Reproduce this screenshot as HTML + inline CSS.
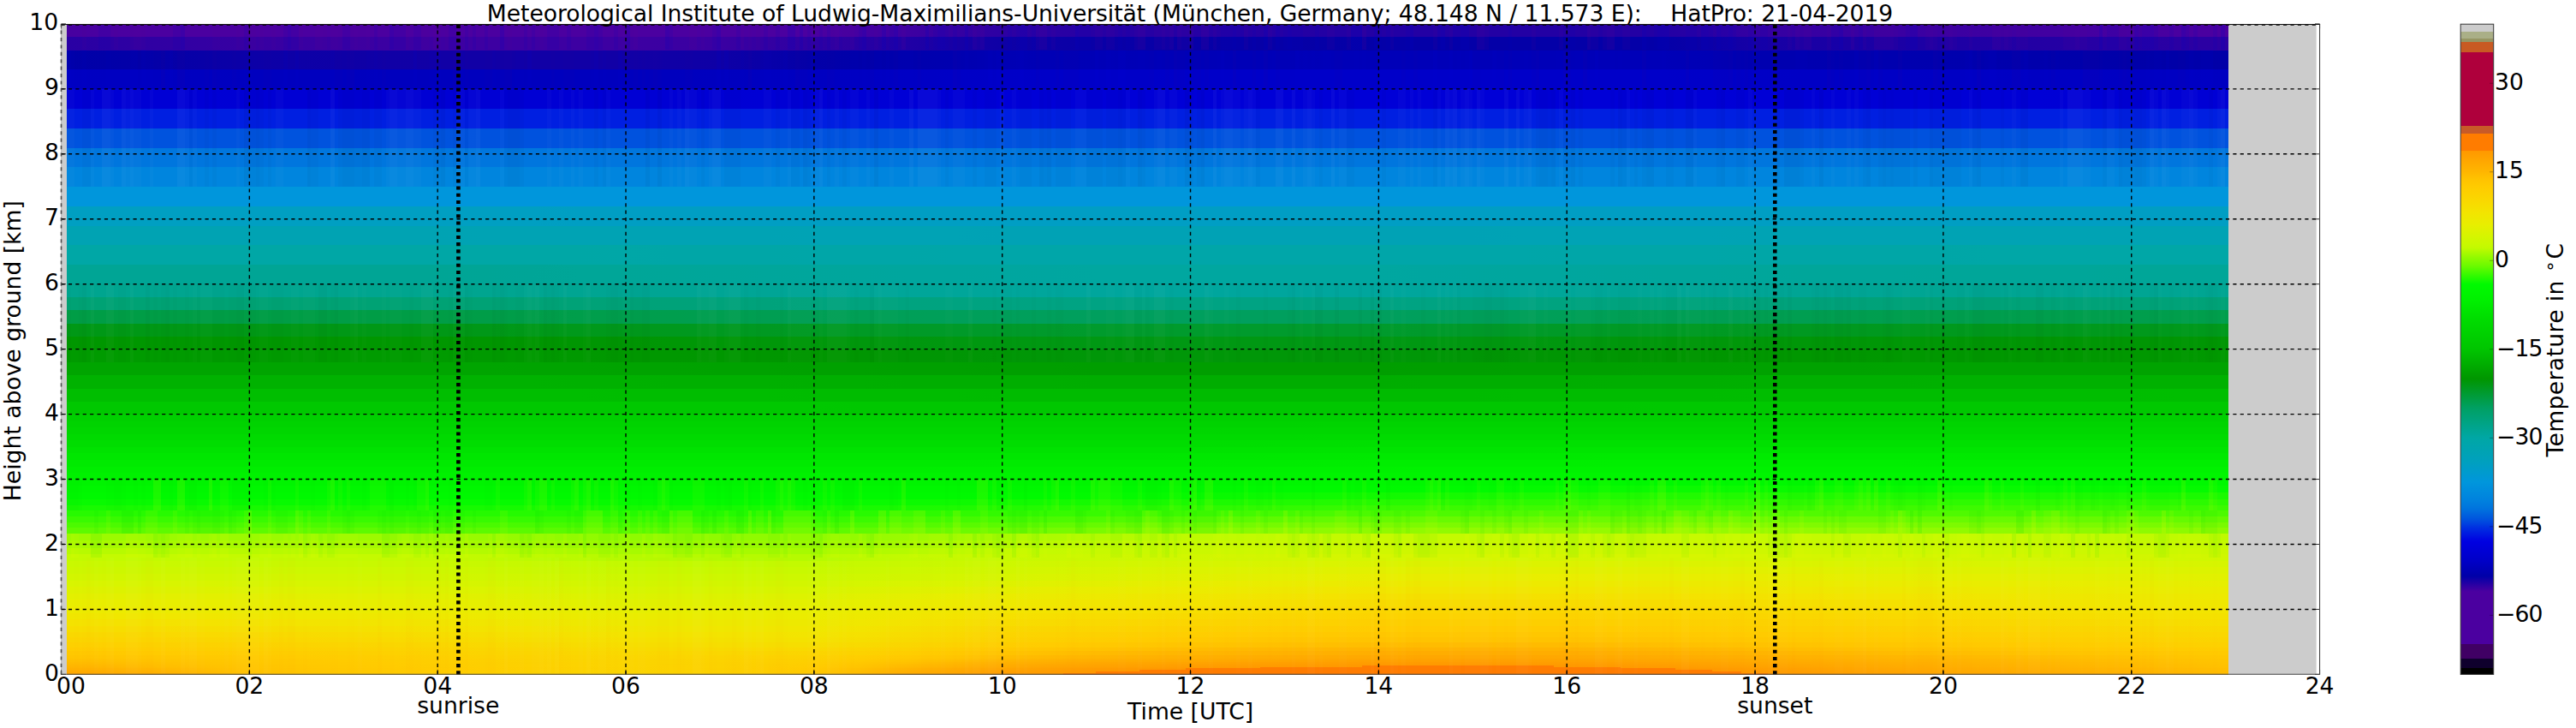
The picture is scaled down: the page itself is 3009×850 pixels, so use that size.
<!DOCTYPE html>
<html lang="en"><head><meta charset="utf-8"><title>HatPro temperature 21-04-2019</title>
<style>html,body{margin:0;padding:0;background:#fff}body{width:3009px;height:850px;overflow:hidden}svg{display:block}text{font-family:'DejaVu Sans', 'Liberation Sans', sans-serif;font-size:26.60px;fill:#000}</style></head><body>
<svg width="3009" height="850" viewBox="0 0 3009 850">
<rect width="3009" height="850" fill="#fff"/>
<defs>
<linearGradient id="g0" x1="0" x2="1" y1="0" y2="0"><stop offset="0.0000" stop-color="#ffa400"/><stop offset="0.0192" stop-color="#ffa900"/><stop offset="0.0410" stop-color="#ffaf00"/><stop offset="0.0627" stop-color="#ffb700"/><stop offset="0.0845" stop-color="#ffc100"/><stop offset="0.1063" stop-color="#ffc500"/><stop offset="0.1280" stop-color="#ffc800"/><stop offset="0.1498" stop-color="#ffca00"/><stop offset="0.1716" stop-color="#ffcc00"/><stop offset="0.1933" stop-color="#fdcf00"/><stop offset="0.2151" stop-color="#fcd100"/><stop offset="0.2369" stop-color="#fcd300"/><stop offset="0.2586" stop-color="#fbd400"/><stop offset="0.2804" stop-color="#fcd200"/><stop offset="0.3022" stop-color="#fdd100"/><stop offset="0.3239" stop-color="#ffcc00"/><stop offset="0.3457" stop-color="#ffc700"/><stop offset="0.3675" stop-color="#ffb900"/><stop offset="0.3892" stop-color="#ffab00"/><stop offset="0.4110" stop-color="#ffa400"/><stop offset="0.4328" stop-color="#ff9c00"/><stop offset="0.4545" stop-color="#ff9900"/><stop offset="0.4611" stop-color="#ff9800"/><stop offset="0.4611" stop-color="#ff7c00"/><stop offset="0.7871" stop-color="#ff7c00"/><stop offset="0.7871" stop-color="#ff9800"/><stop offset="0.8028" stop-color="#ff9b00"/><stop offset="0.8246" stop-color="#ff9f00"/><stop offset="0.8463" stop-color="#ffa200"/><stop offset="0.8681" stop-color="#ffa500"/><stop offset="0.8899" stop-color="#ffa800"/><stop offset="0.9116" stop-color="#ffab00"/><stop offset="0.9334" stop-color="#ffae00"/><stop offset="0.9552" stop-color="#ffb100"/><stop offset="0.9769" stop-color="#ffb500"/><stop offset="0.9987" stop-color="#ffbb00"/><stop offset="1.0000" stop-color="#ffbb00"/></linearGradient>
<linearGradient id="g1" x1="0" x2="1" y1="0" y2="0"><stop offset="0.0000" stop-color="#ffa800"/><stop offset="0.0192" stop-color="#ffad00"/><stop offset="0.0410" stop-color="#ffb200"/><stop offset="0.0627" stop-color="#ffb900"/><stop offset="0.0845" stop-color="#ffc200"/><stop offset="0.1063" stop-color="#ffc500"/><stop offset="0.1280" stop-color="#ffc800"/><stop offset="0.1498" stop-color="#ffca00"/><stop offset="0.1716" stop-color="#ffcc00"/><stop offset="0.1933" stop-color="#fecf00"/><stop offset="0.2151" stop-color="#fcd100"/><stop offset="0.2369" stop-color="#fcd300"/><stop offset="0.2586" stop-color="#fbd400"/><stop offset="0.2804" stop-color="#fcd300"/><stop offset="0.3022" stop-color="#fdd100"/><stop offset="0.3239" stop-color="#fecd00"/><stop offset="0.3457" stop-color="#ffc800"/><stop offset="0.3675" stop-color="#ffbc00"/><stop offset="0.3892" stop-color="#ffae00"/><stop offset="0.4110" stop-color="#ffa700"/><stop offset="0.4328" stop-color="#ff9f00"/><stop offset="0.4545" stop-color="#ff9c00"/><stop offset="0.4761" stop-color="#ff9800"/><stop offset="0.4761" stop-color="#ff7c00"/><stop offset="0.7748" stop-color="#ff7c00"/><stop offset="0.7748" stop-color="#ff9800"/><stop offset="0.7810" stop-color="#ff9900"/><stop offset="0.8028" stop-color="#ff9d00"/><stop offset="0.8246" stop-color="#ffa100"/><stop offset="0.8463" stop-color="#ffa400"/><stop offset="0.8681" stop-color="#ffa700"/><stop offset="0.8899" stop-color="#ffaa00"/><stop offset="0.9116" stop-color="#ffad00"/><stop offset="0.9334" stop-color="#ffb000"/><stop offset="0.9552" stop-color="#ffb300"/><stop offset="0.9769" stop-color="#ffb700"/><stop offset="0.9987" stop-color="#ffbc00"/><stop offset="1.0000" stop-color="#ffbc00"/></linearGradient>
<linearGradient id="g2" x1="0" x2="1" y1="0" y2="0"><stop offset="0.0000" stop-color="#ffac00"/><stop offset="0.0192" stop-color="#ffb000"/><stop offset="0.0410" stop-color="#ffb500"/><stop offset="0.0627" stop-color="#ffbc00"/><stop offset="0.0845" stop-color="#ffc300"/><stop offset="0.1063" stop-color="#ffc600"/><stop offset="0.1280" stop-color="#ffc800"/><stop offset="0.1498" stop-color="#ffca00"/><stop offset="0.1716" stop-color="#ffcc00"/><stop offset="0.1933" stop-color="#fece00"/><stop offset="0.2151" stop-color="#fdd100"/><stop offset="0.2369" stop-color="#fcd300"/><stop offset="0.2586" stop-color="#fbd400"/><stop offset="0.2804" stop-color="#fcd300"/><stop offset="0.3022" stop-color="#fcd100"/><stop offset="0.3239" stop-color="#fecd00"/><stop offset="0.3457" stop-color="#ffc900"/><stop offset="0.3675" stop-color="#ffbe00"/><stop offset="0.3892" stop-color="#ffb100"/><stop offset="0.4110" stop-color="#ffa900"/><stop offset="0.4328" stop-color="#ffa200"/><stop offset="0.4545" stop-color="#ff9e00"/><stop offset="0.4763" stop-color="#ff9a00"/><stop offset="0.4963" stop-color="#ff9800"/><stop offset="0.4963" stop-color="#ff7c00"/><stop offset="0.7612" stop-color="#ff7c00"/><stop offset="0.7612" stop-color="#ff9800"/><stop offset="0.7810" stop-color="#ff9b00"/><stop offset="0.8028" stop-color="#ff9f00"/><stop offset="0.8246" stop-color="#ffa300"/><stop offset="0.8463" stop-color="#ffa600"/><stop offset="0.8681" stop-color="#ffa900"/><stop offset="0.8899" stop-color="#ffac00"/><stop offset="0.9116" stop-color="#ffaf00"/><stop offset="0.9334" stop-color="#ffb200"/><stop offset="0.9552" stop-color="#ffb500"/><stop offset="0.9769" stop-color="#ffb900"/><stop offset="0.9987" stop-color="#ffbd00"/><stop offset="1.0000" stop-color="#ffbd00"/></linearGradient>
<linearGradient id="g3" x1="0" x2="1" y1="0" y2="0"><stop offset="0.0000" stop-color="#ffb000"/><stop offset="0.0192" stop-color="#ffb300"/><stop offset="0.0410" stop-color="#ffb800"/><stop offset="0.0627" stop-color="#ffbe00"/><stop offset="0.0845" stop-color="#ffc400"/><stop offset="0.1063" stop-color="#ffc600"/><stop offset="0.1280" stop-color="#ffc800"/><stop offset="0.1498" stop-color="#ffca00"/><stop offset="0.1716" stop-color="#ffcc00"/><stop offset="0.1933" stop-color="#fece00"/><stop offset="0.2151" stop-color="#fdd000"/><stop offset="0.2369" stop-color="#fcd200"/><stop offset="0.2586" stop-color="#fbd400"/><stop offset="0.2804" stop-color="#fcd300"/><stop offset="0.3022" stop-color="#fcd100"/><stop offset="0.3239" stop-color="#fece00"/><stop offset="0.3457" stop-color="#ffca00"/><stop offset="0.3675" stop-color="#ffc000"/><stop offset="0.3892" stop-color="#ffb400"/><stop offset="0.4110" stop-color="#ffac00"/><stop offset="0.4328" stop-color="#ffa500"/><stop offset="0.4545" stop-color="#ffa100"/><stop offset="0.4763" stop-color="#ff9c00"/><stop offset="0.4981" stop-color="#ff9a00"/><stop offset="0.5175" stop-color="#ff9800"/><stop offset="0.5175" stop-color="#ff7c00"/><stop offset="0.7441" stop-color="#ff7c00"/><stop offset="0.7441" stop-color="#ff9800"/><stop offset="0.7593" stop-color="#ff9a00"/><stop offset="0.7810" stop-color="#ff9e00"/><stop offset="0.8028" stop-color="#ffa100"/><stop offset="0.8246" stop-color="#ffa500"/><stop offset="0.8463" stop-color="#ffa800"/><stop offset="0.8681" stop-color="#ffab00"/><stop offset="0.8899" stop-color="#ffae00"/><stop offset="0.9116" stop-color="#ffb100"/><stop offset="0.9334" stop-color="#ffb300"/><stop offset="0.9552" stop-color="#ffb600"/><stop offset="0.9769" stop-color="#ffba00"/><stop offset="0.9987" stop-color="#ffbe00"/><stop offset="1.0000" stop-color="#ffbf00"/></linearGradient>
<linearGradient id="g4" x1="0" x2="1" y1="0" y2="0"><stop offset="0.0000" stop-color="#ffb300"/><stop offset="0.0192" stop-color="#ffb600"/><stop offset="0.0410" stop-color="#ffbb00"/><stop offset="0.0627" stop-color="#ffc000"/><stop offset="0.0845" stop-color="#ffc500"/><stop offset="0.1063" stop-color="#ffc700"/><stop offset="0.1280" stop-color="#ffc900"/><stop offset="0.1498" stop-color="#ffcb00"/><stop offset="0.1716" stop-color="#fecc00"/><stop offset="0.1933" stop-color="#fece00"/><stop offset="0.2151" stop-color="#fdd000"/><stop offset="0.2369" stop-color="#fcd200"/><stop offset="0.2586" stop-color="#fbd400"/><stop offset="0.2804" stop-color="#fcd300"/><stop offset="0.3022" stop-color="#fcd200"/><stop offset="0.3239" stop-color="#fece00"/><stop offset="0.3457" stop-color="#ffcb00"/><stop offset="0.3675" stop-color="#ffc300"/><stop offset="0.3892" stop-color="#ffb700"/><stop offset="0.4110" stop-color="#ffaf00"/><stop offset="0.4328" stop-color="#ffa800"/><stop offset="0.4545" stop-color="#ffa300"/><stop offset="0.4763" stop-color="#ff9f00"/><stop offset="0.4981" stop-color="#ff9d00"/><stop offset="0.5198" stop-color="#ff9a00"/><stop offset="0.5416" stop-color="#ff9900"/><stop offset="0.5521" stop-color="#ff9800"/><stop offset="0.5521" stop-color="#ff7c00"/><stop offset="0.7189" stop-color="#ff7c00"/><stop offset="0.7189" stop-color="#ff9800"/><stop offset="0.7375" stop-color="#ff9a00"/><stop offset="0.7593" stop-color="#ff9d00"/><stop offset="0.7810" stop-color="#ffa000"/><stop offset="0.8028" stop-color="#ffa300"/><stop offset="0.8246" stop-color="#ffa600"/><stop offset="0.8463" stop-color="#ffaa00"/><stop offset="0.8681" stop-color="#ffad00"/><stop offset="0.8899" stop-color="#ffaf00"/><stop offset="0.9116" stop-color="#ffb200"/><stop offset="0.9334" stop-color="#ffb500"/><stop offset="0.9552" stop-color="#ffb800"/><stop offset="0.9769" stop-color="#ffbc00"/><stop offset="0.9987" stop-color="#ffc000"/><stop offset="1.0000" stop-color="#ffc000"/></linearGradient>
<linearGradient id="g5" x1="0" x2="1" y1="0" y2="0"><stop offset="0.0000" stop-color="#ffb500"/><stop offset="0.0192" stop-color="#ffb800"/><stop offset="0.0410" stop-color="#ffbd00"/><stop offset="0.0627" stop-color="#ffc100"/><stop offset="0.0845" stop-color="#ffc500"/><stop offset="0.1063" stop-color="#ffc700"/><stop offset="0.1280" stop-color="#ffc900"/><stop offset="0.1498" stop-color="#ffcb00"/><stop offset="0.1716" stop-color="#fecd00"/><stop offset="0.1933" stop-color="#fdcf00"/><stop offset="0.2151" stop-color="#fdd100"/><stop offset="0.2369" stop-color="#fcd300"/><stop offset="0.2586" stop-color="#fbd500"/><stop offset="0.2804" stop-color="#fcd300"/><stop offset="0.3022" stop-color="#fcd200"/><stop offset="0.3239" stop-color="#fdcf00"/><stop offset="0.3457" stop-color="#ffcc00"/><stop offset="0.3675" stop-color="#ffc400"/><stop offset="0.3892" stop-color="#ffba00"/><stop offset="0.4110" stop-color="#ffb200"/><stop offset="0.4328" stop-color="#ffab00"/><stop offset="0.4545" stop-color="#ffa600"/><stop offset="0.4763" stop-color="#ffa200"/><stop offset="0.4981" stop-color="#ffa000"/><stop offset="0.5198" stop-color="#ff9d00"/><stop offset="0.5416" stop-color="#ff9c00"/><stop offset="0.5634" stop-color="#ff9a00"/><stop offset="0.5851" stop-color="#ff9900"/><stop offset="0.5991" stop-color="#ff9800"/><stop offset="0.5991" stop-color="#ff7c00"/><stop offset="0.6881" stop-color="#ff7c00"/><stop offset="0.6881" stop-color="#ff9800"/><stop offset="0.6940" stop-color="#ff9800"/><stop offset="0.7157" stop-color="#ff9a00"/><stop offset="0.7375" stop-color="#ff9c00"/><stop offset="0.7593" stop-color="#ff9f00"/><stop offset="0.7810" stop-color="#ffa200"/><stop offset="0.8028" stop-color="#ffa500"/><stop offset="0.8246" stop-color="#ffa800"/><stop offset="0.8463" stop-color="#ffab00"/><stop offset="0.8681" stop-color="#ffae00"/><stop offset="0.8899" stop-color="#ffb100"/><stop offset="0.9116" stop-color="#ffb300"/><stop offset="0.9334" stop-color="#ffb600"/><stop offset="0.9552" stop-color="#ffba00"/><stop offset="0.9769" stop-color="#ffbd00"/><stop offset="0.9987" stop-color="#ffc100"/><stop offset="1.0000" stop-color="#ffc100"/></linearGradient>
<linearGradient id="g6" x1="0" x2="1" y1="0" y2="0"><stop offset="0.0000" stop-color="#ffb800"/><stop offset="0.0192" stop-color="#ffbb00"/><stop offset="0.0410" stop-color="#ffbf00"/><stop offset="0.0627" stop-color="#ffc300"/><stop offset="0.0845" stop-color="#ffc600"/><stop offset="0.1063" stop-color="#ffc800"/><stop offset="0.1280" stop-color="#ffca00"/><stop offset="0.1498" stop-color="#ffcc00"/><stop offset="0.1716" stop-color="#fecd00"/><stop offset="0.1933" stop-color="#fdcf00"/><stop offset="0.2151" stop-color="#fdd100"/><stop offset="0.2369" stop-color="#fcd300"/><stop offset="0.2586" stop-color="#fbd500"/><stop offset="0.2804" stop-color="#fbd300"/><stop offset="0.3022" stop-color="#fcd200"/><stop offset="0.3239" stop-color="#fdcf00"/><stop offset="0.3457" stop-color="#fecd00"/><stop offset="0.3675" stop-color="#ffc600"/><stop offset="0.3892" stop-color="#ffbd00"/><stop offset="0.4110" stop-color="#ffb500"/><stop offset="0.4328" stop-color="#ffae00"/><stop offset="0.4545" stop-color="#ffa900"/><stop offset="0.4763" stop-color="#ffa500"/><stop offset="0.4981" stop-color="#ffa300"/><stop offset="0.5198" stop-color="#ffa000"/><stop offset="0.5416" stop-color="#ff9f00"/><stop offset="0.5634" stop-color="#ff9d00"/><stop offset="0.5851" stop-color="#ff9c00"/><stop offset="0.6069" stop-color="#ff9a00"/><stop offset="0.6287" stop-color="#ff9a00"/><stop offset="0.6504" stop-color="#ff9900"/><stop offset="0.6722" stop-color="#ff9a00"/><stop offset="0.6940" stop-color="#ff9b00"/><stop offset="0.7157" stop-color="#ff9d00"/><stop offset="0.7375" stop-color="#ff9f00"/><stop offset="0.7593" stop-color="#ffa200"/><stop offset="0.7810" stop-color="#ffa500"/><stop offset="0.8028" stop-color="#ffa700"/><stop offset="0.8246" stop-color="#ffaa00"/><stop offset="0.8463" stop-color="#ffad00"/><stop offset="0.8681" stop-color="#ffb000"/><stop offset="0.8899" stop-color="#ffb200"/><stop offset="0.9116" stop-color="#ffb500"/><stop offset="0.9334" stop-color="#ffb800"/><stop offset="0.9552" stop-color="#ffbb00"/><stop offset="0.9769" stop-color="#ffbe00"/><stop offset="0.9987" stop-color="#ffc200"/><stop offset="1.0000" stop-color="#ffc200"/></linearGradient>
<linearGradient id="g7" x1="0" x2="1" y1="0" y2="0"><stop offset="0.0000" stop-color="#ffbb00"/><stop offset="0.0192" stop-color="#ffbe00"/><stop offset="0.0410" stop-color="#ffc100"/><stop offset="0.0627" stop-color="#ffc400"/><stop offset="0.0845" stop-color="#ffc700"/><stop offset="0.1063" stop-color="#ffc900"/><stop offset="0.1280" stop-color="#ffca00"/><stop offset="0.1498" stop-color="#ffcc00"/><stop offset="0.1716" stop-color="#fece00"/><stop offset="0.1933" stop-color="#fdcf00"/><stop offset="0.2151" stop-color="#fcd100"/><stop offset="0.2369" stop-color="#fcd300"/><stop offset="0.2586" stop-color="#fbd500"/><stop offset="0.2804" stop-color="#fbd400"/><stop offset="0.3022" stop-color="#fcd200"/><stop offset="0.3239" stop-color="#fdd000"/><stop offset="0.3457" stop-color="#fece00"/><stop offset="0.3675" stop-color="#ffc800"/><stop offset="0.3892" stop-color="#ffc100"/><stop offset="0.4110" stop-color="#ffb800"/><stop offset="0.4328" stop-color="#ffb100"/><stop offset="0.4545" stop-color="#ffad00"/><stop offset="0.4763" stop-color="#ffa800"/><stop offset="0.4981" stop-color="#ffa600"/><stop offset="0.5198" stop-color="#ffa400"/><stop offset="0.5416" stop-color="#ffa200"/><stop offset="0.5634" stop-color="#ffa000"/><stop offset="0.5851" stop-color="#ff9f00"/><stop offset="0.6069" stop-color="#ff9d00"/><stop offset="0.6287" stop-color="#ff9c00"/><stop offset="0.6504" stop-color="#ff9c00"/><stop offset="0.6722" stop-color="#ff9d00"/><stop offset="0.6940" stop-color="#ff9e00"/><stop offset="0.7157" stop-color="#ffa000"/><stop offset="0.7375" stop-color="#ffa200"/><stop offset="0.7593" stop-color="#ffa400"/><stop offset="0.7810" stop-color="#ffa700"/><stop offset="0.8028" stop-color="#ffaa00"/><stop offset="0.8246" stop-color="#ffac00"/><stop offset="0.8463" stop-color="#ffaf00"/><stop offset="0.8681" stop-color="#ffb100"/><stop offset="0.8899" stop-color="#ffb400"/><stop offset="0.9116" stop-color="#ffb600"/><stop offset="0.9334" stop-color="#ffb900"/><stop offset="0.9552" stop-color="#ffbc00"/><stop offset="0.9769" stop-color="#ffc000"/><stop offset="0.9987" stop-color="#ffc300"/><stop offset="1.0000" stop-color="#ffc300"/></linearGradient>
<linearGradient id="g8" x1="0" x2="1" y1="0" y2="0"><stop offset="0.0000" stop-color="#ffbe00"/><stop offset="0.0192" stop-color="#ffc000"/><stop offset="0.0410" stop-color="#ffc300"/><stop offset="0.0627" stop-color="#ffc500"/><stop offset="0.0845" stop-color="#ffc800"/><stop offset="0.1063" stop-color="#ffc900"/><stop offset="0.1280" stop-color="#ffcb00"/><stop offset="0.1498" stop-color="#fecd00"/><stop offset="0.1716" stop-color="#fece00"/><stop offset="0.1933" stop-color="#fdd000"/><stop offset="0.2151" stop-color="#fcd200"/><stop offset="0.2369" stop-color="#fbd400"/><stop offset="0.2586" stop-color="#fbd500"/><stop offset="0.2804" stop-color="#fbd400"/><stop offset="0.3022" stop-color="#fcd300"/><stop offset="0.3239" stop-color="#fdd100"/><stop offset="0.3457" stop-color="#fdcf00"/><stop offset="0.3675" stop-color="#ffca00"/><stop offset="0.3892" stop-color="#ffc400"/><stop offset="0.4110" stop-color="#ffbc00"/><stop offset="0.4328" stop-color="#ffb400"/><stop offset="0.4545" stop-color="#ffb000"/><stop offset="0.4763" stop-color="#ffac00"/><stop offset="0.4981" stop-color="#ffaa00"/><stop offset="0.5198" stop-color="#ffa800"/><stop offset="0.5416" stop-color="#ffa600"/><stop offset="0.5634" stop-color="#ffa400"/><stop offset="0.5851" stop-color="#ffa200"/><stop offset="0.6069" stop-color="#ffa000"/><stop offset="0.6287" stop-color="#ffa000"/><stop offset="0.6504" stop-color="#ff9f00"/><stop offset="0.6722" stop-color="#ffa000"/><stop offset="0.6940" stop-color="#ffa100"/><stop offset="0.7157" stop-color="#ffa300"/><stop offset="0.7375" stop-color="#ffa500"/><stop offset="0.7593" stop-color="#ffa700"/><stop offset="0.7810" stop-color="#ffaa00"/><stop offset="0.8028" stop-color="#ffac00"/><stop offset="0.8246" stop-color="#ffae00"/><stop offset="0.8463" stop-color="#ffb100"/><stop offset="0.8681" stop-color="#ffb300"/><stop offset="0.8899" stop-color="#ffb500"/><stop offset="0.9116" stop-color="#ffb800"/><stop offset="0.9334" stop-color="#ffbb00"/><stop offset="0.9552" stop-color="#ffbe00"/><stop offset="0.9769" stop-color="#ffc100"/><stop offset="0.9987" stop-color="#ffc400"/><stop offset="1.0000" stop-color="#ffc400"/></linearGradient>
<linearGradient id="g9" x1="0" x2="1" y1="0" y2="0"><stop offset="0.0000" stop-color="#ffc100"/><stop offset="0.0192" stop-color="#ffc300"/><stop offset="0.0410" stop-color="#ffc500"/><stop offset="0.0627" stop-color="#ffc700"/><stop offset="0.0845" stop-color="#ffc900"/><stop offset="0.1063" stop-color="#ffca00"/><stop offset="0.1280" stop-color="#ffcc00"/><stop offset="0.1498" stop-color="#fecd00"/><stop offset="0.1716" stop-color="#fecf00"/><stop offset="0.1933" stop-color="#fdd000"/><stop offset="0.2151" stop-color="#fcd200"/><stop offset="0.2369" stop-color="#fbd400"/><stop offset="0.2586" stop-color="#fbd600"/><stop offset="0.2804" stop-color="#fbd400"/><stop offset="0.3022" stop-color="#fcd300"/><stop offset="0.3239" stop-color="#fcd100"/><stop offset="0.3457" stop-color="#fdd000"/><stop offset="0.3675" stop-color="#ffcc00"/><stop offset="0.3892" stop-color="#ffc700"/><stop offset="0.4110" stop-color="#ffc100"/><stop offset="0.4328" stop-color="#ffb900"/><stop offset="0.4545" stop-color="#ffb400"/><stop offset="0.4763" stop-color="#ffb000"/><stop offset="0.4981" stop-color="#ffae00"/><stop offset="0.5198" stop-color="#ffac00"/><stop offset="0.5416" stop-color="#ffaa00"/><stop offset="0.5634" stop-color="#ffa800"/><stop offset="0.5851" stop-color="#ffa600"/><stop offset="0.6069" stop-color="#ffa400"/><stop offset="0.6287" stop-color="#ffa300"/><stop offset="0.6504" stop-color="#ffa200"/><stop offset="0.6722" stop-color="#ffa300"/><stop offset="0.6940" stop-color="#ffa400"/><stop offset="0.7157" stop-color="#ffa600"/><stop offset="0.7375" stop-color="#ffa800"/><stop offset="0.7593" stop-color="#ffaa00"/><stop offset="0.7810" stop-color="#ffac00"/><stop offset="0.8028" stop-color="#ffaf00"/><stop offset="0.8246" stop-color="#ffb100"/><stop offset="0.8463" stop-color="#ffb300"/><stop offset="0.8681" stop-color="#ffb500"/><stop offset="0.8899" stop-color="#ffb700"/><stop offset="0.9116" stop-color="#ffba00"/><stop offset="0.9334" stop-color="#ffbd00"/><stop offset="0.9552" stop-color="#ffbf00"/><stop offset="0.9769" stop-color="#ffc200"/><stop offset="0.9987" stop-color="#ffc500"/><stop offset="1.0000" stop-color="#ffc500"/></linearGradient>
<linearGradient id="g10" x1="0" x2="1" y1="0" y2="0"><stop offset="0.0000" stop-color="#ffc500"/><stop offset="0.0192" stop-color="#ffc600"/><stop offset="0.0410" stop-color="#ffc700"/><stop offset="0.0627" stop-color="#ffc900"/><stop offset="0.0845" stop-color="#ffca00"/><stop offset="0.1063" stop-color="#ffcc00"/><stop offset="0.1280" stop-color="#fecd00"/><stop offset="0.1498" stop-color="#fece00"/><stop offset="0.1716" stop-color="#fdd000"/><stop offset="0.1933" stop-color="#fcd200"/><stop offset="0.2151" stop-color="#fcd300"/><stop offset="0.2369" stop-color="#fbd500"/><stop offset="0.2586" stop-color="#fad700"/><stop offset="0.2804" stop-color="#fbd600"/><stop offset="0.3022" stop-color="#fbd400"/><stop offset="0.3239" stop-color="#fcd300"/><stop offset="0.3457" stop-color="#fcd200"/><stop offset="0.3675" stop-color="#fece00"/><stop offset="0.3892" stop-color="#ffca00"/><stop offset="0.4110" stop-color="#ffc500"/><stop offset="0.4328" stop-color="#ffbe00"/><stop offset="0.4545" stop-color="#ffb900"/><stop offset="0.4763" stop-color="#ffb500"/><stop offset="0.4981" stop-color="#ffb200"/><stop offset="0.5198" stop-color="#ffb000"/><stop offset="0.5416" stop-color="#ffae00"/><stop offset="0.5634" stop-color="#ffac00"/><stop offset="0.5851" stop-color="#ffaa00"/><stop offset="0.6069" stop-color="#ffa800"/><stop offset="0.6287" stop-color="#ffa700"/><stop offset="0.6722" stop-color="#ffa700"/><stop offset="0.6940" stop-color="#ffa800"/><stop offset="0.7157" stop-color="#ffaa00"/><stop offset="0.7375" stop-color="#ffac00"/><stop offset="0.7593" stop-color="#ffae00"/><stop offset="0.7810" stop-color="#ffb000"/><stop offset="0.8028" stop-color="#ffb200"/><stop offset="0.8246" stop-color="#ffb400"/><stop offset="0.8463" stop-color="#ffb600"/><stop offset="0.8681" stop-color="#ffb800"/><stop offset="0.8899" stop-color="#ffbb00"/><stop offset="0.9116" stop-color="#ffbd00"/><stop offset="0.9334" stop-color="#ffc000"/><stop offset="0.9552" stop-color="#ffc200"/><stop offset="0.9769" stop-color="#ffc500"/><stop offset="0.9987" stop-color="#ffc700"/><stop offset="1.0000" stop-color="#ffc700"/></linearGradient>
<linearGradient id="g11" x1="0" x2="1" y1="0" y2="0"><stop offset="0.0000" stop-color="#ffc800"/><stop offset="0.0192" stop-color="#ffc900"/><stop offset="0.0410" stop-color="#ffcb00"/><stop offset="0.0627" stop-color="#ffcc00"/><stop offset="0.0845" stop-color="#fecd00"/><stop offset="0.1063" stop-color="#fece00"/><stop offset="0.1280" stop-color="#fdcf00"/><stop offset="0.1498" stop-color="#fdd100"/><stop offset="0.1716" stop-color="#fcd200"/><stop offset="0.1933" stop-color="#fbd400"/><stop offset="0.2151" stop-color="#fbd500"/><stop offset="0.2369" stop-color="#fad700"/><stop offset="0.2586" stop-color="#f9d900"/><stop offset="0.2804" stop-color="#fad800"/><stop offset="0.3022" stop-color="#fad700"/><stop offset="0.3239" stop-color="#fad600"/><stop offset="0.3457" stop-color="#fbd500"/><stop offset="0.3675" stop-color="#fcd200"/><stop offset="0.3892" stop-color="#fece00"/><stop offset="0.4110" stop-color="#ffc900"/><stop offset="0.4328" stop-color="#ffc400"/><stop offset="0.4545" stop-color="#ffc000"/><stop offset="0.4763" stop-color="#ffbb00"/><stop offset="0.4981" stop-color="#ffb800"/><stop offset="0.5198" stop-color="#ffb600"/><stop offset="0.5416" stop-color="#ffb400"/><stop offset="0.5634" stop-color="#ffb200"/><stop offset="0.5851" stop-color="#ffb000"/><stop offset="0.6069" stop-color="#ffae00"/><stop offset="0.6287" stop-color="#ffad00"/><stop offset="0.6940" stop-color="#ffad00"/><stop offset="0.7157" stop-color="#ffaf00"/><stop offset="0.7375" stop-color="#ffb100"/><stop offset="0.7593" stop-color="#ffb300"/><stop offset="0.7810" stop-color="#ffb500"/><stop offset="0.8028" stop-color="#ffb700"/><stop offset="0.8246" stop-color="#ffb900"/><stop offset="0.8463" stop-color="#ffbc00"/><stop offset="0.8681" stop-color="#ffbe00"/><stop offset="0.8899" stop-color="#ffc000"/><stop offset="0.9116" stop-color="#ffc300"/><stop offset="0.9334" stop-color="#ffc500"/><stop offset="0.9552" stop-color="#ffc600"/><stop offset="0.9769" stop-color="#ffc800"/><stop offset="0.9987" stop-color="#ffca00"/><stop offset="1.0000" stop-color="#ffca00"/></linearGradient>
<linearGradient id="g12" x1="0" x2="1" y1="0" y2="0"><stop offset="0.0000" stop-color="#ffcc00"/><stop offset="0.0192" stop-color="#fecd00"/><stop offset="0.0410" stop-color="#fece00"/><stop offset="0.0627" stop-color="#fdcf00"/><stop offset="0.0845" stop-color="#fdd000"/><stop offset="0.1063" stop-color="#fdd100"/><stop offset="0.1280" stop-color="#fcd200"/><stop offset="0.1498" stop-color="#fcd300"/><stop offset="0.1716" stop-color="#fbd400"/><stop offset="0.1933" stop-color="#fad600"/><stop offset="0.2151" stop-color="#fad700"/><stop offset="0.2369" stop-color="#f9d900"/><stop offset="0.2586" stop-color="#f8db00"/><stop offset="0.2804" stop-color="#f8db00"/><stop offset="0.3022" stop-color="#f8da00"/><stop offset="0.3239" stop-color="#f9da00"/><stop offset="0.3457" stop-color="#f9d900"/><stop offset="0.3675" stop-color="#fbd500"/><stop offset="0.3892" stop-color="#fcd200"/><stop offset="0.4110" stop-color="#fecd00"/><stop offset="0.4328" stop-color="#ffc900"/><stop offset="0.4545" stop-color="#ffc600"/><stop offset="0.4763" stop-color="#ffc300"/><stop offset="0.4981" stop-color="#ffc000"/><stop offset="0.5198" stop-color="#ffbd00"/><stop offset="0.5416" stop-color="#ffba00"/><stop offset="0.5634" stop-color="#ffb800"/><stop offset="0.5851" stop-color="#ffb600"/><stop offset="0.6069" stop-color="#ffb400"/><stop offset="0.6287" stop-color="#ffb400"/><stop offset="0.6504" stop-color="#ffb300"/><stop offset="0.6940" stop-color="#ffb300"/><stop offset="0.7157" stop-color="#ffb500"/><stop offset="0.7375" stop-color="#ffb700"/><stop offset="0.7593" stop-color="#ffb900"/><stop offset="0.7810" stop-color="#ffbc00"/><stop offset="0.8028" stop-color="#ffbe00"/><stop offset="0.8246" stop-color="#ffc000"/><stop offset="0.8463" stop-color="#ffc200"/><stop offset="0.8681" stop-color="#ffc300"/><stop offset="0.8899" stop-color="#ffc500"/><stop offset="0.9116" stop-color="#ffc700"/><stop offset="0.9334" stop-color="#ffc900"/><stop offset="0.9552" stop-color="#ffca00"/><stop offset="0.9769" stop-color="#ffcc00"/><stop offset="0.9987" stop-color="#fecd00"/><stop offset="1.0000" stop-color="#fecd00"/></linearGradient>
<linearGradient id="g13" x1="0" x2="1" y1="0" y2="0"><stop offset="0.0000" stop-color="#fdd000"/><stop offset="0.0192" stop-color="#fdd100"/><stop offset="0.0410" stop-color="#fcd100"/><stop offset="0.0627" stop-color="#fcd200"/><stop offset="0.0845" stop-color="#fcd300"/><stop offset="0.1063" stop-color="#fbd400"/><stop offset="0.1280" stop-color="#fbd500"/><stop offset="0.1498" stop-color="#fad600"/><stop offset="0.1716" stop-color="#fad700"/><stop offset="0.1933" stop-color="#f9d900"/><stop offset="0.2151" stop-color="#f8da00"/><stop offset="0.2369" stop-color="#f7dc00"/><stop offset="0.2586" stop-color="#f6de00"/><stop offset="0.3457" stop-color="#f6de00"/><stop offset="0.3675" stop-color="#f8da00"/><stop offset="0.3892" stop-color="#fad600"/><stop offset="0.4110" stop-color="#fcd200"/><stop offset="0.4328" stop-color="#fece00"/><stop offset="0.4545" stop-color="#ffcc00"/><stop offset="0.4763" stop-color="#ffc900"/><stop offset="0.4981" stop-color="#ffc700"/><stop offset="0.5198" stop-color="#ffc400"/><stop offset="0.5416" stop-color="#ffc300"/><stop offset="0.5634" stop-color="#ffc000"/><stop offset="0.5851" stop-color="#ffbf00"/><stop offset="0.6069" stop-color="#ffbd00"/><stop offset="0.6287" stop-color="#ffbc00"/><stop offset="0.6504" stop-color="#ffbc00"/><stop offset="0.6722" stop-color="#ffbb00"/><stop offset="0.6940" stop-color="#ffbb00"/><stop offset="0.7157" stop-color="#ffbd00"/><stop offset="0.7375" stop-color="#ffbf00"/><stop offset="0.7593" stop-color="#ffc100"/><stop offset="0.7810" stop-color="#ffc300"/><stop offset="0.8028" stop-color="#ffc400"/><stop offset="0.8246" stop-color="#ffc600"/><stop offset="0.8463" stop-color="#ffc700"/><stop offset="0.8681" stop-color="#ffc800"/><stop offset="0.8899" stop-color="#ffca00"/><stop offset="0.9116" stop-color="#ffcb00"/><stop offset="0.9334" stop-color="#fecd00"/><stop offset="0.9552" stop-color="#fece00"/><stop offset="0.9769" stop-color="#fdd000"/><stop offset="0.9987" stop-color="#fdd100"/><stop offset="1.0000" stop-color="#fdd100"/></linearGradient>
<linearGradient id="g14" x1="0" x2="1" y1="0" y2="0"><stop offset="0.0000" stop-color="#fbd400"/><stop offset="0.0192" stop-color="#fbd500"/><stop offset="0.0410" stop-color="#fbd500"/><stop offset="0.0627" stop-color="#fad600"/><stop offset="0.0845" stop-color="#fad700"/><stop offset="0.1063" stop-color="#fad800"/><stop offset="0.1280" stop-color="#f9d900"/><stop offset="0.1498" stop-color="#f9da00"/><stop offset="0.1716" stop-color="#f8db00"/><stop offset="0.1933" stop-color="#f7dc00"/><stop offset="0.2151" stop-color="#f6de00"/><stop offset="0.2369" stop-color="#f6df00"/><stop offset="0.2586" stop-color="#f5e100"/><stop offset="0.2804" stop-color="#f5e100"/><stop offset="0.3022" stop-color="#f4e100"/><stop offset="0.3239" stop-color="#f4e200"/><stop offset="0.3457" stop-color="#f4e200"/><stop offset="0.3675" stop-color="#f6de00"/><stop offset="0.3892" stop-color="#f8da00"/><stop offset="0.4110" stop-color="#fad600"/><stop offset="0.4328" stop-color="#fcd200"/><stop offset="0.4545" stop-color="#fdd000"/><stop offset="0.4763" stop-color="#fece00"/><stop offset="0.4981" stop-color="#ffcc00"/><stop offset="0.5198" stop-color="#ffca00"/><stop offset="0.5416" stop-color="#ffc800"/><stop offset="0.5634" stop-color="#ffc600"/><stop offset="0.5851" stop-color="#ffc500"/><stop offset="0.6069" stop-color="#ffc400"/><stop offset="0.6504" stop-color="#ffc400"/><stop offset="0.6722" stop-color="#ffc300"/><stop offset="0.6940" stop-color="#ffc300"/><stop offset="0.7157" stop-color="#ffc400"/><stop offset="0.7375" stop-color="#ffc500"/><stop offset="0.7593" stop-color="#ffc700"/><stop offset="0.7810" stop-color="#ffc800"/><stop offset="0.8028" stop-color="#ffc900"/><stop offset="0.8246" stop-color="#ffca00"/><stop offset="0.8463" stop-color="#ffcb00"/><stop offset="0.8681" stop-color="#ffcc00"/><stop offset="0.8899" stop-color="#fecd00"/><stop offset="0.9116" stop-color="#fdcf00"/><stop offset="0.9334" stop-color="#fdd000"/><stop offset="0.9552" stop-color="#fcd200"/><stop offset="0.9769" stop-color="#fcd300"/><stop offset="0.9987" stop-color="#fbd400"/><stop offset="1.0000" stop-color="#fbd400"/></linearGradient>
<linearGradient id="g15" x1="0" x2="1" y1="0" y2="0"><stop offset="0.0000" stop-color="#f9d800"/><stop offset="0.0192" stop-color="#f9d800"/><stop offset="0.0410" stop-color="#f9d900"/><stop offset="0.0627" stop-color="#f9da00"/><stop offset="0.0845" stop-color="#f8da00"/><stop offset="0.1063" stop-color="#f8db00"/><stop offset="0.1280" stop-color="#f7dc00"/><stop offset="0.1498" stop-color="#f7dd00"/><stop offset="0.1716" stop-color="#f6de00"/><stop offset="0.1933" stop-color="#f5df00"/><stop offset="0.2151" stop-color="#f5e100"/><stop offset="0.2369" stop-color="#f4e200"/><stop offset="0.2586" stop-color="#f3e400"/><stop offset="0.3239" stop-color="#f3e400"/><stop offset="0.3457" stop-color="#f2e500"/><stop offset="0.3675" stop-color="#f5e100"/><stop offset="0.3892" stop-color="#f7dd00"/><stop offset="0.4110" stop-color="#f9d900"/><stop offset="0.4328" stop-color="#fbd500"/><stop offset="0.4545" stop-color="#fcd300"/><stop offset="0.4763" stop-color="#fcd100"/><stop offset="0.4981" stop-color="#fdcf00"/><stop offset="0.5198" stop-color="#fece00"/><stop offset="0.5416" stop-color="#ffcc00"/><stop offset="0.5634" stop-color="#ffca00"/><stop offset="0.5851" stop-color="#ffc900"/><stop offset="0.6069" stop-color="#ffc800"/><stop offset="0.6287" stop-color="#ffc800"/><stop offset="0.6504" stop-color="#ffc700"/><stop offset="0.6940" stop-color="#ffc700"/><stop offset="0.7157" stop-color="#ffc800"/><stop offset="0.7375" stop-color="#ffc900"/><stop offset="0.7593" stop-color="#ffca00"/><stop offset="0.7810" stop-color="#ffcc00"/><stop offset="0.8028" stop-color="#fecc00"/><stop offset="0.8246" stop-color="#fecd00"/><stop offset="0.8463" stop-color="#fece00"/><stop offset="0.8681" stop-color="#fdcf00"/><stop offset="0.8899" stop-color="#fdd000"/><stop offset="0.9116" stop-color="#fcd200"/><stop offset="0.9334" stop-color="#fcd300"/><stop offset="0.9552" stop-color="#fbd500"/><stop offset="0.9769" stop-color="#fad600"/><stop offset="0.9987" stop-color="#fad700"/><stop offset="1.0000" stop-color="#fad700"/></linearGradient>
<linearGradient id="g16" x1="0" x2="1" y1="0" y2="0"><stop offset="0.0000" stop-color="#f7dd00"/><stop offset="0.0410" stop-color="#f7dd00"/><stop offset="0.0627" stop-color="#f6de00"/><stop offset="0.0845" stop-color="#f6df00"/><stop offset="0.1063" stop-color="#f5df00"/><stop offset="0.1280" stop-color="#f5e000"/><stop offset="0.1498" stop-color="#f5e100"/><stop offset="0.1716" stop-color="#f4e200"/><stop offset="0.1933" stop-color="#f3e300"/><stop offset="0.2151" stop-color="#f3e400"/><stop offset="0.2369" stop-color="#f1e500"/><stop offset="0.2586" stop-color="#f0e600"/><stop offset="0.2804" stop-color="#f0e700"/><stop offset="0.3457" stop-color="#f0e700"/><stop offset="0.3675" stop-color="#f3e400"/><stop offset="0.3892" stop-color="#f5e000"/><stop offset="0.4110" stop-color="#f7dc00"/><stop offset="0.4328" stop-color="#f9d800"/><stop offset="0.4545" stop-color="#fad600"/><stop offset="0.4763" stop-color="#fbd500"/><stop offset="0.4981" stop-color="#fcd300"/><stop offset="0.5198" stop-color="#fcd100"/><stop offset="0.5416" stop-color="#fdd000"/><stop offset="0.5634" stop-color="#fece00"/><stop offset="0.5851" stop-color="#fecd00"/><stop offset="0.6069" stop-color="#ffcc00"/><stop offset="0.6287" stop-color="#ffcc00"/><stop offset="0.6504" stop-color="#ffcb00"/><stop offset="0.6940" stop-color="#ffcb00"/><stop offset="0.7157" stop-color="#ffcc00"/><stop offset="0.7375" stop-color="#fecd00"/><stop offset="0.7593" stop-color="#fece00"/><stop offset="0.7810" stop-color="#fdcf00"/><stop offset="0.8028" stop-color="#fdd000"/><stop offset="0.8246" stop-color="#fdd000"/><stop offset="0.8463" stop-color="#fcd100"/><stop offset="0.8681" stop-color="#fcd200"/><stop offset="0.8899" stop-color="#fbd400"/><stop offset="0.9116" stop-color="#fbd500"/><stop offset="0.9334" stop-color="#fad600"/><stop offset="0.9552" stop-color="#f9d800"/><stop offset="0.9769" stop-color="#f9d900"/><stop offset="0.9987" stop-color="#f8da00"/><stop offset="1.0000" stop-color="#f8da00"/></linearGradient>
<linearGradient id="g17" x1="0" x2="1" y1="0" y2="0"><stop offset="0.0000" stop-color="#f4e200"/><stop offset="0.0410" stop-color="#f4e200"/><stop offset="0.0627" stop-color="#f4e300"/><stop offset="0.0845" stop-color="#f3e300"/><stop offset="0.1063" stop-color="#f3e400"/><stop offset="0.1280" stop-color="#f2e400"/><stop offset="0.1498" stop-color="#f2e500"/><stop offset="0.1716" stop-color="#f1e500"/><stop offset="0.1933" stop-color="#f0e600"/><stop offset="0.2151" stop-color="#efe700"/><stop offset="0.2369" stop-color="#eee800"/><stop offset="0.2586" stop-color="#ede900"/><stop offset="0.3457" stop-color="#ede900"/><stop offset="0.3675" stop-color="#f0e700"/><stop offset="0.3892" stop-color="#f3e400"/><stop offset="0.4110" stop-color="#f5e000"/><stop offset="0.4328" stop-color="#f7dd00"/><stop offset="0.4545" stop-color="#f8db00"/><stop offset="0.4763" stop-color="#f9d900"/><stop offset="0.4981" stop-color="#fad700"/><stop offset="0.5198" stop-color="#fbd500"/><stop offset="0.5416" stop-color="#fbd400"/><stop offset="0.5634" stop-color="#fcd200"/><stop offset="0.5851" stop-color="#fdd100"/><stop offset="0.6069" stop-color="#fdcf00"/><stop offset="0.6940" stop-color="#fdcf00"/><stop offset="0.7157" stop-color="#fdd000"/><stop offset="0.7375" stop-color="#fdd000"/><stop offset="0.7593" stop-color="#fcd100"/><stop offset="0.7810" stop-color="#fcd200"/><stop offset="0.8028" stop-color="#fcd300"/><stop offset="0.8246" stop-color="#fbd400"/><stop offset="0.8463" stop-color="#fbd500"/><stop offset="0.8681" stop-color="#fbd600"/><stop offset="0.8899" stop-color="#fad700"/><stop offset="0.9116" stop-color="#f9d900"/><stop offset="0.9334" stop-color="#f8da00"/><stop offset="0.9552" stop-color="#f7dc00"/><stop offset="0.9769" stop-color="#f7dd00"/><stop offset="0.9987" stop-color="#f6de00"/><stop offset="1.0000" stop-color="#f6de00"/></linearGradient>
<linearGradient id="g18" x1="0" x2="1" y1="0" y2="0"><stop offset="0.0000" stop-color="#f0e600"/><stop offset="0.0192" stop-color="#f0e700"/><stop offset="0.0627" stop-color="#f0e700"/><stop offset="0.0845" stop-color="#efe700"/><stop offset="0.1063" stop-color="#efe800"/><stop offset="0.1280" stop-color="#efe800"/><stop offset="0.1498" stop-color="#eee800"/><stop offset="0.1716" stop-color="#eee900"/><stop offset="0.1933" stop-color="#edea00"/><stop offset="0.2151" stop-color="#eceb00"/><stop offset="0.2369" stop-color="#ebeb00"/><stop offset="0.2586" stop-color="#eaec00"/><stop offset="0.3239" stop-color="#eaec00"/><stop offset="0.3457" stop-color="#ebec00"/><stop offset="0.3675" stop-color="#ede900"/><stop offset="0.3892" stop-color="#f0e700"/><stop offset="0.4110" stop-color="#f3e400"/><stop offset="0.4328" stop-color="#f5e100"/><stop offset="0.4545" stop-color="#f6df00"/><stop offset="0.4763" stop-color="#f7dd00"/><stop offset="0.4981" stop-color="#f7dc00"/><stop offset="0.5198" stop-color="#f8da00"/><stop offset="0.5416" stop-color="#f9d800"/><stop offset="0.5634" stop-color="#fad600"/><stop offset="0.5851" stop-color="#fbd500"/><stop offset="0.6069" stop-color="#fcd300"/><stop offset="0.6940" stop-color="#fcd300"/><stop offset="0.7157" stop-color="#fbd400"/><stop offset="0.7375" stop-color="#fbd400"/><stop offset="0.7593" stop-color="#fbd500"/><stop offset="0.7810" stop-color="#fad600"/><stop offset="0.8028" stop-color="#fad700"/><stop offset="0.8246" stop-color="#fad800"/><stop offset="0.8463" stop-color="#f9d900"/><stop offset="0.8681" stop-color="#f9da00"/><stop offset="0.8899" stop-color="#f8db00"/><stop offset="0.9116" stop-color="#f7dd00"/><stop offset="0.9334" stop-color="#f6de00"/><stop offset="0.9552" stop-color="#f5e000"/><stop offset="0.9769" stop-color="#f5e100"/><stop offset="0.9987" stop-color="#f4e100"/><stop offset="1.0000" stop-color="#f4e100"/></linearGradient>
<linearGradient id="g19" x1="0" x2="1" y1="0" y2="0"><stop offset="0.0000" stop-color="#eceb00"/><stop offset="0.0192" stop-color="#eceb00"/><stop offset="0.0410" stop-color="#ebeb00"/><stop offset="0.1063" stop-color="#ebeb00"/><stop offset="0.1280" stop-color="#ebec00"/><stop offset="0.1498" stop-color="#eaec00"/><stop offset="0.1716" stop-color="#eaec00"/><stop offset="0.1933" stop-color="#e9ed00"/><stop offset="0.2151" stop-color="#e8ee00"/><stop offset="0.2369" stop-color="#e7ee00"/><stop offset="0.2586" stop-color="#e5ef00"/><stop offset="0.2804" stop-color="#e6ef00"/><stop offset="0.3022" stop-color="#e7ef00"/><stop offset="0.3239" stop-color="#e7ee00"/><stop offset="0.3457" stop-color="#e8ee00"/><stop offset="0.3675" stop-color="#eaec00"/><stop offset="0.3892" stop-color="#edea00"/><stop offset="0.4110" stop-color="#efe700"/><stop offset="0.4328" stop-color="#f2e500"/><stop offset="0.4545" stop-color="#f3e400"/><stop offset="0.4763" stop-color="#f4e200"/><stop offset="0.4981" stop-color="#f5e100"/><stop offset="0.5198" stop-color="#f6df00"/><stop offset="0.5416" stop-color="#f7dd00"/><stop offset="0.5634" stop-color="#f8db00"/><stop offset="0.5851" stop-color="#f9d900"/><stop offset="0.6069" stop-color="#fad700"/><stop offset="0.6940" stop-color="#fad700"/><stop offset="0.7157" stop-color="#fad800"/><stop offset="0.7375" stop-color="#f9d900"/><stop offset="0.7593" stop-color="#f9d900"/><stop offset="0.7810" stop-color="#f8da00"/><stop offset="0.8028" stop-color="#f8db00"/><stop offset="0.8246" stop-color="#f7dc00"/><stop offset="0.8463" stop-color="#f7dd00"/><stop offset="0.8681" stop-color="#f6de00"/><stop offset="0.8899" stop-color="#f6df00"/><stop offset="0.9116" stop-color="#f5e100"/><stop offset="0.9334" stop-color="#f4e200"/><stop offset="0.9552" stop-color="#f3e400"/><stop offset="0.9769" stop-color="#f3e400"/><stop offset="0.9987" stop-color="#f2e500"/><stop offset="1.0000" stop-color="#f2e500"/></linearGradient>
<linearGradient id="g20" x1="0" x2="1" y1="0" y2="0"><stop offset="0.0000" stop-color="#e9ee00"/><stop offset="0.0192" stop-color="#e8ee00"/><stop offset="0.1063" stop-color="#e8ee00"/><stop offset="0.1280" stop-color="#e7ee00"/><stop offset="0.1498" stop-color="#e7ee00"/><stop offset="0.1716" stop-color="#e6ef00"/><stop offset="0.1933" stop-color="#e5ef00"/><stop offset="0.2151" stop-color="#e3f000"/><stop offset="0.2369" stop-color="#e2f100"/><stop offset="0.2586" stop-color="#e0f100"/><stop offset="0.2804" stop-color="#e1f100"/><stop offset="0.3022" stop-color="#e1f100"/><stop offset="0.3239" stop-color="#e2f000"/><stop offset="0.3457" stop-color="#e3f000"/><stop offset="0.3675" stop-color="#e6ef00"/><stop offset="0.3892" stop-color="#e9ed00"/><stop offset="0.4110" stop-color="#eceb00"/><stop offset="0.4328" stop-color="#eee900"/><stop offset="0.4545" stop-color="#efe700"/><stop offset="0.4763" stop-color="#f1e600"/><stop offset="0.4981" stop-color="#f2e500"/><stop offset="0.5198" stop-color="#f3e400"/><stop offset="0.5416" stop-color="#f4e200"/><stop offset="0.5634" stop-color="#f5e000"/><stop offset="0.5851" stop-color="#f6de00"/><stop offset="0.6069" stop-color="#f7dc00"/><stop offset="0.6940" stop-color="#f7dc00"/><stop offset="0.7157" stop-color="#f7dd00"/><stop offset="0.7375" stop-color="#f7dd00"/><stop offset="0.7593" stop-color="#f6de00"/><stop offset="0.7810" stop-color="#f6df00"/><stop offset="0.8028" stop-color="#f5e000"/><stop offset="0.8246" stop-color="#f5e000"/><stop offset="0.8463" stop-color="#f4e100"/><stop offset="0.8681" stop-color="#f4e200"/><stop offset="0.8899" stop-color="#f3e300"/><stop offset="0.9116" stop-color="#f2e500"/><stop offset="0.9334" stop-color="#f1e600"/><stop offset="0.9552" stop-color="#f0e700"/><stop offset="0.9769" stop-color="#f0e700"/><stop offset="0.9987" stop-color="#efe700"/><stop offset="1.0000" stop-color="#efe700"/></linearGradient>
<linearGradient id="g21" x1="0" x2="1" y1="0" y2="0"><stop offset="0.0000" stop-color="#e3f000"/><stop offset="0.0845" stop-color="#e3f000"/><stop offset="0.1063" stop-color="#e2f000"/><stop offset="0.1280" stop-color="#e2f100"/><stop offset="0.1498" stop-color="#e2f100"/><stop offset="0.1716" stop-color="#e1f100"/><stop offset="0.1933" stop-color="#e0f100"/><stop offset="0.2151" stop-color="#def200"/><stop offset="0.2369" stop-color="#ddf300"/><stop offset="0.2586" stop-color="#dbf300"/><stop offset="0.2804" stop-color="#dcf300"/><stop offset="0.3022" stop-color="#dcf300"/><stop offset="0.3239" stop-color="#ddf300"/><stop offset="0.3457" stop-color="#ddf300"/><stop offset="0.3675" stop-color="#e1f100"/><stop offset="0.3892" stop-color="#e4f000"/><stop offset="0.4110" stop-color="#e8ee00"/><stop offset="0.4328" stop-color="#eaec00"/><stop offset="0.4545" stop-color="#ebeb00"/><stop offset="0.4763" stop-color="#edea00"/><stop offset="0.4981" stop-color="#eee800"/><stop offset="0.5198" stop-color="#efe700"/><stop offset="0.5416" stop-color="#f1e600"/><stop offset="0.5634" stop-color="#f2e400"/><stop offset="0.5851" stop-color="#f4e300"/><stop offset="0.6069" stop-color="#f4e100"/><stop offset="0.6722" stop-color="#f4e100"/><stop offset="0.6940" stop-color="#f5e100"/><stop offset="0.7157" stop-color="#f4e200"/><stop offset="0.7375" stop-color="#f4e200"/><stop offset="0.7593" stop-color="#f4e300"/><stop offset="0.7810" stop-color="#f3e300"/><stop offset="0.8028" stop-color="#f3e400"/><stop offset="0.8246" stop-color="#f2e500"/><stop offset="0.8463" stop-color="#f2e500"/><stop offset="0.8681" stop-color="#f1e600"/><stop offset="0.8899" stop-color="#f0e700"/><stop offset="0.9116" stop-color="#efe800"/><stop offset="0.9334" stop-color="#eee800"/><stop offset="0.9552" stop-color="#ede900"/><stop offset="0.9769" stop-color="#ede900"/><stop offset="0.9987" stop-color="#edea00"/><stop offset="1.0000" stop-color="#edea00"/></linearGradient>
<linearGradient id="g22" x1="0" x2="1" y1="0" y2="0"><stop offset="0.0000" stop-color="#def200"/><stop offset="0.0192" stop-color="#ddf200"/><stop offset="0.0627" stop-color="#ddf200"/><stop offset="0.0845" stop-color="#ddf300"/><stop offset="0.1063" stop-color="#ddf300"/><stop offset="0.1280" stop-color="#dcf300"/><stop offset="0.1716" stop-color="#dcf300"/><stop offset="0.1933" stop-color="#dbf400"/><stop offset="0.2151" stop-color="#d9f400"/><stop offset="0.2369" stop-color="#d8f500"/><stop offset="0.2586" stop-color="#d6f500"/><stop offset="0.2804" stop-color="#d7f500"/><stop offset="0.3239" stop-color="#d7f500"/><stop offset="0.3457" stop-color="#d8f500"/><stop offset="0.3675" stop-color="#dbf300"/><stop offset="0.3892" stop-color="#def200"/><stop offset="0.4110" stop-color="#e1f100"/><stop offset="0.4328" stop-color="#e4ef00"/><stop offset="0.4545" stop-color="#e7ee00"/><stop offset="0.4763" stop-color="#e9ed00"/><stop offset="0.4981" stop-color="#eaec00"/><stop offset="0.5198" stop-color="#eceb00"/><stop offset="0.5416" stop-color="#edea00"/><stop offset="0.5634" stop-color="#eee800"/><stop offset="0.5851" stop-color="#f0e700"/><stop offset="0.6069" stop-color="#f1e600"/><stop offset="0.7157" stop-color="#f1e600"/><stop offset="0.7375" stop-color="#f0e600"/><stop offset="0.7593" stop-color="#f0e700"/><stop offset="0.7810" stop-color="#f0e700"/><stop offset="0.8028" stop-color="#efe800"/><stop offset="0.8246" stop-color="#eee800"/><stop offset="0.8463" stop-color="#eee900"/><stop offset="0.8681" stop-color="#ede900"/><stop offset="0.8899" stop-color="#edea00"/><stop offset="0.9116" stop-color="#ecea00"/><stop offset="0.9334" stop-color="#ebeb00"/><stop offset="0.9552" stop-color="#ebec00"/><stop offset="0.9769" stop-color="#eaec00"/><stop offset="1.0000" stop-color="#eaec00"/></linearGradient>
<linearGradient id="g23" x1="0" x2="1" y1="0" y2="0"><stop offset="0.0000" stop-color="#d8f500"/><stop offset="0.0627" stop-color="#d8f500"/><stop offset="0.0845" stop-color="#d7f500"/><stop offset="0.1716" stop-color="#d7f500"/><stop offset="0.1933" stop-color="#d5f500"/><stop offset="0.2151" stop-color="#d4f600"/><stop offset="0.2369" stop-color="#d3f600"/><stop offset="0.2586" stop-color="#d1f600"/><stop offset="0.2804" stop-color="#d2f600"/><stop offset="0.3457" stop-color="#d2f600"/><stop offset="0.3675" stop-color="#d5f600"/><stop offset="0.3892" stop-color="#d8f500"/><stop offset="0.4110" stop-color="#daf400"/><stop offset="0.4328" stop-color="#ddf200"/><stop offset="0.4545" stop-color="#e0f100"/><stop offset="0.4763" stop-color="#e2f000"/><stop offset="0.4981" stop-color="#e5ef00"/><stop offset="0.5198" stop-color="#e7ee00"/><stop offset="0.5416" stop-color="#e9ed00"/><stop offset="0.5634" stop-color="#eaec00"/><stop offset="0.5851" stop-color="#ebeb00"/><stop offset="0.6069" stop-color="#ecea00"/><stop offset="0.6287" stop-color="#edea00"/><stop offset="0.7157" stop-color="#edea00"/><stop offset="0.7375" stop-color="#ecea00"/><stop offset="0.7810" stop-color="#ecea00"/><stop offset="0.8028" stop-color="#ebeb00"/><stop offset="0.8246" stop-color="#ebec00"/><stop offset="0.8463" stop-color="#eaec00"/><stop offset="0.8681" stop-color="#eaed00"/><stop offset="0.8899" stop-color="#e9ed00"/><stop offset="0.9116" stop-color="#e9ed00"/><stop offset="0.9334" stop-color="#e8ee00"/><stop offset="0.9552" stop-color="#e7ee00"/><stop offset="0.9769" stop-color="#e7ee00"/><stop offset="0.9987" stop-color="#e6ef00"/><stop offset="1.0000" stop-color="#e6ef00"/></linearGradient>
<linearGradient id="g24" x1="0" x2="1" y1="0" y2="0"><stop offset="0.0000" stop-color="#d2f600"/><stop offset="0.1280" stop-color="#d2f600"/><stop offset="0.1498" stop-color="#d1f600"/><stop offset="0.1716" stop-color="#d1f600"/><stop offset="0.1933" stop-color="#d0f700"/><stop offset="0.2151" stop-color="#cff700"/><stop offset="0.2369" stop-color="#cef700"/><stop offset="0.2586" stop-color="#cdf800"/><stop offset="0.3457" stop-color="#cdf800"/><stop offset="0.3675" stop-color="#cff700"/><stop offset="0.3892" stop-color="#d1f600"/><stop offset="0.4110" stop-color="#d4f600"/><stop offset="0.4328" stop-color="#d6f500"/><stop offset="0.4545" stop-color="#d9f400"/><stop offset="0.4763" stop-color="#dbf300"/><stop offset="0.4981" stop-color="#def200"/><stop offset="0.5198" stop-color="#e0f100"/><stop offset="0.5416" stop-color="#e2f000"/><stop offset="0.5634" stop-color="#e4f000"/><stop offset="0.5851" stop-color="#e6ef00"/><stop offset="0.6069" stop-color="#e8ee00"/><stop offset="0.6722" stop-color="#e8ee00"/><stop offset="0.6940" stop-color="#e9ee00"/><stop offset="0.7157" stop-color="#e8ee00"/><stop offset="0.7810" stop-color="#e8ee00"/><stop offset="0.8028" stop-color="#e7ee00"/><stop offset="0.8246" stop-color="#e6ef00"/><stop offset="0.8463" stop-color="#e5ef00"/><stop offset="0.8681" stop-color="#e4f000"/><stop offset="0.8899" stop-color="#e4f000"/><stop offset="0.9116" stop-color="#e3f000"/><stop offset="0.9334" stop-color="#e3f000"/><stop offset="0.9552" stop-color="#e2f000"/><stop offset="0.9769" stop-color="#e2f100"/><stop offset="0.9987" stop-color="#e1f100"/><stop offset="1.0000" stop-color="#e1f100"/></linearGradient>
<linearGradient id="g25" x1="0" x2="1" y1="0" y2="0"><stop offset="0.0000" stop-color="#cdf700"/><stop offset="0.0845" stop-color="#cdf700"/><stop offset="0.1063" stop-color="#cdf800"/><stop offset="0.1716" stop-color="#cdf800"/><stop offset="0.1933" stop-color="#ccf800"/><stop offset="0.2151" stop-color="#caf800"/><stop offset="0.2369" stop-color="#c9f800"/><stop offset="0.2586" stop-color="#c8f900"/><stop offset="0.3457" stop-color="#c8f900"/><stop offset="0.3675" stop-color="#caf800"/><stop offset="0.3892" stop-color="#cdf800"/><stop offset="0.4110" stop-color="#cff700"/><stop offset="0.4328" stop-color="#d1f600"/><stop offset="0.4545" stop-color="#d4f600"/><stop offset="0.4763" stop-color="#d6f500"/><stop offset="0.4981" stop-color="#d9f400"/><stop offset="0.5198" stop-color="#dbf300"/><stop offset="0.5416" stop-color="#ddf300"/><stop offset="0.5634" stop-color="#def200"/><stop offset="0.5851" stop-color="#e0f100"/><stop offset="0.6069" stop-color="#e2f100"/><stop offset="0.6287" stop-color="#e2f100"/><stop offset="0.6504" stop-color="#e2f000"/><stop offset="0.7375" stop-color="#e2f000"/><stop offset="0.7593" stop-color="#e2f100"/><stop offset="0.7810" stop-color="#e2f100"/><stop offset="0.8028" stop-color="#e1f100"/><stop offset="0.8246" stop-color="#e0f100"/><stop offset="0.8463" stop-color="#dff200"/><stop offset="0.8681" stop-color="#def200"/><stop offset="0.8899" stop-color="#def200"/><stop offset="0.9116" stop-color="#ddf200"/><stop offset="0.9334" stop-color="#ddf300"/><stop offset="0.9552" stop-color="#ddf300"/><stop offset="0.9769" stop-color="#dcf300"/><stop offset="1.0000" stop-color="#dcf300"/></linearGradient>
<linearGradient id="g26" x1="0" x2="1" y1="0" y2="0"><stop offset="0.0000" stop-color="#c9f900"/><stop offset="0.0410" stop-color="#c9f900"/><stop offset="0.0627" stop-color="#c8f900"/><stop offset="0.1716" stop-color="#c8f900"/><stop offset="0.1933" stop-color="#c7f900"/><stop offset="0.2151" stop-color="#c6f900"/><stop offset="0.2369" stop-color="#c5fa00"/><stop offset="0.2586" stop-color="#c3fa00"/><stop offset="0.3457" stop-color="#c3fa00"/><stop offset="0.3675" stop-color="#c6f900"/><stop offset="0.3892" stop-color="#c8f900"/><stop offset="0.4110" stop-color="#caf800"/><stop offset="0.4328" stop-color="#cdf800"/><stop offset="0.4545" stop-color="#cff700"/><stop offset="0.4763" stop-color="#d1f600"/><stop offset="0.4981" stop-color="#d3f600"/><stop offset="0.5198" stop-color="#d5f500"/><stop offset="0.5416" stop-color="#d7f500"/><stop offset="0.5634" stop-color="#d8f400"/><stop offset="0.5851" stop-color="#daf400"/><stop offset="0.6069" stop-color="#dbf300"/><stop offset="0.6504" stop-color="#dbf300"/><stop offset="0.6722" stop-color="#dcf300"/><stop offset="0.7157" stop-color="#dcf300"/><stop offset="0.7375" stop-color="#dbf300"/><stop offset="0.7810" stop-color="#dbf300"/><stop offset="0.8028" stop-color="#daf400"/><stop offset="0.8246" stop-color="#daf400"/><stop offset="0.8463" stop-color="#d9f400"/><stop offset="0.8681" stop-color="#d9f400"/><stop offset="0.8899" stop-color="#d8f500"/><stop offset="0.9116" stop-color="#d8f500"/><stop offset="0.9334" stop-color="#d7f500"/><stop offset="0.9769" stop-color="#d7f500"/><stop offset="0.9987" stop-color="#d6f500"/><stop offset="1.0000" stop-color="#d6f500"/></linearGradient>
<linearGradient id="g27" x1="0" x2="1" y1="0" y2="0"><stop offset="0.0000" stop-color="#c4fa00"/><stop offset="0.1716" stop-color="#c4fa00"/><stop offset="0.1933" stop-color="#c1fa00"/><stop offset="0.2151" stop-color="#bdfa00"/><stop offset="0.2369" stop-color="#bafa00"/><stop offset="0.2586" stop-color="#b6fa00"/><stop offset="0.3457" stop-color="#b6fa00"/><stop offset="0.3675" stop-color="#bdfa00"/><stop offset="0.3892" stop-color="#c3fa00"/><stop offset="0.4110" stop-color="#c6f900"/><stop offset="0.4328" stop-color="#c8f900"/><stop offset="0.4545" stop-color="#caf800"/><stop offset="0.4763" stop-color="#ccf800"/><stop offset="0.4981" stop-color="#cef700"/><stop offset="0.5198" stop-color="#d0f700"/><stop offset="0.5416" stop-color="#d1f600"/><stop offset="0.5634" stop-color="#d2f600"/><stop offset="0.5851" stop-color="#d4f600"/><stop offset="0.6069" stop-color="#d5f600"/><stop offset="0.6722" stop-color="#d5f600"/><stop offset="0.6940" stop-color="#d5f500"/><stop offset="0.7157" stop-color="#d5f600"/><stop offset="0.7810" stop-color="#d5f600"/><stop offset="0.8028" stop-color="#d4f600"/><stop offset="0.8246" stop-color="#d4f600"/><stop offset="0.8463" stop-color="#d3f600"/><stop offset="0.8681" stop-color="#d3f600"/><stop offset="0.8899" stop-color="#d2f600"/><stop offset="0.9116" stop-color="#d2f600"/><stop offset="0.9334" stop-color="#d1f600"/><stop offset="0.9552" stop-color="#d1f600"/><stop offset="0.9769" stop-color="#d1f700"/><stop offset="0.9987" stop-color="#d0f700"/><stop offset="1.0000" stop-color="#d0f700"/></linearGradient>
<linearGradient id="g28" x1="0" x2="1" y1="0" y2="0"><stop offset="0.0000" stop-color="#b7fa00"/><stop offset="0.1280" stop-color="#b7fa00"/><stop offset="0.1498" stop-color="#b6fa00"/><stop offset="0.1716" stop-color="#b6fa00"/><stop offset="0.1933" stop-color="#b3fa00"/><stop offset="0.2151" stop-color="#affa00"/><stop offset="0.2369" stop-color="#abfa00"/><stop offset="0.2586" stop-color="#a7fa00"/><stop offset="0.3457" stop-color="#a7fa00"/><stop offset="0.3675" stop-color="#aefa00"/><stop offset="0.3892" stop-color="#b5fa00"/><stop offset="0.4110" stop-color="#bcfa00"/><stop offset="0.4328" stop-color="#c3fa00"/><stop offset="0.4545" stop-color="#c5fa00"/><stop offset="0.4763" stop-color="#c7f900"/><stop offset="0.4981" stop-color="#c9f900"/><stop offset="0.5198" stop-color="#caf800"/><stop offset="0.5416" stop-color="#cbf800"/><stop offset="0.5634" stop-color="#ccf800"/><stop offset="0.5851" stop-color="#cdf700"/><stop offset="0.6069" stop-color="#cef700"/><stop offset="0.8028" stop-color="#cef700"/><stop offset="0.8246" stop-color="#cdf700"/><stop offset="0.8463" stop-color="#cdf700"/><stop offset="0.8681" stop-color="#cdf800"/><stop offset="0.8899" stop-color="#ccf800"/><stop offset="0.9334" stop-color="#ccf800"/><stop offset="0.9552" stop-color="#cbf800"/><stop offset="1.0000" stop-color="#cbf800"/></linearGradient>
<linearGradient id="g29" x1="0" x2="1" y1="0" y2="0"><stop offset="0.0000" stop-color="#a7fa00"/><stop offset="0.1716" stop-color="#a7fa00"/><stop offset="0.1933" stop-color="#a4fa00"/><stop offset="0.2151" stop-color="#a0fa00"/><stop offset="0.2369" stop-color="#9cfa00"/><stop offset="0.2586" stop-color="#99fa00"/><stop offset="0.3457" stop-color="#99fa00"/><stop offset="0.3675" stop-color="#9ffa00"/><stop offset="0.3892" stop-color="#a6fa00"/><stop offset="0.4110" stop-color="#adfa00"/><stop offset="0.4328" stop-color="#b3fa00"/><stop offset="0.4545" stop-color="#b9fa00"/><stop offset="0.4763" stop-color="#befa00"/><stop offset="0.4981" stop-color="#c3fa00"/><stop offset="0.5198" stop-color="#c5fa00"/><stop offset="0.5416" stop-color="#c5f900"/><stop offset="0.5634" stop-color="#c6f900"/><stop offset="0.5851" stop-color="#c7f900"/><stop offset="0.6069" stop-color="#c8f900"/><stop offset="0.7810" stop-color="#c8f900"/><stop offset="0.8028" stop-color="#c7f900"/><stop offset="0.8681" stop-color="#c7f900"/><stop offset="0.8899" stop-color="#c6f900"/><stop offset="0.9334" stop-color="#c6f900"/><stop offset="0.9552" stop-color="#c5f900"/><stop offset="0.9769" stop-color="#c5f900"/><stop offset="0.9987" stop-color="#c5fa00"/><stop offset="1.0000" stop-color="#c5fa00"/></linearGradient>
<linearGradient id="g30" x1="0" x2="1" y1="0" y2="0"><stop offset="0.0000" stop-color="#9cfa00"/><stop offset="0.1716" stop-color="#9cfa00"/><stop offset="0.1933" stop-color="#98fa00"/><stop offset="0.2151" stop-color="#95fa00"/><stop offset="0.2369" stop-color="#92fa00"/><stop offset="0.2586" stop-color="#90fa00"/><stop offset="0.3457" stop-color="#90fa00"/><stop offset="0.3675" stop-color="#95fa00"/><stop offset="0.3892" stop-color="#9bfa00"/><stop offset="0.4110" stop-color="#a1fa00"/><stop offset="0.4328" stop-color="#a8fa00"/><stop offset="0.4545" stop-color="#adfa00"/><stop offset="0.4763" stop-color="#b2fa00"/><stop offset="0.4981" stop-color="#b7fa00"/><stop offset="0.5198" stop-color="#bdfa00"/><stop offset="0.5416" stop-color="#bffa00"/><stop offset="0.5634" stop-color="#c2fa00"/><stop offset="0.5851" stop-color="#c3fa00"/><stop offset="0.6069" stop-color="#c4fa00"/><stop offset="0.7157" stop-color="#c4fa00"/><stop offset="0.7375" stop-color="#c5fa00"/><stop offset="0.7593" stop-color="#c4fa00"/><stop offset="0.8681" stop-color="#c4fa00"/><stop offset="0.8899" stop-color="#c3fa00"/><stop offset="0.9116" stop-color="#c3fa00"/><stop offset="0.9334" stop-color="#c2fa00"/><stop offset="0.9552" stop-color="#c1fa00"/><stop offset="0.9769" stop-color="#c0fa00"/><stop offset="0.9987" stop-color="#bffa00"/><stop offset="1.0000" stop-color="#bffa00"/></linearGradient>
<linearGradient id="g31" x1="0" x2="1" y1="0" y2="0"><stop offset="0.0000" stop-color="#5dfa00"/><stop offset="0.1716" stop-color="#5dfa00"/><stop offset="0.1933" stop-color="#5cfa00"/><stop offset="0.2151" stop-color="#5afa00"/><stop offset="0.2369" stop-color="#59fa00"/><stop offset="0.2586" stop-color="#57fa00"/><stop offset="0.2804" stop-color="#58fa00"/><stop offset="0.3022" stop-color="#58fa00"/><stop offset="0.3239" stop-color="#59fa00"/><stop offset="0.3457" stop-color="#5afa00"/><stop offset="0.3675" stop-color="#60fa00"/><stop offset="0.3892" stop-color="#65fa00"/><stop offset="0.4110" stop-color="#6bfa00"/><stop offset="0.4328" stop-color="#70fa00"/><stop offset="0.4545" stop-color="#75fa00"/><stop offset="0.4763" stop-color="#7afa00"/><stop offset="0.4981" stop-color="#7ffa00"/><stop offset="0.5198" stop-color="#83fa00"/><stop offset="0.5416" stop-color="#87fa00"/><stop offset="0.5634" stop-color="#8bfa00"/><stop offset="0.5851" stop-color="#8efa00"/><stop offset="0.6069" stop-color="#90fa00"/><stop offset="0.6287" stop-color="#91fa00"/><stop offset="0.6504" stop-color="#92fa00"/><stop offset="0.6722" stop-color="#93fa00"/><stop offset="0.6940" stop-color="#94fa00"/><stop offset="0.7157" stop-color="#95fa00"/><stop offset="0.7375" stop-color="#96fa00"/><stop offset="0.7810" stop-color="#96fa00"/><stop offset="0.8028" stop-color="#94fa00"/><stop offset="0.8246" stop-color="#93fa00"/><stop offset="0.8463" stop-color="#92fa00"/><stop offset="0.8681" stop-color="#91fa00"/><stop offset="0.8899" stop-color="#90fa00"/><stop offset="0.9116" stop-color="#8ffa00"/><stop offset="0.9334" stop-color="#8efa00"/><stop offset="0.9552" stop-color="#8efa00"/><stop offset="0.9769" stop-color="#8dfa00"/><stop offset="0.9987" stop-color="#8cfa00"/><stop offset="1.0000" stop-color="#8cfa00"/></linearGradient>
<linearGradient id="g32" x1="0" x2="1" y1="0" y2="0"><stop offset="0.0000" stop-color="#4bfa00"/><stop offset="0.0627" stop-color="#4bfa00"/><stop offset="0.0845" stop-color="#4afa00"/><stop offset="0.1716" stop-color="#4afa00"/><stop offset="0.1933" stop-color="#49fa00"/><stop offset="0.2151" stop-color="#48fa00"/><stop offset="0.2369" stop-color="#47fa00"/><stop offset="0.2586" stop-color="#45fa00"/><stop offset="0.2804" stop-color="#46fa00"/><stop offset="0.3022" stop-color="#46fa00"/><stop offset="0.3239" stop-color="#47fa00"/><stop offset="0.3457" stop-color="#47fa00"/><stop offset="0.3675" stop-color="#4cfa00"/><stop offset="0.3892" stop-color="#51fa00"/><stop offset="0.4110" stop-color="#56fa00"/><stop offset="0.4328" stop-color="#5bfa00"/><stop offset="0.4545" stop-color="#60fa00"/><stop offset="0.4763" stop-color="#66fa00"/><stop offset="0.4981" stop-color="#6bfa00"/><stop offset="0.5198" stop-color="#6ffa00"/><stop offset="0.5416" stop-color="#73fa00"/><stop offset="0.5634" stop-color="#76fa00"/><stop offset="0.5851" stop-color="#79fa00"/><stop offset="0.6069" stop-color="#7cfa00"/><stop offset="0.6287" stop-color="#7cfa00"/><stop offset="0.6504" stop-color="#7dfa00"/><stop offset="0.6722" stop-color="#7efa00"/><stop offset="0.6940" stop-color="#7ffa00"/><stop offset="0.7157" stop-color="#80fa00"/><stop offset="0.7375" stop-color="#81fa00"/><stop offset="0.7810" stop-color="#81fa00"/><stop offset="0.8028" stop-color="#80fa00"/><stop offset="0.8246" stop-color="#7ffa00"/><stop offset="0.8463" stop-color="#7efa00"/><stop offset="0.8681" stop-color="#7dfa00"/><stop offset="0.8899" stop-color="#7cfa00"/><stop offset="0.9116" stop-color="#7bfa00"/><stop offset="0.9334" stop-color="#7bfa00"/><stop offset="0.9552" stop-color="#7afa00"/><stop offset="0.9769" stop-color="#79fa00"/><stop offset="1.0000" stop-color="#79fa00"/></linearGradient>
<linearGradient id="g33" x1="0" x2="1" y1="0" y2="0"><stop offset="0.0000" stop-color="#39fa00"/><stop offset="0.1063" stop-color="#39fa00"/><stop offset="0.1280" stop-color="#38fa00"/><stop offset="0.1716" stop-color="#38fa00"/><stop offset="0.1933" stop-color="#37fa00"/><stop offset="0.2151" stop-color="#36fa00"/><stop offset="0.2369" stop-color="#36fa00"/><stop offset="0.2586" stop-color="#35fa00"/><stop offset="0.3022" stop-color="#35fa00"/><stop offset="0.3239" stop-color="#36fa00"/><stop offset="0.3457" stop-color="#36fa00"/><stop offset="0.3675" stop-color="#3afa00"/><stop offset="0.3892" stop-color="#3ffa00"/><stop offset="0.4110" stop-color="#43fa00"/><stop offset="0.4328" stop-color="#47fa00"/><stop offset="0.4545" stop-color="#4bfa00"/><stop offset="0.4763" stop-color="#4ffa00"/><stop offset="0.4981" stop-color="#53fa00"/><stop offset="0.5198" stop-color="#57fa00"/><stop offset="0.5416" stop-color="#5bfa00"/><stop offset="0.5634" stop-color="#5ffa00"/><stop offset="0.5851" stop-color="#63fa00"/><stop offset="0.6069" stop-color="#66fa00"/><stop offset="0.6287" stop-color="#67fa00"/><stop offset="0.6504" stop-color="#69fa00"/><stop offset="0.6722" stop-color="#6afa00"/><stop offset="0.6940" stop-color="#6bfa00"/><stop offset="0.7157" stop-color="#6cfa00"/><stop offset="0.7375" stop-color="#6dfa00"/><stop offset="0.7593" stop-color="#6dfa00"/><stop offset="0.7810" stop-color="#6cfa00"/><stop offset="0.8028" stop-color="#6bfa00"/><stop offset="0.8246" stop-color="#6afa00"/><stop offset="0.8463" stop-color="#69fa00"/><stop offset="0.8681" stop-color="#69fa00"/><stop offset="0.8899" stop-color="#68fa00"/><stop offset="0.9116" stop-color="#67fa00"/><stop offset="0.9334" stop-color="#66fa00"/><stop offset="0.9552" stop-color="#66fa00"/><stop offset="0.9769" stop-color="#65fa00"/><stop offset="0.9987" stop-color="#64fa00"/><stop offset="1.0000" stop-color="#64fa00"/></linearGradient>
<linearGradient id="g34" x1="0" x2="1" y1="0" y2="0"><stop offset="0.0000" stop-color="#27fa00"/><stop offset="0.0627" stop-color="#27fa00"/><stop offset="0.0845" stop-color="#26fa00"/><stop offset="0.1498" stop-color="#26fa00"/><stop offset="0.1716" stop-color="#25fa00"/><stop offset="0.2151" stop-color="#25fa00"/><stop offset="0.2369" stop-color="#24fa00"/><stop offset="0.3457" stop-color="#24fa00"/><stop offset="0.3675" stop-color="#28fa00"/><stop offset="0.3892" stop-color="#2bfa00"/><stop offset="0.4110" stop-color="#2ffa00"/><stop offset="0.4328" stop-color="#33fa00"/><stop offset="0.4545" stop-color="#35fa00"/><stop offset="0.4763" stop-color="#38fa00"/><stop offset="0.4981" stop-color="#3bfa00"/><stop offset="0.5198" stop-color="#3efa00"/><stop offset="0.5416" stop-color="#42fa00"/><stop offset="0.5634" stop-color="#45fa00"/><stop offset="0.5851" stop-color="#49fa00"/><stop offset="0.6069" stop-color="#4cfa00"/><stop offset="0.6287" stop-color="#4dfa00"/><stop offset="0.6504" stop-color="#4efa00"/><stop offset="0.6722" stop-color="#50fa00"/><stop offset="0.6940" stop-color="#51fa00"/><stop offset="0.7157" stop-color="#52fa00"/><stop offset="0.7375" stop-color="#53fa00"/><stop offset="0.7593" stop-color="#53fa00"/><stop offset="0.7810" stop-color="#52fa00"/><stop offset="0.8028" stop-color="#51fa00"/><stop offset="0.8246" stop-color="#51fa00"/><stop offset="0.8463" stop-color="#50fa00"/><stop offset="0.8681" stop-color="#4ffa00"/><stop offset="0.8899" stop-color="#4ffa00"/><stop offset="0.9116" stop-color="#4efa00"/><stop offset="0.9334" stop-color="#4efa00"/><stop offset="0.9552" stop-color="#4dfa00"/><stop offset="0.9769" stop-color="#4cfa00"/><stop offset="1.0000" stop-color="#4cfa00"/></linearGradient>
<linearGradient id="g35" x1="0" x2="1" y1="0" y2="0"><stop offset="0.0000" stop-color="#18fa00"/><stop offset="0.0410" stop-color="#18fa00"/><stop offset="0.0627" stop-color="#17fa00"/><stop offset="0.1063" stop-color="#17fa00"/><stop offset="0.1280" stop-color="#16fa00"/><stop offset="0.1933" stop-color="#16fa00"/><stop offset="0.2151" stop-color="#15fa00"/><stop offset="0.3457" stop-color="#15fa00"/><stop offset="0.3675" stop-color="#18fa00"/><stop offset="0.3892" stop-color="#1bfa00"/><stop offset="0.4110" stop-color="#1efa00"/><stop offset="0.4328" stop-color="#21fa00"/><stop offset="0.4545" stop-color="#24fa00"/><stop offset="0.4763" stop-color="#26fa00"/><stop offset="0.4981" stop-color="#29fa00"/><stop offset="0.5198" stop-color="#2bfa00"/><stop offset="0.5416" stop-color="#2ffa00"/><stop offset="0.5634" stop-color="#32fa00"/><stop offset="0.5851" stop-color="#35fa00"/><stop offset="0.6069" stop-color="#38fa00"/><stop offset="0.6287" stop-color="#3afa00"/><stop offset="0.6504" stop-color="#3bfa00"/><stop offset="0.6722" stop-color="#3dfa00"/><stop offset="0.6940" stop-color="#3efa00"/><stop offset="0.7157" stop-color="#40fa00"/><stop offset="0.7375" stop-color="#41fa00"/><stop offset="0.7593" stop-color="#41fa00"/><stop offset="0.7810" stop-color="#40fa00"/><stop offset="0.8028" stop-color="#40fa00"/><stop offset="0.8246" stop-color="#3ffa00"/><stop offset="0.8463" stop-color="#3efa00"/><stop offset="0.8681" stop-color="#3efa00"/><stop offset="0.8899" stop-color="#3dfa00"/><stop offset="0.9116" stop-color="#3dfa00"/><stop offset="0.9334" stop-color="#3cfa00"/><stop offset="0.9552" stop-color="#3cfa00"/><stop offset="0.9769" stop-color="#3bfa00"/><stop offset="1.0000" stop-color="#3bfa00"/></linearGradient>
<linearGradient id="g36" x1="0" x2="1" y1="0" y2="0"><stop offset="0.0000" stop-color="#09fa00"/><stop offset="0.0192" stop-color="#08fa00"/><stop offset="0.0845" stop-color="#08fa00"/><stop offset="0.1063" stop-color="#07fa00"/><stop offset="0.1716" stop-color="#07fa00"/><stop offset="0.1933" stop-color="#06fa00"/><stop offset="0.2586" stop-color="#06fa00"/><stop offset="0.2804" stop-color="#05fa00"/><stop offset="0.3457" stop-color="#05fa00"/><stop offset="0.3675" stop-color="#08fa00"/><stop offset="0.3892" stop-color="#0bfa00"/><stop offset="0.4110" stop-color="#0efa00"/><stop offset="0.4328" stop-color="#10fa00"/><stop offset="0.4545" stop-color="#13fa00"/><stop offset="0.4763" stop-color="#15fa00"/><stop offset="0.4981" stop-color="#17fa00"/><stop offset="0.5198" stop-color="#1afa00"/><stop offset="0.5416" stop-color="#1dfa00"/><stop offset="0.5634" stop-color="#20fa00"/><stop offset="0.5851" stop-color="#23fa00"/><stop offset="0.6069" stop-color="#26fa00"/><stop offset="0.6287" stop-color="#28fa00"/><stop offset="0.6504" stop-color="#2afa00"/><stop offset="0.6722" stop-color="#2cfa00"/><stop offset="0.6940" stop-color="#2efa00"/><stop offset="0.7157" stop-color="#30fa00"/><stop offset="0.7375" stop-color="#32fa00"/><stop offset="0.7593" stop-color="#31fa00"/><stop offset="0.7810" stop-color="#31fa00"/><stop offset="0.8028" stop-color="#30fa00"/><stop offset="0.8246" stop-color="#30fa00"/><stop offset="0.8463" stop-color="#2ffa00"/><stop offset="0.8681" stop-color="#2efa00"/><stop offset="0.8899" stop-color="#2efa00"/><stop offset="0.9116" stop-color="#2dfa00"/><stop offset="0.9334" stop-color="#2dfa00"/><stop offset="0.9552" stop-color="#2cfa00"/><stop offset="0.9769" stop-color="#2cfa00"/><stop offset="0.9987" stop-color="#2bfa00"/><stop offset="1.0000" stop-color="#2bfa00"/></linearGradient>
<linearGradient id="g37" x1="0" x2="1" y1="0" y2="0"><stop offset="0.0000" stop-color="#00f900"/><stop offset="0.4110" stop-color="#00f900"/><stop offset="0.4328" stop-color="#00fa00"/><stop offset="0.4545" stop-color="#00fa00"/><stop offset="0.4763" stop-color="#02fa00"/><stop offset="0.4981" stop-color="#04fa00"/><stop offset="0.5198" stop-color="#06fa00"/><stop offset="0.5416" stop-color="#09fa00"/><stop offset="0.5634" stop-color="#0cfa00"/><stop offset="0.5851" stop-color="#0efa00"/><stop offset="0.6069" stop-color="#11fa00"/><stop offset="0.6287" stop-color="#14fa00"/><stop offset="0.6504" stop-color="#16fa00"/><stop offset="0.6722" stop-color="#19fa00"/><stop offset="0.6940" stop-color="#1bfa00"/><stop offset="0.7157" stop-color="#1efa00"/><stop offset="0.7375" stop-color="#21fa00"/><stop offset="0.7593" stop-color="#20fa00"/><stop offset="0.7810" stop-color="#20fa00"/><stop offset="0.8028" stop-color="#1ffa00"/><stop offset="0.8246" stop-color="#1efa00"/><stop offset="0.8463" stop-color="#1efa00"/><stop offset="0.8681" stop-color="#1dfa00"/><stop offset="0.8899" stop-color="#1dfa00"/><stop offset="0.9116" stop-color="#1cfa00"/><stop offset="0.9334" stop-color="#1cfa00"/><stop offset="0.9552" stop-color="#1bfa00"/><stop offset="0.9769" stop-color="#1afa00"/><stop offset="1.0000" stop-color="#1afa00"/></linearGradient>
<linearGradient id="g38" x1="0" x2="1" y1="0" y2="0"><stop offset="0.0000" stop-color="#00f700"/><stop offset="0.3022" stop-color="#00f700"/><stop offset="0.3239" stop-color="#00f600"/><stop offset="0.3457" stop-color="#00f600"/><stop offset="0.3675" stop-color="#00f700"/><stop offset="0.4328" stop-color="#00f700"/><stop offset="0.4545" stop-color="#00f800"/><stop offset="0.5198" stop-color="#00f800"/><stop offset="0.5416" stop-color="#00f900"/><stop offset="0.6069" stop-color="#00f900"/><stop offset="0.6287" stop-color="#00fa00"/><stop offset="0.6504" stop-color="#00fa00"/><stop offset="0.6722" stop-color="#03fa00"/><stop offset="0.6940" stop-color="#06fa00"/><stop offset="0.7157" stop-color="#08fa00"/><stop offset="0.7375" stop-color="#0bfa00"/><stop offset="0.7593" stop-color="#0bfa00"/><stop offset="0.7810" stop-color="#0afa00"/><stop offset="0.8028" stop-color="#09fa00"/><stop offset="0.8246" stop-color="#09fa00"/><stop offset="0.8463" stop-color="#08fa00"/><stop offset="0.8681" stop-color="#08fa00"/><stop offset="0.8899" stop-color="#07fa00"/><stop offset="0.9116" stop-color="#07fa00"/><stop offset="0.9334" stop-color="#06fa00"/><stop offset="0.9552" stop-color="#06fa00"/><stop offset="0.9769" stop-color="#05fa00"/><stop offset="0.9987" stop-color="#04fa00"/><stop offset="1.0000" stop-color="#04fa00"/></linearGradient>
<linearGradient id="g39" x1="0" x2="1" y1="0" y2="0"><stop offset="0.0000" stop-color="#00f400"/><stop offset="0.4110" stop-color="#00f400"/><stop offset="0.4328" stop-color="#00f500"/><stop offset="0.5198" stop-color="#00f500"/><stop offset="0.5416" stop-color="#00f600"/><stop offset="0.5634" stop-color="#00f600"/><stop offset="0.5851" stop-color="#00f700"/><stop offset="0.6504" stop-color="#00f700"/><stop offset="0.6722" stop-color="#00f800"/><stop offset="1.0000" stop-color="#00f800"/></linearGradient>
<linearGradient id="g40" x1="0" x2="1" y1="0" y2="0"><stop offset="0.0000" stop-color="#00f100"/><stop offset="0.3457" stop-color="#00f100"/><stop offset="0.3675" stop-color="#00f200"/><stop offset="0.4981" stop-color="#00f200"/><stop offset="0.5198" stop-color="#00f300"/><stop offset="0.5634" stop-color="#00f300"/><stop offset="0.5851" stop-color="#00f400"/><stop offset="0.6287" stop-color="#00f400"/><stop offset="0.6504" stop-color="#00f500"/><stop offset="1.0000" stop-color="#00f500"/></linearGradient>
<linearGradient id="g41" x1="0" x2="1" y1="0" y2="0"><stop offset="0.0000" stop-color="#00ee00"/><stop offset="0.3892" stop-color="#00ee00"/><stop offset="0.4110" stop-color="#00ef00"/><stop offset="0.4763" stop-color="#00ef00"/><stop offset="0.4981" stop-color="#00f000"/><stop offset="0.5416" stop-color="#00f000"/><stop offset="0.5634" stop-color="#00f100"/><stop offset="0.6069" stop-color="#00f100"/><stop offset="0.6287" stop-color="#00f200"/><stop offset="1.0000" stop-color="#00f200"/></linearGradient>
<linearGradient id="g42" x1="0" x2="1" y1="0" y2="0"><stop offset="0.0000" stop-color="#00ea00"/><stop offset="0.4110" stop-color="#00ea00"/><stop offset="0.4328" stop-color="#00eb00"/><stop offset="0.5198" stop-color="#00eb00"/><stop offset="0.5416" stop-color="#00ec00"/><stop offset="0.5634" stop-color="#00ec00"/><stop offset="0.5851" stop-color="#00ed00"/><stop offset="0.6069" stop-color="#00ee00"/><stop offset="0.6940" stop-color="#00ee00"/><stop offset="0.7157" stop-color="#00ef00"/><stop offset="0.8463" stop-color="#00ef00"/><stop offset="0.8681" stop-color="#00ee00"/><stop offset="1.0000" stop-color="#00ee00"/></linearGradient>
<linearGradient id="g43" x1="0" x2="1" y1="0" y2="0"><stop offset="0.0000" stop-color="#00e600"/><stop offset="0.4981" stop-color="#00e600"/><stop offset="0.5198" stop-color="#00e700"/><stop offset="0.5416" stop-color="#00e700"/><stop offset="0.5634" stop-color="#00e800"/><stop offset="0.5851" stop-color="#00e800"/><stop offset="0.6069" stop-color="#00e900"/><stop offset="0.6940" stop-color="#00e900"/><stop offset="0.7157" stop-color="#00ea00"/><stop offset="0.8681" stop-color="#00ea00"/><stop offset="0.8899" stop-color="#00e900"/><stop offset="1.0000" stop-color="#00e900"/></linearGradient>
<linearGradient id="g44" x1="0" x2="1" y1="0" y2="0"><stop offset="0.0000" stop-color="#00e200"/><stop offset="0.5198" stop-color="#00e200"/><stop offset="0.5416" stop-color="#00e300"/><stop offset="0.5634" stop-color="#00e300"/><stop offset="0.5851" stop-color="#00e400"/><stop offset="0.6722" stop-color="#00e400"/><stop offset="0.6940" stop-color="#00e500"/><stop offset="0.9552" stop-color="#00e500"/><stop offset="0.9769" stop-color="#00e400"/><stop offset="1.0000" stop-color="#00e400"/></linearGradient>
<linearGradient id="g45" x1="0" x2="1" y1="0" y2="0"><stop offset="0.0000" stop-color="#00dd00"/><stop offset="0.5198" stop-color="#00dd00"/><stop offset="0.5416" stop-color="#00de00"/><stop offset="0.5634" stop-color="#00df00"/><stop offset="0.5851" stop-color="#00df00"/><stop offset="0.6069" stop-color="#00e000"/><stop offset="1.0000" stop-color="#00e000"/></linearGradient>
<linearGradient id="g46" x1="0" x2="1" y1="0" y2="0"><stop offset="0.0000" stop-color="#00da00"/><stop offset="0.5634" stop-color="#00da00"/><stop offset="0.5851" stop-color="#00db00"/><stop offset="1.0000" stop-color="#00db00"/></linearGradient>
<linearGradient id="g47" x1="0" x2="1" y1="0" y2="0"><stop offset="0.0000" stop-color="#00d600"/><stop offset="0.5198" stop-color="#00d600"/><stop offset="0.5416" stop-color="#00d700"/><stop offset="1.0000" stop-color="#00d700"/></linearGradient>
<linearGradient id="g48" x1="0" x2="1" y1="0" y2="0"><stop offset="0.0000" stop-color="#00d300"/><stop offset="0.5634" stop-color="#00d300"/><stop offset="0.5851" stop-color="#00d400"/><stop offset="1.0000" stop-color="#00d400"/></linearGradient>
<linearGradient id="g50" x1="0" x2="1" y1="0" y2="0"><stop offset="0.0000" stop-color="#00c800"/><stop offset="0.3457" stop-color="#00c800"/><stop offset="0.3675" stop-color="#00c700"/><stop offset="0.7157" stop-color="#00c700"/><stop offset="0.7375" stop-color="#00c800"/><stop offset="1.0000" stop-color="#00c800"/></linearGradient>
<linearGradient id="g51" x1="0" x2="1" y1="0" y2="0"><stop offset="0.0000" stop-color="#00be00"/><stop offset="0.2369" stop-color="#00be00"/><stop offset="0.2586" stop-color="#00bd00"/><stop offset="0.3239" stop-color="#00bd00"/><stop offset="0.3457" stop-color="#00bc00"/><stop offset="0.4110" stop-color="#00bc00"/><stop offset="0.4328" stop-color="#00bb00"/><stop offset="0.6504" stop-color="#00bb00"/><stop offset="0.6722" stop-color="#00bc00"/><stop offset="0.7593" stop-color="#00bc00"/><stop offset="0.7810" stop-color="#00bd00"/><stop offset="0.9552" stop-color="#00bd00"/><stop offset="0.9769" stop-color="#00be00"/><stop offset="1.0000" stop-color="#00be00"/></linearGradient>
<linearGradient id="g52" x1="0" x2="1" y1="0" y2="0"><stop offset="0.0000" stop-color="#00b200"/><stop offset="0.2151" stop-color="#00b200"/><stop offset="0.2369" stop-color="#00b100"/><stop offset="0.2586" stop-color="#00b100"/><stop offset="0.2804" stop-color="#00b000"/><stop offset="0.3239" stop-color="#00b000"/><stop offset="0.3457" stop-color="#00af00"/><stop offset="0.3675" stop-color="#00af00"/><stop offset="0.3892" stop-color="#00ae00"/><stop offset="0.4545" stop-color="#00ae00"/><stop offset="0.4763" stop-color="#00ad00"/><stop offset="0.6069" stop-color="#00ad00"/><stop offset="0.6287" stop-color="#00ae00"/><stop offset="0.6940" stop-color="#00ae00"/><stop offset="0.7157" stop-color="#00af00"/><stop offset="0.7593" stop-color="#00af00"/><stop offset="0.7810" stop-color="#00b000"/><stop offset="0.8463" stop-color="#00b000"/><stop offset="0.8681" stop-color="#00b100"/><stop offset="1.0000" stop-color="#00b100"/></linearGradient>
<linearGradient id="g53" x1="0" x2="1" y1="0" y2="0"><stop offset="0.0000" stop-color="#00a500"/><stop offset="0.1933" stop-color="#00a500"/><stop offset="0.2151" stop-color="#00a400"/><stop offset="0.2369" stop-color="#00a400"/><stop offset="0.2586" stop-color="#00a300"/><stop offset="0.2804" stop-color="#00a300"/><stop offset="0.3022" stop-color="#00a200"/><stop offset="0.3239" stop-color="#00a200"/><stop offset="0.3457" stop-color="#00a100"/><stop offset="0.3675" stop-color="#00a100"/><stop offset="0.3892" stop-color="#00a000"/><stop offset="0.4110" stop-color="#00a000"/><stop offset="0.4328" stop-color="#009f00"/><stop offset="0.4545" stop-color="#009f00"/><stop offset="0.4763" stop-color="#009e00"/><stop offset="0.6069" stop-color="#009e00"/><stop offset="0.6287" stop-color="#009f00"/><stop offset="0.6504" stop-color="#009f00"/><stop offset="0.6722" stop-color="#00a000"/><stop offset="0.7157" stop-color="#00a000"/><stop offset="0.7375" stop-color="#00a100"/><stop offset="0.7593" stop-color="#00a100"/><stop offset="0.7810" stop-color="#00a200"/><stop offset="0.8246" stop-color="#00a200"/><stop offset="0.8463" stop-color="#00a300"/><stop offset="1.0000" stop-color="#00a300"/></linearGradient>
<linearGradient id="g54" x1="0" x2="1" y1="0" y2="0"><stop offset="0.0000" stop-color="#009b00"/><stop offset="0.1716" stop-color="#009b00"/><stop offset="0.1933" stop-color="#009a00"/><stop offset="0.2151" stop-color="#009a00"/><stop offset="0.2369" stop-color="#009900"/><stop offset="0.2586" stop-color="#009800"/><stop offset="0.2804" stop-color="#009800"/><stop offset="0.3022" stop-color="#009700"/><stop offset="0.3239" stop-color="#009700"/><stop offset="0.3457" stop-color="#009600"/><stop offset="0.3675" stop-color="#009602"/><stop offset="0.3892" stop-color="#009603"/><stop offset="0.4110" stop-color="#009604"/><stop offset="0.4328" stop-color="#009706"/><stop offset="0.4545" stop-color="#009707"/><stop offset="0.4763" stop-color="#009708"/><stop offset="0.6069" stop-color="#009708"/><stop offset="0.6287" stop-color="#009707"/><stop offset="0.6504" stop-color="#009706"/><stop offset="0.6722" stop-color="#009604"/><stop offset="0.6940" stop-color="#009603"/><stop offset="0.7157" stop-color="#009602"/><stop offset="0.7375" stop-color="#009601"/><stop offset="0.7593" stop-color="#009600"/><stop offset="0.7810" stop-color="#009700"/><stop offset="0.8246" stop-color="#009700"/><stop offset="0.8463" stop-color="#009800"/><stop offset="0.9769" stop-color="#009800"/><stop offset="0.9987" stop-color="#009900"/><stop offset="1.0000" stop-color="#009900"/></linearGradient>
<linearGradient id="g55" x1="0" x2="1" y1="0" y2="0"><stop offset="0.0000" stop-color="#009700"/><stop offset="0.1716" stop-color="#009700"/><stop offset="0.1933" stop-color="#009600"/><stop offset="0.2151" stop-color="#009601"/><stop offset="0.2369" stop-color="#009602"/><stop offset="0.2586" stop-color="#009604"/><stop offset="0.2804" stop-color="#009705"/><stop offset="0.3022" stop-color="#009707"/><stop offset="0.3239" stop-color="#009709"/><stop offset="0.3457" stop-color="#00970a"/><stop offset="0.3675" stop-color="#00970c"/><stop offset="0.3892" stop-color="#00970e"/><stop offset="0.4110" stop-color="#00980f"/><stop offset="0.4328" stop-color="#009810"/><stop offset="0.4545" stop-color="#009812"/><stop offset="0.4763" stop-color="#009813"/><stop offset="0.6069" stop-color="#009813"/><stop offset="0.6287" stop-color="#009812"/><stop offset="0.6504" stop-color="#009810"/><stop offset="0.6722" stop-color="#00980f"/><stop offset="0.6940" stop-color="#00970e"/><stop offset="0.7157" stop-color="#00970c"/><stop offset="0.7375" stop-color="#00970b"/><stop offset="0.7593" stop-color="#00970a"/><stop offset="0.7810" stop-color="#009709"/><stop offset="0.8028" stop-color="#009708"/><stop offset="0.8246" stop-color="#009707"/><stop offset="0.8463" stop-color="#009706"/><stop offset="0.8681" stop-color="#009705"/><stop offset="0.8899" stop-color="#009605"/><stop offset="0.9116" stop-color="#009604"/><stop offset="0.9769" stop-color="#009604"/><stop offset="0.9987" stop-color="#009603"/><stop offset="1.0000" stop-color="#009603"/></linearGradient>
<linearGradient id="g56" x1="0" x2="1" y1="0" y2="0"><stop offset="0.0000" stop-color="#009816"/><stop offset="0.1716" stop-color="#009816"/><stop offset="0.1933" stop-color="#009818"/><stop offset="0.2151" stop-color="#009919"/><stop offset="0.2369" stop-color="#00991b"/><stop offset="0.2586" stop-color="#00991c"/><stop offset="0.2804" stop-color="#00991e"/><stop offset="0.3022" stop-color="#009920"/><stop offset="0.3239" stop-color="#009922"/><stop offset="0.3457" stop-color="#009a24"/><stop offset="0.3675" stop-color="#009a25"/><stop offset="0.3892" stop-color="#009a27"/><stop offset="0.4110" stop-color="#009a29"/><stop offset="0.4328" stop-color="#009a2a"/><stop offset="0.4545" stop-color="#009a2c"/><stop offset="0.4763" stop-color="#009b2d"/><stop offset="0.6069" stop-color="#009b2d"/><stop offset="0.6287" stop-color="#009a2c"/><stop offset="0.6504" stop-color="#009a2a"/><stop offset="0.6722" stop-color="#009a29"/><stop offset="0.6940" stop-color="#009a27"/><stop offset="0.7157" stop-color="#009a26"/><stop offset="0.7375" stop-color="#009a25"/><stop offset="0.7593" stop-color="#009a23"/><stop offset="0.7810" stop-color="#009922"/><stop offset="0.8028" stop-color="#009921"/><stop offset="0.8246" stop-color="#009920"/><stop offset="0.8463" stop-color="#00991f"/><stop offset="0.8681" stop-color="#00991e"/><stop offset="0.8899" stop-color="#00991d"/><stop offset="0.9334" stop-color="#00991d"/><stop offset="0.9552" stop-color="#00991c"/><stop offset="1.0000" stop-color="#00991c"/></linearGradient>
<linearGradient id="g57" x1="0" x2="1" y1="0" y2="0"><stop offset="0.0000" stop-color="#009d46"/><stop offset="0.1716" stop-color="#009d46"/><stop offset="0.1933" stop-color="#009d48"/><stop offset="0.2151" stop-color="#009d49"/><stop offset="0.2369" stop-color="#009e4b"/><stop offset="0.2586" stop-color="#009e4d"/><stop offset="0.2804" stop-color="#009e4e"/><stop offset="0.3022" stop-color="#009e50"/><stop offset="0.3239" stop-color="#009e52"/><stop offset="0.3457" stop-color="#009e54"/><stop offset="0.3675" stop-color="#009f56"/><stop offset="0.3892" stop-color="#009f58"/><stop offset="0.4110" stop-color="#009f5a"/><stop offset="0.4328" stop-color="#009f5b"/><stop offset="0.4545" stop-color="#009f5c"/><stop offset="0.4763" stop-color="#009f5e"/><stop offset="0.6069" stop-color="#009f5e"/><stop offset="0.6287" stop-color="#009f5c"/><stop offset="0.6504" stop-color="#009f5b"/><stop offset="0.6722" stop-color="#009f5a"/><stop offset="0.6940" stop-color="#009f58"/><stop offset="0.7157" stop-color="#009f56"/><stop offset="0.7375" stop-color="#009e55"/><stop offset="0.7593" stop-color="#009e54"/><stop offset="0.7810" stop-color="#009e52"/><stop offset="0.8028" stop-color="#009e51"/><stop offset="0.8246" stop-color="#009e50"/><stop offset="0.8463" stop-color="#009e4f"/><stop offset="0.8681" stop-color="#009e4e"/><stop offset="0.8899" stop-color="#009e4e"/><stop offset="0.9116" stop-color="#009e4d"/><stop offset="0.9552" stop-color="#009e4d"/><stop offset="0.9769" stop-color="#009e4c"/><stop offset="1.0000" stop-color="#009e4c"/></linearGradient>
<linearGradient id="g58" x1="0" x2="1" y1="0" y2="0"><stop offset="0.0000" stop-color="#00a274"/><stop offset="0.1716" stop-color="#00a274"/><stop offset="0.1933" stop-color="#00a275"/><stop offset="0.2151" stop-color="#00a276"/><stop offset="0.2369" stop-color="#00a277"/><stop offset="0.2586" stop-color="#00a278"/><stop offset="0.2804" stop-color="#00a279"/><stop offset="0.3022" stop-color="#00a27a"/><stop offset="0.3239" stop-color="#00a27b"/><stop offset="0.3457" stop-color="#00a37c"/><stop offset="0.3675" stop-color="#00a37e"/><stop offset="0.3892" stop-color="#00a37f"/><stop offset="0.4110" stop-color="#00a380"/><stop offset="0.4328" stop-color="#00a381"/><stop offset="0.4545" stop-color="#00a382"/><stop offset="0.4763" stop-color="#00a383"/><stop offset="0.6069" stop-color="#00a383"/><stop offset="0.6287" stop-color="#00a382"/><stop offset="0.6504" stop-color="#00a381"/><stop offset="0.6722" stop-color="#00a380"/><stop offset="0.6940" stop-color="#00a37f"/><stop offset="0.7157" stop-color="#00a37e"/><stop offset="0.7375" stop-color="#00a37d"/><stop offset="0.7593" stop-color="#00a37c"/><stop offset="0.7810" stop-color="#00a27b"/><stop offset="0.8028" stop-color="#00a27b"/><stop offset="0.8246" stop-color="#00a27a"/><stop offset="0.8463" stop-color="#00a279"/><stop offset="0.8681" stop-color="#00a279"/><stop offset="0.8899" stop-color="#00a278"/><stop offset="0.9769" stop-color="#00a278"/><stop offset="0.9987" stop-color="#00a277"/><stop offset="1.0000" stop-color="#00a277"/></linearGradient>
<linearGradient id="g59" x1="0" x2="1" y1="0" y2="0"><stop offset="0.0000" stop-color="#00a58f"/><stop offset="0.1716" stop-color="#00a58f"/><stop offset="0.1933" stop-color="#00a590"/><stop offset="0.2151" stop-color="#00a591"/><stop offset="0.2369" stop-color="#00a592"/><stop offset="0.2586" stop-color="#00a593"/><stop offset="0.2804" stop-color="#00a594"/><stop offset="0.3022" stop-color="#00a595"/><stop offset="0.3239" stop-color="#00a596"/><stop offset="0.3457" stop-color="#00a597"/><stop offset="0.3675" stop-color="#00a698"/><stop offset="0.3892" stop-color="#00a699"/><stop offset="0.4110" stop-color="#00a69a"/><stop offset="0.4328" stop-color="#00a69b"/><stop offset="0.4545" stop-color="#00a69c"/><stop offset="0.4763" stop-color="#00a69d"/><stop offset="0.6069" stop-color="#00a69d"/><stop offset="0.6287" stop-color="#00a69c"/><stop offset="0.6504" stop-color="#00a69b"/><stop offset="0.6722" stop-color="#00a69a"/><stop offset="0.6940" stop-color="#00a699"/><stop offset="0.7157" stop-color="#00a698"/><stop offset="0.7375" stop-color="#00a697"/><stop offset="0.7593" stop-color="#00a597"/><stop offset="0.7810" stop-color="#00a596"/><stop offset="0.8028" stop-color="#00a595"/><stop offset="0.8246" stop-color="#00a595"/><stop offset="0.8463" stop-color="#00a594"/><stop offset="0.8681" stop-color="#00a593"/><stop offset="0.9769" stop-color="#00a593"/><stop offset="0.9987" stop-color="#00a592"/><stop offset="1.0000" stop-color="#00a592"/></linearGradient>
<linearGradient id="g60" x1="0" x2="1" y1="0" y2="0"><stop offset="0.0000" stop-color="#00a595"/><stop offset="0.1716" stop-color="#00a595"/><stop offset="0.1933" stop-color="#00a596"/><stop offset="0.2151" stop-color="#00a597"/><stop offset="0.2369" stop-color="#00a698"/><stop offset="0.2586" stop-color="#00a698"/><stop offset="0.2804" stop-color="#00a699"/><stop offset="0.3022" stop-color="#00a69a"/><stop offset="0.3239" stop-color="#00a69b"/><stop offset="0.3457" stop-color="#00a69c"/><stop offset="0.3675" stop-color="#00a69d"/><stop offset="0.3892" stop-color="#00a69e"/><stop offset="0.4110" stop-color="#00a69e"/><stop offset="0.4328" stop-color="#00a69f"/><stop offset="0.4545" stop-color="#00a6a0"/><stop offset="0.4763" stop-color="#00a7a0"/><stop offset="0.6069" stop-color="#00a7a0"/><stop offset="0.6287" stop-color="#00a6a0"/><stop offset="0.6504" stop-color="#00a69f"/><stop offset="0.6722" stop-color="#00a69e"/><stop offset="0.6940" stop-color="#00a69e"/><stop offset="0.7157" stop-color="#00a69d"/><stop offset="0.7375" stop-color="#00a69c"/><stop offset="0.7593" stop-color="#00a69c"/><stop offset="0.7810" stop-color="#00a69b"/><stop offset="0.8028" stop-color="#00a69a"/><stop offset="0.8463" stop-color="#00a69a"/><stop offset="0.8681" stop-color="#00a699"/><stop offset="0.9334" stop-color="#00a699"/><stop offset="0.9552" stop-color="#00a698"/><stop offset="1.0000" stop-color="#00a698"/></linearGradient>
<linearGradient id="g61" x1="0" x2="1" y1="0" y2="0"><stop offset="0.0000" stop-color="#00a7a6"/><stop offset="0.2369" stop-color="#00a7a6"/><stop offset="0.2586" stop-color="#00a7a7"/><stop offset="0.2804" stop-color="#00a6a7"/><stop offset="0.3239" stop-color="#00a6a7"/><stop offset="0.3457" stop-color="#00a6a8"/><stop offset="0.3892" stop-color="#00a6a8"/><stop offset="0.4110" stop-color="#00a6a9"/><stop offset="0.6722" stop-color="#00a6a9"/><stop offset="0.6940" stop-color="#00a6a8"/><stop offset="0.7593" stop-color="#00a6a8"/><stop offset="0.7810" stop-color="#00a6a7"/><stop offset="0.8681" stop-color="#00a6a7"/><stop offset="0.8899" stop-color="#00a7a7"/><stop offset="1.0000" stop-color="#00a7a7"/></linearGradient>
<linearGradient id="g62" x1="0" x2="1" y1="0" y2="0"><stop offset="0.0000" stop-color="#00a3b3"/><stop offset="0.1716" stop-color="#00a3b3"/><stop offset="0.1933" stop-color="#00a3b4"/><stop offset="0.3239" stop-color="#00a3b4"/><stop offset="0.3457" stop-color="#00a3b5"/><stop offset="0.4110" stop-color="#00a3b5"/><stop offset="0.4328" stop-color="#00a2b5"/><stop offset="0.6504" stop-color="#00a2b5"/><stop offset="0.6722" stop-color="#00a3b5"/><stop offset="0.7593" stop-color="#00a3b5"/><stop offset="0.7810" stop-color="#00a3b4"/><stop offset="1.0000" stop-color="#00a3b4"/></linearGradient>
<linearGradient id="g63" x1="0" x2="1" y1="0" y2="0"><stop offset="0.0000" stop-color="#009fc2"/><stop offset="0.2151" stop-color="#009fc2"/><stop offset="0.2369" stop-color="#009ec3"/><stop offset="0.4110" stop-color="#009ec3"/><stop offset="0.4328" stop-color="#009ec4"/><stop offset="0.6504" stop-color="#009ec4"/><stop offset="0.6722" stop-color="#009ec3"/><stop offset="1.0000" stop-color="#009ec3"/></linearGradient>
<linearGradient id="g67" x1="0" x2="1" y1="0" y2="0"><stop offset="0.0000" stop-color="#0053de"/><stop offset="0.1716" stop-color="#0053de"/><stop offset="0.1933" stop-color="#0052de"/><stop offset="1.0000" stop-color="#0052de"/></linearGradient>
<linearGradient id="g69" x1="0" x2="1" y1="0" y2="0"><stop offset="0.0000" stop-color="#0000d5"/><stop offset="0.0627" stop-color="#0000d5"/><stop offset="0.0845" stop-color="#0000d4"/><stop offset="0.3022" stop-color="#0000d4"/><stop offset="0.3239" stop-color="#0000d5"/><stop offset="0.3675" stop-color="#0000d5"/><stop offset="0.3892" stop-color="#0000d6"/><stop offset="0.4110" stop-color="#0000d6"/><stop offset="0.4328" stop-color="#0000d7"/><stop offset="0.7593" stop-color="#0000d7"/><stop offset="0.7810" stop-color="#0000d6"/><stop offset="0.9116" stop-color="#0000d6"/><stop offset="0.9334" stop-color="#0000d5"/><stop offset="1.0000" stop-color="#0000d5"/></linearGradient>
<linearGradient id="g70" x1="0" x2="1" y1="0" y2="0"><stop offset="0.0000" stop-color="#0000c2"/><stop offset="0.0192" stop-color="#0000c1"/><stop offset="0.0410" stop-color="#0000c1"/><stop offset="0.0627" stop-color="#0000c0"/><stop offset="0.0845" stop-color="#0000bf"/><stop offset="0.1280" stop-color="#0000bf"/><stop offset="0.1498" stop-color="#0000be"/><stop offset="0.2804" stop-color="#0000be"/><stop offset="0.3022" stop-color="#0000bf"/><stop offset="0.3239" stop-color="#0000c0"/><stop offset="0.3457" stop-color="#0000c1"/><stop offset="0.3675" stop-color="#0000c2"/><stop offset="0.3892" stop-color="#0000c4"/><stop offset="0.4110" stop-color="#0000c6"/><stop offset="0.4328" stop-color="#0000c7"/><stop offset="0.4545" stop-color="#0000c8"/><stop offset="0.4981" stop-color="#0000c8"/><stop offset="0.5198" stop-color="#0000c9"/><stop offset="0.7375" stop-color="#0000c9"/><stop offset="0.7593" stop-color="#0000c8"/><stop offset="0.7810" stop-color="#0000c6"/><stop offset="0.8028" stop-color="#0000c5"/><stop offset="0.8463" stop-color="#0000c5"/><stop offset="0.8681" stop-color="#0000c4"/><stop offset="0.8899" stop-color="#0000c4"/><stop offset="0.9116" stop-color="#0000c3"/><stop offset="0.9334" stop-color="#0000c3"/><stop offset="0.9552" stop-color="#0000c2"/><stop offset="0.9769" stop-color="#0000c2"/><stop offset="0.9987" stop-color="#0000c1"/><stop offset="1.0000" stop-color="#0000c1"/></linearGradient>
<linearGradient id="g71" x1="0" x2="1" y1="0" y2="0"><stop offset="0.0000" stop-color="#0000a9"/><stop offset="0.0192" stop-color="#0100a8"/><stop offset="0.0410" stop-color="#0400a8"/><stop offset="0.0627" stop-color="#0800a7"/><stop offset="0.0845" stop-color="#0c00a7"/><stop offset="0.1063" stop-color="#0d00a7"/><stop offset="0.1280" stop-color="#0e00a6"/><stop offset="0.1498" stop-color="#1000a6"/><stop offset="0.1716" stop-color="#1100a6"/><stop offset="0.2586" stop-color="#1100a6"/><stop offset="0.2804" stop-color="#1000a6"/><stop offset="0.3022" stop-color="#0e00a6"/><stop offset="0.3239" stop-color="#0900a7"/><stop offset="0.3457" stop-color="#0300a8"/><stop offset="0.3675" stop-color="#0000aa"/><stop offset="0.3892" stop-color="#0000ad"/><stop offset="0.4110" stop-color="#0000b0"/><stop offset="0.4328" stop-color="#0000b4"/><stop offset="0.4545" stop-color="#0000b5"/><stop offset="0.4763" stop-color="#0000b6"/><stop offset="0.4981" stop-color="#0000b7"/><stop offset="0.5634" stop-color="#0000b7"/><stop offset="0.5851" stop-color="#0000b8"/><stop offset="0.7375" stop-color="#0000b8"/><stop offset="0.7593" stop-color="#0000b5"/><stop offset="0.7810" stop-color="#0000b0"/><stop offset="0.8028" stop-color="#0000b0"/><stop offset="0.8246" stop-color="#0000af"/><stop offset="0.8463" stop-color="#0000af"/><stop offset="0.8681" stop-color="#0000ae"/><stop offset="0.8899" stop-color="#0000ad"/><stop offset="0.9116" stop-color="#0000ac"/><stop offset="0.9334" stop-color="#0000aa"/><stop offset="0.9552" stop-color="#0000a9"/><stop offset="0.9769" stop-color="#0000a8"/><stop offset="0.9987" stop-color="#0100a8"/><stop offset="1.0000" stop-color="#0100a8"/></linearGradient>
<linearGradient id="g72" x1="0" x2="1" y1="0" y2="0"><stop offset="0.0000" stop-color="#2900a4"/><stop offset="0.0192" stop-color="#2c00a3"/><stop offset="0.0410" stop-color="#3000a3"/><stop offset="0.0627" stop-color="#3300a3"/><stop offset="0.0845" stop-color="#3700a2"/><stop offset="0.1063" stop-color="#3800a2"/><stop offset="0.1280" stop-color="#3a00a2"/><stop offset="0.1498" stop-color="#3b00a2"/><stop offset="0.1716" stop-color="#3d00a2"/><stop offset="0.2586" stop-color="#3d00a2"/><stop offset="0.2804" stop-color="#3b00a2"/><stop offset="0.3022" stop-color="#3a00a2"/><stop offset="0.3239" stop-color="#3400a2"/><stop offset="0.3457" stop-color="#2e00a3"/><stop offset="0.3675" stop-color="#2700a4"/><stop offset="0.3892" stop-color="#2000a5"/><stop offset="0.4110" stop-color="#1700a6"/><stop offset="0.4328" stop-color="#0e00a6"/><stop offset="0.4545" stop-color="#0c00a7"/><stop offset="0.4763" stop-color="#0900a7"/><stop offset="0.4981" stop-color="#0800a7"/><stop offset="0.5198" stop-color="#0700a7"/><stop offset="0.5416" stop-color="#0600a7"/><stop offset="0.5634" stop-color="#0600a7"/><stop offset="0.5851" stop-color="#0500a7"/><stop offset="0.6069" stop-color="#0400a8"/><stop offset="0.7375" stop-color="#0400a8"/><stop offset="0.7593" stop-color="#0c00a7"/><stop offset="0.7810" stop-color="#1700a6"/><stop offset="0.8028" stop-color="#1900a5"/><stop offset="0.8246" stop-color="#1a00a5"/><stop offset="0.8463" stop-color="#1b00a5"/><stop offset="0.8681" stop-color="#1d00a5"/><stop offset="0.8899" stop-color="#2000a5"/><stop offset="0.9116" stop-color="#2300a4"/><stop offset="0.9334" stop-color="#2600a4"/><stop offset="0.9552" stop-color="#2800a4"/><stop offset="0.9769" stop-color="#2a00a3"/><stop offset="0.9987" stop-color="#2c00a3"/><stop offset="1.0000" stop-color="#2c00a3"/></linearGradient>
<linearGradient id="g73" x1="0" x2="1" y1="0" y2="0"><stop offset="0.0000" stop-color="#4700a0"/><stop offset="0.0192" stop-color="#4a00a0"/><stop offset="0.0410" stop-color="#4b00a0"/><stop offset="0.3457" stop-color="#4b00a0"/><stop offset="0.3675" stop-color="#4500a1"/><stop offset="0.3892" stop-color="#3e00a1"/><stop offset="0.4110" stop-color="#3500a2"/><stop offset="0.4328" stop-color="#2d00a3"/><stop offset="0.4545" stop-color="#2a00a4"/><stop offset="0.4763" stop-color="#2700a4"/><stop offset="0.4981" stop-color="#2600a4"/><stop offset="0.5198" stop-color="#2600a4"/><stop offset="0.5416" stop-color="#2500a4"/><stop offset="0.5634" stop-color="#2400a4"/><stop offset="0.5851" stop-color="#2300a4"/><stop offset="0.7375" stop-color="#2300a4"/><stop offset="0.7593" stop-color="#2a00a4"/><stop offset="0.7810" stop-color="#3500a2"/><stop offset="0.8028" stop-color="#3700a2"/><stop offset="0.8246" stop-color="#3800a2"/><stop offset="0.8463" stop-color="#3a00a2"/><stop offset="0.8681" stop-color="#3b00a2"/><stop offset="0.8899" stop-color="#3e00a1"/><stop offset="0.9116" stop-color="#4100a1"/><stop offset="0.9334" stop-color="#4400a1"/><stop offset="0.9552" stop-color="#4700a0"/><stop offset="0.9769" stop-color="#4900a0"/><stop offset="0.9987" stop-color="#4b00a0"/><stop offset="1.0000" stop-color="#4b00a0"/></linearGradient>
<linearGradient id="cb" x1="0" x2="0" y1="1" y2="0"><stop offset="0.00000" stop-color="#000000"/><stop offset="0.00909" stop-color="#000000"/><stop offset="0.00909" stop-color="#0f002d"/><stop offset="0.02455" stop-color="#0f002d"/><stop offset="0.02455" stop-color="#400064"/><stop offset="0.04636" stop-color="#400064"/><stop offset="0.04636" stop-color="#4b00a0"/><stop offset="0.12727" stop-color="#4b00a0"/><stop offset="0.15091" stop-color="#0000a8"/><stop offset="0.17545" stop-color="#0000c8"/><stop offset="0.20455" stop-color="#0000e1"/><stop offset="0.22455" stop-color="#002de1"/><stop offset="0.23909" stop-color="#0055de"/><stop offset="0.25455" stop-color="#0073de"/><stop offset="0.26818" stop-color="#0082de"/><stop offset="0.29545" stop-color="#0096dc"/><stop offset="0.32727" stop-color="#00a0be"/><stop offset="0.36364" stop-color="#00a7a5"/><stop offset="0.40909" stop-color="#00a064"/><stop offset="0.45455" stop-color="#009600"/><stop offset="0.50000" stop-color="#00c500"/><stop offset="0.54545" stop-color="#00dc00"/><stop offset="0.57545" stop-color="#00f000"/><stop offset="0.60000" stop-color="#00fa00"/><stop offset="0.62909" stop-color="#6efa00"/><stop offset="0.64273" stop-color="#96fa00"/><stop offset="0.65636" stop-color="#c3fa00"/><stop offset="0.67545" stop-color="#d7f500"/><stop offset="0.69182" stop-color="#e8ee00"/><stop offset="0.71091" stop-color="#f3e400"/><stop offset="0.73000" stop-color="#fad700"/><stop offset="0.75000" stop-color="#ffcb00"/><stop offset="0.76091" stop-color="#ffc300"/><stop offset="0.77273" stop-color="#ffb600"/><stop offset="0.78818" stop-color="#ffa800"/><stop offset="0.80545" stop-color="#ff9800"/><stop offset="0.80545" stop-color="#ff7c00"/><stop offset="0.83182" stop-color="#ff7c00"/><stop offset="0.83182" stop-color="#c85a28"/><stop offset="0.84364" stop-color="#c85a28"/><stop offset="0.84364" stop-color="#af003c"/><stop offset="0.95727" stop-color="#af003c"/><stop offset="0.95727" stop-color="#c85a23"/><stop offset="0.97273" stop-color="#c85a23"/><stop offset="0.97273" stop-color="#969664"/><stop offset="0.97727" stop-color="#969664"/><stop offset="0.97727" stop-color="#aaaf87"/><stop offset="0.98818" stop-color="#aaaf87"/><stop offset="0.98818" stop-color="#cccccc"/><stop offset="1.00000" stop-color="#cccccc"/></linearGradient>
</defs>
<rect x="71.50" y="27.90" width="2638.08" height="759.50" fill="#fff"/>
<rect x="71.50" y="27.90" width="2634.20" height="759.50" fill="#cccccc"/>
<g shape-rendering="crispEdges">
<rect x="77.99" y="785.50" width="2524.97" height="2.20" fill="url(#g0)"/>
<rect x="77.99" y="783.83" width="2524.97" height="1.97" fill="url(#g1)"/>
<rect x="77.99" y="782.08" width="2524.97" height="2.05" fill="url(#g2)"/>
<rect x="77.99" y="780.11" width="2524.97" height="2.27" fill="url(#g3)"/>
<rect x="77.99" y="778.44" width="2524.97" height="1.97" fill="url(#g4)"/>
<rect x="77.99" y="776.77" width="2524.97" height="1.97" fill="url(#g5)"/>
<rect x="77.99" y="774.87" width="2524.97" height="2.20" fill="url(#g6)"/>
<rect x="77.99" y="772.97" width="2524.97" height="2.20" fill="url(#g7)"/>
<rect x="77.99" y="770.69" width="2524.97" height="2.58" fill="url(#g8)"/>
<rect x="77.99" y="768.41" width="2524.97" height="2.58" fill="url(#g9)"/>
<rect x="77.99" y="764.62" width="2524.97" height="4.10" fill="url(#g10)"/>
<rect x="77.99" y="760.06" width="2524.97" height="4.86" fill="url(#g11)"/>
<rect x="77.99" y="755.50" width="2524.97" height="4.86" fill="url(#g12)"/>
<rect x="77.99" y="749.42" width="2524.97" height="6.38" fill="url(#g13)"/>
<rect x="77.99" y="743.35" width="2524.97" height="6.38" fill="url(#g14)"/>
<rect x="77.99" y="737.27" width="2524.97" height="6.38" fill="url(#g15)"/>
<rect x="77.99" y="730.44" width="2524.97" height="7.14" fill="url(#g16)"/>
<rect x="77.99" y="722.84" width="2524.97" height="7.90" fill="url(#g17)"/>
<rect x="77.99" y="715.25" width="2524.97" height="7.90" fill="url(#g18)"/>
<rect x="77.99" y="707.65" width="2524.97" height="7.90" fill="url(#g19)"/>
<rect x="77.99" y="700.06" width="2524.97" height="7.89" fill="url(#g20)"/>
<rect x="77.99" y="692.46" width="2524.97" height="7.90" fill="url(#g21)"/>
<rect x="77.99" y="684.87" width="2524.97" height="7.90" fill="url(#g22)"/>
<rect x="77.99" y="677.27" width="2524.97" height="7.89" fill="url(#g23)"/>
<rect x="77.99" y="669.68" width="2524.97" height="7.90" fill="url(#g24)"/>
<rect x="77.99" y="662.08" width="2524.97" height="7.90" fill="url(#g25)"/>
<rect x="77.99" y="654.49" width="2524.97" height="7.90" fill="url(#g26)"/>
<rect x="77.99" y="646.89" width="2524.97" height="7.90" fill="url(#g27)"/>
<rect x="77.99" y="639.30" width="2524.97" height="7.89" fill="url(#g28)"/>
<rect x="77.99" y="630.94" width="2524.97" height="8.65" fill="url(#g29)"/>
<rect x="77.99" y="622.97" width="2524.97" height="8.27" fill="url(#g30)"/>
<rect x="77.99" y="615.75" width="2524.97" height="7.52" fill="url(#g31)"/>
<rect x="77.99" y="609.30" width="2524.97" height="6.76" fill="url(#g32)"/>
<rect x="77.99" y="602.84" width="2524.97" height="6.76" fill="url(#g33)"/>
<rect x="77.99" y="596.01" width="2524.97" height="7.14" fill="url(#g34)"/>
<rect x="77.99" y="589.93" width="2524.97" height="6.38" fill="url(#g35)"/>
<rect x="77.99" y="582.33" width="2524.97" height="7.90" fill="url(#g36)"/>
<rect x="77.99" y="574.74" width="2524.97" height="7.89" fill="url(#g37)"/>
<rect x="77.99" y="567.14" width="2524.97" height="7.90" fill="url(#g38)"/>
<rect x="77.99" y="559.55" width="2524.97" height="7.90" fill="url(#g39)"/>
<rect x="77.99" y="551.95" width="2524.97" height="7.90" fill="url(#g40)"/>
<rect x="77.99" y="544.36" width="2524.97" height="7.90" fill="url(#g41)"/>
<rect x="77.99" y="536.76" width="2524.97" height="7.89" fill="url(#g42)"/>
<rect x="77.99" y="529.17" width="2524.97" height="7.90" fill="url(#g43)"/>
<rect x="77.99" y="521.58" width="2524.97" height="7.89" fill="url(#g44)"/>
<rect x="77.99" y="513.98" width="2524.97" height="7.90" fill="url(#g45)"/>
<rect x="77.99" y="506.38" width="2524.97" height="7.90" fill="url(#g46)"/>
<rect x="77.99" y="498.79" width="2524.97" height="7.89" fill="url(#g47)"/>
<rect x="77.99" y="491.19" width="2524.97" height="7.89" fill="url(#g48)"/>
<rect x="77.99" y="483.60" width="2524.97" height="7.90" fill="#00d000"/>
<rect x="77.99" y="468.41" width="2524.97" height="15.49" fill="url(#g50)"/>
<rect x="77.99" y="453.22" width="2524.97" height="15.49" fill="url(#g51)"/>
<rect x="77.99" y="438.03" width="2524.97" height="15.49" fill="url(#g52)"/>
<rect x="77.99" y="422.84" width="2524.97" height="15.49" fill="url(#g53)"/>
<rect x="77.99" y="407.65" width="2524.97" height="15.49" fill="url(#g54)"/>
<rect x="77.99" y="392.46" width="2524.97" height="15.49" fill="url(#g55)"/>
<rect x="77.99" y="377.27" width="2524.97" height="15.49" fill="url(#g56)"/>
<rect x="77.99" y="362.08" width="2524.97" height="15.49" fill="url(#g57)"/>
<rect x="77.99" y="346.89" width="2524.97" height="15.49" fill="url(#g58)"/>
<rect x="77.99" y="331.70" width="2524.97" height="15.49" fill="url(#g59)"/>
<rect x="77.99" y="308.91" width="2524.97" height="23.08" fill="url(#g60)"/>
<rect x="77.99" y="286.13" width="2524.97" height="23.08" fill="url(#g61)"/>
<rect x="77.99" y="263.34" width="2524.97" height="23.09" fill="url(#g62)"/>
<rect x="77.99" y="240.56" width="2524.97" height="23.08" fill="url(#g63)"/>
<rect x="77.99" y="217.77" width="2524.97" height="23.08" fill="#0096dc"/>
<rect x="77.99" y="194.99" width="2524.97" height="23.08" fill="#0085de"/>
<rect x="77.99" y="172.20" width="2524.97" height="23.09" fill="#0076de"/>
<rect x="77.99" y="149.42" width="2524.97" height="23.08" fill="url(#g67)"/>
<rect x="77.99" y="126.63" width="2524.97" height="23.08" fill="#001fe1"/>
<rect x="77.99" y="103.85" width="2524.97" height="23.09" fill="url(#g69)"/>
<rect x="77.99" y="81.06" width="2524.97" height="23.08" fill="url(#g70)"/>
<rect x="77.99" y="58.28" width="2524.97" height="23.08" fill="url(#g71)"/>
<rect x="77.99" y="43.09" width="2524.97" height="15.49" fill="url(#g72)"/>
<rect x="77.99" y="27.90" width="2524.97" height="15.49" fill="url(#g73)"/>
</g>
<path d="M117.1 27.9V58.3M121.7 27.9V58.3M126.3 27.9V58.3M204.5 27.9V58.3M209.1 27.9V58.3M287.3 27.9V58.3M333.3 27.9V58.3M342.5 27.9V58.3M347.1 27.9V58.3M402.3 27.9V58.3M406.9 27.9V58.3M439.1 27.9V58.3M462.1 27.9V58.3M466.7 27.9V58.3M471.3 27.9V58.3M485.1 27.9V58.3M489.7 27.9V58.3M526.5 27.9V58.3M531.1 27.9V58.3M544.9 27.9V58.3M554.1 27.9V58.3M567.9 27.9V58.3M613.9 27.9V58.3M623.1 27.9V58.3M641.5 27.9V58.3M646.1 27.9V58.3M650.7 27.9V58.3M664.5 27.9V58.3M687.5 27.9V58.3M692.1 27.9V58.3M701.3 27.9V58.3M719.7 27.9V58.3M784.1 27.9V58.3M834.7 27.9V58.3M862.3 27.9V58.3M894.5 27.9V58.3M908.3 27.9V58.3M945.1 27.9V58.3M958.9 27.9V58.3M968.1 27.9V58.3M1004.9 27.9V58.3M1041.7 27.9V58.3M1092.3 27.9V58.3M1106.1 27.9V58.3M1115.3 27.9V58.3M1179.7 27.9V58.3M1188.9 27.9V58.3M1207.3 27.9V58.3M1262.5 27.9V58.3M1267.1 27.9V58.3M1271.7 27.9V58.3M1308.5 27.9V58.3M1317.7 27.9V58.3M1428.1 27.9V58.3M1432.7 27.9V58.3M1437.3 27.9V58.3M1446.5 27.9V58.3M1451.1 27.9V58.3M1464.9 27.9V58.3M1501.7 27.9V58.3M1510.9 27.9V58.3M1515.5 27.9V58.3M1520.1 27.9V58.3M1538.5 27.9V58.3M1612.1 27.9V58.3M1621.3 27.9V58.3M1644.3 27.9V58.3M1681.1 27.9V58.3M1699.5 27.9V58.3M1704.1 27.9V58.3M1763.9 27.9V58.3M1832.9 27.9V58.3M1837.5 27.9V58.3M1924.9 27.9V58.3M1934.1 27.9V58.3M1970.9 27.9V58.3M1975.5 27.9V58.3M1980.1 27.9V58.3M1998.5 27.9V58.3M2012.3 27.9V58.3M2016.9 27.9V58.3M2026.1 27.9V58.3M2044.5 27.9V58.3M2049.1 27.9V58.3M2058.3 27.9V58.3M2062.9 27.9V58.3M2141.1 27.9V58.3M2145.7 27.9V58.3M2173.3 27.9V58.3M2228.5 27.9V58.3M2463.1 27.9V58.3M2467.7 27.9V58.3M2472.3 27.9V58.3M2499.9 27.9V58.3M2518.3 27.9V58.3M2536.7 27.9V58.3M2555.1 27.9V58.3M2564.3 27.9V58.3M2587.3 27.9V58.3" stroke="#0000c8" stroke-opacity="0.100" stroke-width="4.6" fill="none" shape-rendering="crispEdges"/>
<path d="M213.7 27.9V58.3M337.9 27.9V58.3M457.5 27.9V58.3M586.3 27.9V58.3M696.7 27.9V58.3M733.5 27.9V58.3M779.5 27.9V58.3M839.3 27.9V58.3M922.1 27.9V58.3M926.7 27.9V58.3M935.9 27.9V58.3M1009.5 27.9V58.3M1032.5 27.9V58.3M1046.3 27.9V58.3M1083.1 27.9V58.3M1096.9 27.9V58.3M1101.5 27.9V58.3M1129.1 27.9V58.3M1193.5 27.9V58.3M1198.1 27.9V58.3M1257.9 27.9V58.3M1441.9 27.9V58.3M1478.7 27.9V58.3M1492.5 27.9V58.3M1506.3 27.9V58.3M1579.9 27.9V58.3M1584.5 27.9V58.3M1589.1 27.9V58.3M1607.5 27.9V58.3M1648.9 27.9V58.3M1685.7 27.9V58.3M1708.7 27.9V58.3M1713.3 27.9V58.3M1920.3 27.9V58.3M1938.7 27.9V58.3M1943.3 27.9V58.3M1947.9 27.9V58.3M1989.3 27.9V58.3M1993.9 27.9V58.3M2007.7 27.9V58.3M2021.5 27.9V58.3M2150.3 27.9V58.3M2233.1 27.9V58.3M2237.7 27.9V58.3M2453.9 27.9V58.3M2495.3 27.9V58.3M2504.5 27.9V58.3M2509.1 27.9V58.3M2513.7 27.9V58.3M2550.5 27.9V58.3M2596.5 27.9V58.3" stroke="#0000c8" stroke-opacity="0.180" stroke-width="4.6" fill="none" shape-rendering="crispEdges"/>
<path d="M98.7 27.9V58.3M135.5 27.9V58.3M153.9 27.9V58.3M167.7 27.9V58.3M250.5 27.9V58.3M255.1 27.9V58.3M278.1 27.9V58.3M291.9 27.9V58.3M296.5 27.9V58.3M305.7 27.9V58.3M319.5 27.9V58.3M351.7 27.9V58.3M379.3 27.9V58.3M397.7 27.9V58.3M411.5 27.9V58.3M420.7 27.9V58.3M425.3 27.9V58.3M475.9 27.9V58.3M494.3 27.9V58.3M498.9 27.9V58.3M512.7 27.9V58.3M521.9 27.9V58.3M595.5 27.9V58.3M632.3 27.9V58.3M738.1 27.9V58.3M820.9 27.9V58.3M876.1 27.9V58.3M885.3 27.9V58.3M972.7 27.9V58.3M986.5 27.9V58.3M991.1 27.9V58.3M1023.3 27.9V58.3M1142.9 27.9V58.3M1211.9 27.9V58.3M1230.3 27.9V58.3M1280.9 27.9V58.3M1285.5 27.9V58.3M1294.7 27.9V58.3M1299.3 27.9V58.3M1326.9 27.9V58.3M1349.9 27.9V58.3M1354.5 27.9V58.3M1363.7 27.9V58.3M1382.1 27.9V58.3M1386.7 27.9V58.3M1418.9 27.9V58.3M1455.7 27.9V58.3M1483.3 27.9V58.3M1552.3 27.9V58.3M1556.9 27.9V58.3M1575.3 27.9V58.3M1625.9 27.9V58.3M1676.5 27.9V58.3M1694.9 27.9V58.3M1736.3 27.9V58.3M1791.5 27.9V58.3M1823.7 27.9V58.3M1860.5 27.9V58.3M1865.1 27.9V58.3M1874.3 27.9V58.3M1897.3 27.9V58.3M1901.9 27.9V58.3M2090.5 27.9V58.3M2104.3 27.9V58.3M2136.5 27.9V58.3M2177.9 27.9V58.3M2214.7 27.9V58.3M2251.5 27.9V58.3M2260.7 27.9V58.3M2274.5 27.9V58.3M2283.7 27.9V58.3M2302.1 27.9V58.3M2338.9 27.9V58.3M2348.1 27.9V58.3M2357.3 27.9V58.3M2361.9 27.9V58.3M2366.5 27.9V58.3M2412.5 27.9V58.3M2417.1 27.9V58.3M2421.7 27.9V58.3M2430.9 27.9V58.3M2435.5 27.9V58.3M2476.9 27.9V58.3M2481.5 27.9V58.3" stroke="#5a0096" stroke-opacity="0.100" stroke-width="4.6" fill="none" shape-rendering="crispEdges"/>
<path d="M158.5 27.9V58.3M163.1 27.9V58.3M370.1 27.9V58.3M374.7 27.9V58.3M388.5 27.9V58.3M393.1 27.9V58.3M416.1 27.9V58.3M429.9 27.9V58.3M508.1 27.9V58.3M742.7 27.9V58.3M807.1 27.9V58.3M811.7 27.9V58.3M866.9 27.9V58.3M977.3 27.9V58.3M995.7 27.9V58.3M1055.5 27.9V58.3M1138.3 27.9V58.3M1147.5 27.9V58.3M1216.5 27.9V58.3M1221.1 27.9V58.3M1331.5 27.9V58.3M1336.1 27.9V58.3M1359.1 27.9V58.3M1368.3 27.9V58.3M1377.5 27.9V58.3M1391.3 27.9V58.3M1405.1 27.9V58.3M1409.7 27.9V58.3M1593.7 27.9V58.3M1727.1 27.9V58.3M1731.7 27.9V58.3M1855.9 27.9V58.3M1878.9 27.9V58.3M1883.5 27.9V58.3M2099.7 27.9V58.3M2108.9 27.9V58.3M2113.5 27.9V58.3M2164.1 27.9V58.3M2191.7 27.9V58.3M2196.3 27.9V58.3M2200.9 27.9V58.3M2205.5 27.9V58.3M2210.1 27.9V58.3M2256.1 27.9V58.3M2279.1 27.9V58.3M2329.7 27.9V58.3M2334.3 27.9V58.3M2343.5 27.9V58.3M2426.3 27.9V58.3" stroke="#5a0096" stroke-opacity="0.180" stroke-width="4.6" fill="none" shape-rendering="crispEdges"/>
<path d="M84.9 58.3V103.8M98.7 58.3V103.8M126.3 58.3V103.8M172.3 58.3V103.8M176.9 58.3V103.8M195.3 58.3V103.8M287.3 58.3V103.8M291.9 58.3V103.8M388.5 58.3V103.8M429.9 58.3V103.8M439.1 58.3V103.8M503.5 58.3V103.8M508.1 58.3V103.8M512.7 58.3V103.8M540.3 58.3V103.8M577.1 58.3V103.8M604.7 58.3V103.8M609.3 58.3V103.8M692.1 58.3V103.8M705.9 58.3V103.8M866.9 58.3V103.8M889.9 58.3V103.8M903.7 58.3V103.8M908.3 58.3V103.8M912.9 58.3V103.8M954.3 58.3V103.8M995.7 58.3V103.8M1000.3 58.3V103.8M1009.5 58.3V103.8M1023.3 58.3V103.8M1027.9 58.3V103.8M1037.1 58.3V103.8M1050.9 58.3V103.8M1055.5 58.3V103.8M1060.1 58.3V103.8M1064.7 58.3V103.8M1129.1 58.3V103.8M1142.9 58.3V103.8M1152.1 58.3V103.8M1161.3 58.3V103.8M1188.9 58.3V103.8M1198.1 58.3V103.8M1285.5 58.3V103.8M1290.1 58.3V103.8M1299.3 58.3V103.8M1331.5 58.3V103.8M1336.1 58.3V103.8M1354.5 58.3V103.8M1423.5 58.3V103.8M1487.9 58.3V103.8M1524.7 58.3V103.8M1533.9 58.3V103.8M1547.7 58.3V103.8M1552.3 58.3V103.8M1584.5 58.3V103.8M1593.7 58.3V103.8M1704.1 58.3V103.8M1713.3 58.3V103.8M1750.1 58.3V103.8M1782.3 58.3V103.8M1819.1 58.3V103.8M1823.7 58.3V103.8M1842.1 58.3V103.8M1846.7 58.3V103.8M1883.5 58.3V103.8M1892.7 58.3V103.8M1943.3 58.3V103.8M2049.1 58.3V103.8M2053.7 58.3V103.8M2099.7 58.3V103.8M2104.3 58.3V103.8M2108.9 58.3V103.8M2297.5 58.3V103.8M2320.5 58.3V103.8M2361.9 58.3V103.8M2389.5 58.3V103.8M2403.3 58.3V103.8M2509.1 58.3V103.8M2518.3 58.3V103.8M2522.9 58.3V103.8M2555.1 58.3V103.8M2564.3 58.3V103.8M2568.9 58.3V103.8" stroke="#0000e0" stroke-opacity="0.050" stroke-width="4.6" fill="none" shape-rendering="crispEdges"/>
<path d="M80.3 58.3V103.8M153.9 58.3V103.8M158.5 58.3V103.8M167.7 58.3V103.8M199.9 58.3V103.8M333.3 58.3V103.8M347.1 58.3V103.8M485.1 58.3V103.8M618.5 58.3V103.8M696.7 58.3V103.8M724.3 58.3V103.8M839.3 58.3V103.8M848.5 58.3V103.8M894.5 58.3V103.8M899.1 58.3V103.8M917.5 58.3V103.8M949.7 58.3V103.8M1156.7 58.3V103.8M1165.9 58.3V103.8M1193.5 58.3V103.8M1280.9 58.3V103.8M1294.7 58.3V103.8M1308.5 58.3V103.8M1313.1 58.3V103.8M1428.1 58.3V103.8M1515.5 58.3V103.8M1676.5 58.3V103.8M1694.9 58.3V103.8M1717.9 58.3V103.8M1745.5 58.3V103.8M1865.1 58.3V103.8M2168.7 58.3V103.8M2191.7 58.3V103.8M2302.1 58.3V103.8M2325.1 58.3V103.8M2329.7 58.3V103.8M2366.5 58.3V103.8M2532.1 58.3V103.8M2559.7 58.3V103.8M2573.5 58.3V103.8M2578.1 58.3V103.8M2582.7 58.3V103.8" stroke="#0000e0" stroke-opacity="0.090" stroke-width="4.6" fill="none" shape-rendering="crispEdges"/>
<path d="M241.3 58.3V103.8M255.1 58.3V103.8M273.5 58.3V103.8M310.3 58.3V103.8M314.9 58.3V103.8M393.1 58.3V103.8M397.7 58.3V103.8M406.9 58.3V103.8M448.3 58.3V103.8M544.9 58.3V103.8M567.9 58.3V103.8M572.5 58.3V103.8M586.3 58.3V103.8M646.1 58.3V103.8M659.9 58.3V103.8M664.5 58.3V103.8M669.1 58.3V103.8M742.7 58.3V103.8M751.9 58.3V103.8M761.1 58.3V103.8M770.3 58.3V103.8M802.5 58.3V103.8M807.1 58.3V103.8M935.9 58.3V103.8M940.5 58.3V103.8M968.1 58.3V103.8M972.7 58.3V103.8M1018.7 58.3V103.8M1046.3 58.3V103.8M1073.9 58.3V103.8M1119.9 58.3V103.8M1211.9 58.3V103.8M1234.9 58.3V103.8M1244.1 58.3V103.8M1248.7 58.3V103.8M1253.3 58.3V103.8M1257.9 58.3V103.8M1345.3 58.3V103.8M1363.7 58.3V103.8M1377.5 58.3V103.8M1382.1 58.3V103.8M1395.9 58.3V103.8M1400.5 58.3V103.8M1409.7 58.3V103.8M1464.9 58.3V103.8M1492.5 58.3V103.8M1561.5 58.3V103.8M1566.1 58.3V103.8M1639.7 58.3V103.8M1653.5 58.3V103.8M1722.5 58.3V103.8M1727.1 58.3V103.8M1754.7 58.3V103.8M1763.9 58.3V103.8M1791.5 58.3V103.8M1832.9 58.3V103.8M2003.1 58.3V103.8M2007.7 58.3V103.8M2012.3 58.3V103.8M2016.9 58.3V103.8M2030.7 58.3V103.8M2039.9 58.3V103.8M2076.7 58.3V103.8M2141.1 58.3V103.8M2150.3 58.3V103.8M2173.3 58.3V103.8M2177.9 58.3V103.8M2196.3 58.3V103.8M2265.3 58.3V103.8M2398.7 58.3V103.8M2453.9 58.3V103.8M2476.9 58.3V103.8M2486.1 58.3V103.8M2545.9 58.3V103.8M2550.5 58.3V103.8" stroke="#3000a0" stroke-opacity="0.050" stroke-width="4.6" fill="none" shape-rendering="crispEdges"/>
<path d="M190.7 58.3V103.8M209.1 58.3V103.8M213.7 58.3V103.8M250.5 58.3V103.8M411.5 58.3V103.8M531.1 58.3V103.8M590.9 58.3V103.8M595.5 58.3V103.8M765.7 58.3V103.8M876.1 58.3V103.8M931.3 58.3V103.8M1115.3 58.3V103.8M1372.9 58.3V103.8M1441.9 58.3V103.8M1478.7 58.3V103.8M1796.1 58.3V103.8M1828.3 58.3V103.8M1851.3 58.3V103.8M1920.3 58.3V103.8M1970.9 58.3V103.8M2021.5 58.3V103.8M2072.1 58.3V103.8M2136.5 58.3V103.8M2182.5 58.3V103.8M2219.3 58.3V103.8M2260.7 58.3V103.8M2311.3 58.3V103.8M2352.7 58.3V103.8M2357.3 58.3V103.8M2435.5 58.3V103.8M2440.1 58.3V103.8M2444.7 58.3V103.8M2449.3 58.3V103.8M2481.5 58.3V103.8" stroke="#3000a0" stroke-opacity="0.090" stroke-width="4.6" fill="none" shape-rendering="crispEdges"/>
<path d="M80.3 103.8V217.8M84.9 103.8V217.8M107.9 103.8V217.8M130.9 103.8V217.8M149.3 103.8V217.8M158.5 103.8V217.8M163.1 103.8V217.8M176.9 103.8V217.8M218.3 103.8V217.8M227.5 103.8V217.8M278.1 103.8V217.8M324.1 103.8V217.8M328.7 103.8V217.8M452.9 103.8V217.8M466.7 103.8V217.8M471.3 103.8V217.8M485.1 103.8V217.8M489.7 103.8V217.8M535.7 103.8V217.8M540.3 103.8V217.8M549.5 103.8V217.8M554.1 103.8V217.8M586.3 103.8V217.8M641.5 103.8V217.8M655.3 103.8V217.8M669.1 103.8V217.8M678.3 103.8V217.8M710.5 103.8V217.8M784.1 103.8V217.8M793.3 103.8V217.8M807.1 103.8V217.8M811.7 103.8V217.8M830.1 103.8V217.8M894.5 103.8V217.8M899.1 103.8V217.8M922.1 103.8V217.8M954.3 103.8V217.8M977.3 103.8V217.8M995.7 103.8V217.8M1000.3 103.8V217.8M1014.1 103.8V217.8M1041.7 103.8V217.8M1096.9 103.8V217.8M1115.3 103.8V217.8M1119.9 103.8V217.8M1124.5 103.8V217.8M1170.5 103.8V217.8M1184.3 103.8V217.8M1257.9 103.8V217.8M1262.5 103.8V217.8M1267.1 103.8V217.8M1317.7 103.8V217.8M1349.9 103.8V217.8M1368.3 103.8V217.8M1372.9 103.8V217.8M1428.1 103.8V217.8M1441.9 103.8V217.8M1446.5 103.8V217.8M1455.7 103.8V217.8M1464.9 103.8V217.8M1524.7 103.8V217.8M1533.9 103.8V217.8M1566.1 103.8V217.8M1570.7 103.8V217.8M1635.1 103.8V217.8M1639.7 103.8V217.8M1648.9 103.8V217.8M1658.1 103.8V217.8M1681.1 103.8V217.8M1694.9 103.8V217.8M1708.7 103.8V217.8M1717.9 103.8V217.8M1731.7 103.8V217.8M1782.3 103.8V217.8M1823.7 103.8V217.8M1901.9 103.8V217.8M1980.1 103.8V217.8M2044.5 103.8V217.8M2118.1 103.8V217.8M2141.1 103.8V217.8M2159.5 103.8V217.8M2168.7 103.8V217.8M2302.1 103.8V217.8M2352.7 103.8V217.8M2407.9 103.8V217.8M2435.5 103.8V217.8M2440.1 103.8V217.8M2463.1 103.8V217.8M2467.7 103.8V217.8M2518.3 103.8V217.8M2532.1 103.8V217.8M2550.5 103.8V217.8M2555.1 103.8V217.8M2564.3 103.8V217.8M2591.9 103.8V217.8" stroke="#ffffff" stroke-opacity="0.020" stroke-width="4.6" fill="none" shape-rendering="crispEdges"/>
<path d="M121.7 103.8V217.8M126.3 103.8V217.8M144.7 103.8V217.8M153.9 103.8V217.8M209.1 103.8V217.8M213.7 103.8V217.8M388.5 103.8V217.8M457.5 103.8V217.8M462.1 103.8V217.8M475.9 103.8V217.8M480.5 103.8V217.8M558.7 103.8V217.8M802.5 103.8V217.8M834.7 103.8V217.8M839.3 103.8V217.8M958.9 103.8V217.8M1064.7 103.8V217.8M1073.9 103.8V217.8M1078.5 103.8V217.8M1083.1 103.8V217.8M1087.7 103.8V217.8M1092.3 103.8V217.8M1354.5 103.8V217.8M1359.1 103.8V217.8M1418.9 103.8V217.8M1432.7 103.8V217.8M1437.3 103.8V217.8M1460.3 103.8V217.8M1492.5 103.8V217.8M1497.1 103.8V217.8M1510.9 103.8V217.8M1529.3 103.8V217.8M1556.9 103.8V217.8M1690.3 103.8V217.8M1699.5 103.8V217.8M1713.3 103.8V217.8M1727.1 103.8V217.8M1759.3 103.8V217.8M1773.1 103.8V217.8M1786.9 103.8V217.8M2417.1 103.8V217.8M2421.7 103.8V217.8M2426.3 103.8V217.8M2430.9 103.8V217.8M2513.7 103.8V217.8M2527.5 103.8V217.8M2559.7 103.8V217.8M2596.5 103.8V217.8" stroke="#ffffff" stroke-opacity="0.035" stroke-width="4.6" fill="none" shape-rendering="crispEdges"/>
<path d="M98.7 103.8V217.8M103.3 103.8V217.8M222.9 103.8V217.8M241.3 103.8V217.8M250.5 103.8V217.8M291.9 103.8V217.8M296.5 103.8V217.8M305.7 103.8V217.8M314.9 103.8V217.8M365.5 103.8V217.8M370.1 103.8V217.8M397.7 103.8V217.8M416.1 103.8V217.8M420.7 103.8V217.8M439.1 103.8V217.8M443.7 103.8V217.8M508.1 103.8V217.8M512.7 103.8V217.8M531.1 103.8V217.8M544.9 103.8V217.8M590.9 103.8V217.8M609.3 103.8V217.8M696.7 103.8V217.8M705.9 103.8V217.8M820.9 103.8V217.8M848.5 103.8V217.8M853.1 103.8V217.8M857.7 103.8V217.8M862.3 103.8V217.8M908.3 103.8V217.8M926.7 103.8V217.8M931.3 103.8V217.8M945.1 103.8V217.8M968.1 103.8V217.8M986.5 103.8V217.8M1106.1 103.8V217.8M1138.3 103.8V217.8M1152.1 103.8V217.8M1156.7 103.8V217.8M1161.3 103.8V217.8M1193.5 103.8V217.8M1198.1 103.8V217.8M1202.7 103.8V217.8M1221.1 103.8V217.8M1234.9 103.8V217.8M1239.5 103.8V217.8M1244.1 103.8V217.8M1248.7 103.8V217.8M1271.7 103.8V217.8M1276.3 103.8V217.8M1280.9 103.8V217.8M1285.5 103.8V217.8M1294.7 103.8V217.8M1299.3 103.8V217.8M1303.9 103.8V217.8M1313.1 103.8V217.8M1336.1 103.8V217.8M1391.3 103.8V217.8M1400.5 103.8V217.8M1469.5 103.8V217.8M1543.1 103.8V217.8M1575.3 103.8V217.8M1579.9 103.8V217.8M1616.7 103.8V217.8M1676.5 103.8V217.8M1796.1 103.8V217.8M1809.9 103.8V217.8M1828.3 103.8V217.8M1832.9 103.8V217.8M1846.7 103.8V217.8M1883.5 103.8V217.8M1897.3 103.8V217.8M1911.1 103.8V217.8M1920.3 103.8V217.8M1947.9 103.8V217.8M1952.5 103.8V217.8M2007.7 103.8V217.8M2030.7 103.8V217.8M2035.3 103.8V217.8M2076.7 103.8V217.8M2104.3 103.8V217.8M2177.9 103.8V217.8M2196.3 103.8V217.8M2205.5 103.8V217.8M2214.7 103.8V217.8M2219.3 103.8V217.8M2223.9 103.8V217.8M2228.5 103.8V217.8M2237.7 103.8V217.8M2260.7 103.8V217.8M2265.3 103.8V217.8M2274.5 103.8V217.8M2279.1 103.8V217.8M2283.7 103.8V217.8M2288.3 103.8V217.8M2306.7 103.8V217.8M2338.9 103.8V217.8M2458.5 103.8V217.8M2481.5 103.8V217.8M2486.1 103.8V217.8M2490.7 103.8V217.8M2504.5 103.8V217.8M2582.7 103.8V217.8" stroke="#000000" stroke-opacity="0.020" stroke-width="4.6" fill="none" shape-rendering="crispEdges"/>
<path d="M287.3 103.8V217.8M301.1 103.8V217.8M360.9 103.8V217.8M402.3 103.8V217.8M406.9 103.8V217.8M411.5 103.8V217.8M425.3 103.8V217.8M429.9 103.8V217.8M517.3 103.8V217.8M595.5 103.8V217.8M600.1 103.8V217.8M604.7 103.8V217.8M756.5 103.8V217.8M770.3 103.8V217.8M940.5 103.8V217.8M1023.3 103.8V217.8M1216.5 103.8V217.8M1225.7 103.8V217.8M1308.5 103.8V217.8M1331.5 103.8V217.8M1386.7 103.8V217.8M1405.1 103.8V217.8M1800.7 103.8V217.8M1805.3 103.8V217.8M1814.5 103.8V217.8M1837.5 103.8V217.8M1892.7 103.8V217.8M1924.9 103.8V217.8M1929.5 103.8V217.8M1970.9 103.8V217.8M1975.5 103.8V217.8M2012.3 103.8V217.8M2085.9 103.8V217.8M2090.5 103.8V217.8M2095.1 103.8V217.8M2099.7 103.8V217.8M2127.3 103.8V217.8M2182.5 103.8V217.8M2200.9 103.8V217.8M2210.1 103.8V217.8M2256.1 103.8V217.8M2311.3 103.8V217.8M2361.9 103.8V217.8M2366.5 103.8V217.8M2476.9 103.8V217.8M2495.3 103.8V217.8M2499.9 103.8V217.8" stroke="#000000" stroke-opacity="0.035" stroke-width="4.6" fill="none" shape-rendering="crispEdges"/>
<path d="M227.5 331.7V422.8M236.7 331.7V422.8M241.3 331.7V422.8M245.9 331.7V422.8M305.7 331.7V422.8M310.3 331.7V422.8M342.5 331.7V422.8M347.1 331.7V422.8M356.3 331.7V422.8M360.9 331.7V422.8M365.5 331.7V422.8M411.5 331.7V422.8M425.3 331.7V422.8M448.3 331.7V422.8M457.5 331.7V422.8M462.1 331.7V422.8M466.7 331.7V422.8M531.1 331.7V422.8M540.3 331.7V422.8M613.9 331.7V422.8M623.1 331.7V422.8M682.9 331.7V422.8M820.9 331.7V422.8M825.5 331.7V422.8M848.5 331.7V422.8M926.7 331.7V422.8M931.3 331.7V422.8M935.9 331.7V422.8M940.5 331.7V422.8M945.1 331.7V422.8M958.9 331.7V422.8M991.1 331.7V422.8M1023.3 331.7V422.8M1032.5 331.7V422.8M1037.1 331.7V422.8M1041.7 331.7V422.8M1046.3 331.7V422.8M1106.1 331.7V422.8M1110.7 331.7V422.8M1294.7 331.7V422.8M1299.3 331.7V422.8M1313.1 331.7V422.8M1336.1 331.7V422.8M1414.3 331.7V422.8M1432.7 331.7V422.8M1520.1 331.7V422.8M1533.9 331.7V422.8M1639.7 331.7V422.8M1690.3 331.7V422.8M1699.5 331.7V422.8M1777.7 331.7V422.8M1782.3 331.7V422.8M1805.3 331.7V422.8M1832.9 331.7V422.8M1842.1 331.7V422.8M1846.7 331.7V422.8M1851.3 331.7V422.8M1855.9 331.7V422.8M1878.9 331.7V422.8M1915.7 331.7V422.8M1929.5 331.7V422.8M1938.7 331.7V422.8M1975.5 331.7V422.8M1980.1 331.7V422.8M1984.7 331.7V422.8M1993.9 331.7V422.8M2035.3 331.7V422.8M2044.5 331.7V422.8M2223.9 331.7V422.8M2228.5 331.7V422.8M2251.5 331.7V422.8M2297.5 331.7V422.8M2348.1 331.7V422.8M2407.9 331.7V422.8M2440.1 331.7V422.8M2453.9 331.7V422.8M2463.1 331.7V422.8M2522.9 331.7V422.8M2550.5 331.7V422.8M2555.1 331.7V422.8M2564.3 331.7V422.8M2596.5 331.7V422.8" stroke="#ffffff" stroke-opacity="0.012" stroke-width="4.6" fill="none" shape-rendering="crispEdges"/>
<path d="M107.9 331.7V422.8M126.3 331.7V422.8M130.9 331.7V422.8M153.9 331.7V422.8M416.1 331.7V422.8M494.3 331.7V422.8M498.9 331.7V422.8M503.5 331.7V422.8M618.5 331.7V422.8M627.7 331.7V422.8M659.9 331.7V422.8M687.5 331.7V422.8M816.3 331.7V422.8M830.1 331.7V422.8M834.7 331.7V422.8M853.1 331.7V422.8M857.7 331.7V422.8M862.3 331.7V422.8M922.1 331.7V422.8M968.1 331.7V422.8M972.7 331.7V422.8M977.3 331.7V422.8M981.9 331.7V422.8M986.5 331.7V422.8M1027.9 331.7V422.8M1133.7 331.7V422.8M1271.7 331.7V422.8M1317.7 331.7V422.8M1322.3 331.7V422.8M1349.9 331.7V422.8M1354.5 331.7V422.8M1359.1 331.7V422.8M1409.7 331.7V422.8M1625.9 331.7V422.8M1681.1 331.7V422.8M1786.9 331.7V422.8M1791.5 331.7V422.8M1961.7 331.7V422.8M1970.9 331.7V422.8M2021.5 331.7V422.8M2435.5 331.7V422.8" stroke="#ffffff" stroke-opacity="0.025" stroke-width="4.6" fill="none" shape-rendering="crispEdges"/>
<path d="M80.3 331.7V422.8M94.1 331.7V422.8M140.1 331.7V422.8M144.7 331.7V422.8M181.5 331.7V422.8M190.7 331.7V422.8M204.5 331.7V422.8M218.3 331.7V422.8M232.1 331.7V422.8M250.5 331.7V422.8M255.1 331.7V422.8M259.7 331.7V422.8M268.9 331.7V422.8M273.5 331.7V422.8M296.5 331.7V422.8M319.5 331.7V422.8M324.1 331.7V422.8M328.7 331.7V422.8M388.5 331.7V422.8M480.5 331.7V422.8M526.5 331.7V422.8M549.5 331.7V422.8M581.7 331.7V422.8M590.9 331.7V422.8M604.7 331.7V422.8M609.3 331.7V422.8M641.5 331.7V422.8M650.7 331.7V422.8M710.5 331.7V422.8M724.3 331.7V422.8M742.7 331.7V422.8M747.3 331.7V422.8M871.5 331.7V422.8M885.3 331.7V422.8M912.9 331.7V422.8M1000.3 331.7V422.8M1060.1 331.7V422.8M1161.3 331.7V422.8M1175.1 331.7V422.8M1179.7 331.7V422.8M1188.9 331.7V422.8M1207.3 331.7V422.8M1225.7 331.7V422.8M1234.9 331.7V422.8M1239.5 331.7V422.8M1326.9 331.7V422.8M1331.5 331.7V422.8M1340.7 331.7V422.8M1368.3 331.7V422.8M1446.5 331.7V422.8M1478.7 331.7V422.8M1506.3 331.7V422.8M1662.7 331.7V422.8M1704.1 331.7V422.8M1722.5 331.7V422.8M1727.1 331.7V422.8M1731.7 331.7V422.8M1745.5 331.7V422.8M1750.1 331.7V422.8M1759.3 331.7V422.8M1865.1 331.7V422.8M1869.7 331.7V422.8M1892.7 331.7V422.8M1897.3 331.7V422.8M1901.9 331.7V422.8M1947.9 331.7V422.8M1952.5 331.7V422.8M1957.1 331.7V422.8M2003.1 331.7V422.8M2049.1 331.7V422.8M2062.9 331.7V422.8M2076.7 331.7V422.8M2081.3 331.7V422.8M2118.1 331.7V422.8M2127.3 331.7V422.8M2136.5 331.7V422.8M2154.9 331.7V422.8M2173.3 331.7V422.8M2177.9 331.7V422.8M2200.9 331.7V422.8M2210.1 331.7V422.8M2256.1 331.7V422.8M2288.3 331.7V422.8M2292.9 331.7V422.8M2320.5 331.7V422.8M2325.1 331.7V422.8M2329.7 331.7V422.8M2334.3 331.7V422.8M2343.5 331.7V422.8M2357.3 331.7V422.8M2398.7 331.7V422.8M2417.1 331.7V422.8M2421.7 331.7V422.8M2476.9 331.7V422.8M2490.7 331.7V422.8M2513.7 331.7V422.8M2536.7 331.7V422.8M2578.1 331.7V422.8M2587.3 331.7V422.8" stroke="#000000" stroke-opacity="0.012" stroke-width="4.6" fill="none" shape-rendering="crispEdges"/>
<path d="M98.7 331.7V422.8M172.3 331.7V422.8M195.3 331.7V422.8M278.1 331.7V422.8M282.7 331.7V422.8M291.9 331.7V422.8M374.7 331.7V422.8M379.3 331.7V422.8M393.1 331.7V422.8M544.9 331.7V422.8M577.1 331.7V422.8M586.3 331.7V422.8M636.9 331.7V422.8M646.1 331.7V422.8M715.1 331.7V422.8M719.7 331.7V422.8M738.1 331.7V422.8M751.9 331.7V422.8M756.5 331.7V422.8M1018.7 331.7V422.8M1510.9 331.7V422.8M1538.5 331.7V422.8M1543.1 331.7V422.8M1561.5 331.7V422.8M1589.1 331.7V422.8M1602.9 331.7V422.8M1612.1 331.7V422.8M1736.3 331.7V422.8M1740.9 331.7V422.8M1754.7 331.7V422.8M2053.7 331.7V422.8M2072.1 331.7V422.8M2090.5 331.7V422.8M2122.7 331.7V422.8M2131.9 331.7V422.8M2145.7 331.7V422.8M2150.3 331.7V422.8M2159.5 331.7V422.8M2205.5 331.7V422.8M2269.9 331.7V422.8M2306.7 331.7V422.8M2311.3 331.7V422.8M2315.9 331.7V422.8M2380.3 331.7V422.8M2384.9 331.7V422.8M2467.7 331.7V422.8M2518.3 331.7V422.8M2582.7 331.7V422.8" stroke="#000000" stroke-opacity="0.025" stroke-width="4.6" fill="none" shape-rendering="crispEdges"/>
<path d="M259.7 559.5V596.0M264.3 559.5V596.0M314.9 559.5V596.0M347.1 559.5V596.0M383.9 559.5V596.0M397.7 559.5V596.0M406.9 559.5V596.0M434.5 559.5V596.0M439.1 559.5V596.0M443.7 559.5V596.0M448.3 559.5V596.0M489.7 559.5V596.0M494.3 559.5V596.0M581.7 559.5V596.0M613.9 559.5V596.0M627.7 559.5V596.0M646.1 559.5V596.0M669.1 559.5V596.0M682.9 559.5V596.0M696.7 559.5V596.0M719.7 559.5V596.0M770.3 559.5V596.0M779.5 559.5V596.0M811.7 559.5V596.0M816.3 559.5V596.0M820.9 559.5V596.0M871.5 559.5V596.0M889.9 559.5V596.0M908.3 559.5V596.0M917.5 559.5V596.0M926.7 559.5V596.0M963.5 559.5V596.0M972.7 559.5V596.0M1004.9 559.5V596.0M1161.3 559.5V596.0M1179.7 559.5V596.0M1221.1 559.5V596.0M1230.3 559.5V596.0M1253.3 559.5V596.0M1280.9 559.5V596.0M1299.3 559.5V596.0M1303.9 559.5V596.0M1308.5 559.5V596.0M1331.5 559.5V596.0M1372.9 559.5V596.0M1377.5 559.5V596.0M1391.3 559.5V596.0M1455.7 559.5V596.0M1487.9 559.5V596.0M1570.7 559.5V596.0M1593.7 559.5V596.0M1667.3 559.5V596.0M1676.5 559.5V596.0M1690.3 559.5V596.0M1727.1 559.5V596.0M1750.1 559.5V596.0M1754.7 559.5V596.0M1777.7 559.5V596.0M1819.1 559.5V596.0M1828.3 559.5V596.0M1837.5 559.5V596.0M1842.1 559.5V596.0M1869.7 559.5V596.0M1874.3 559.5V596.0M1878.9 559.5V596.0M1929.5 559.5V596.0M1957.1 559.5V596.0M1989.3 559.5V596.0M1998.5 559.5V596.0M2007.7 559.5V596.0M2039.9 559.5V596.0M2062.9 559.5V596.0M2122.7 559.5V596.0M2145.7 559.5V596.0M2150.3 559.5V596.0M2168.7 559.5V596.0M2177.9 559.5V596.0M2205.5 559.5V596.0M2325.1 559.5V596.0M2338.9 559.5V596.0M2361.9 559.5V596.0M2412.5 559.5V596.0M2421.7 559.5V596.0M2504.5 559.5V596.0M2587.3 559.5V596.0" stroke="#ffff00" stroke-opacity="0.050" stroke-width="4.6" fill="none" shape-rendering="crispEdges"/>
<path d="M181.5 559.5V596.0M186.1 559.5V596.0M209.1 559.5V596.0M213.7 559.5V596.0M245.9 559.5V596.0M388.5 559.5V596.0M498.9 559.5V596.0M618.5 559.5V596.0M632.3 559.5V596.0M636.9 559.5V596.0M673.7 559.5V596.0M687.5 559.5V596.0M715.1 559.5V596.0M774.9 559.5V596.0M912.9 559.5V596.0M922.1 559.5V596.0M1055.5 559.5V596.0M1142.9 559.5V596.0M1147.5 559.5V596.0M1152.1 559.5V596.0M1234.9 559.5V596.0M1276.3 559.5V596.0M1285.5 559.5V596.0M1290.1 559.5V596.0M1294.7 559.5V596.0M1368.3 559.5V596.0M1395.9 559.5V596.0M1409.7 559.5V596.0M1414.3 559.5V596.0M1671.9 559.5V596.0M1681.1 559.5V596.0M1832.9 559.5V596.0M1938.7 559.5V596.0M1943.3 559.5V596.0M1993.9 559.5V596.0M2053.7 559.5V596.0M2127.3 559.5V596.0M2173.3 559.5V596.0M2182.5 559.5V596.0M2191.7 559.5V596.0M2265.3 559.5V596.0M2320.5 559.5V596.0M2550.5 559.5V596.0M2582.7 559.5V596.0" stroke="#ffff00" stroke-opacity="0.100" stroke-width="4.6" fill="none" shape-rendering="crispEdges"/>
<path d="M94.1 559.5V596.0M126.3 559.5V596.0M130.9 559.5V596.0M144.7 559.5V596.0M158.5 559.5V596.0M167.7 559.5V596.0M199.9 559.5V596.0M218.3 559.5V596.0M291.9 559.5V596.0M310.3 559.5V596.0M319.5 559.5V596.0M365.5 559.5V596.0M425.3 559.5V596.0M475.9 559.5V596.0M485.1 559.5V596.0M526.5 559.5V596.0M567.9 559.5V596.0M572.5 559.5V596.0M747.3 559.5V596.0M765.7 559.5V596.0M784.1 559.5V596.0M839.3 559.5V596.0M848.5 559.5V596.0M876.1 559.5V596.0M940.5 559.5V596.0M954.3 559.5V596.0M1046.3 559.5V596.0M1106.1 559.5V596.0M1119.9 559.5V596.0M1165.9 559.5V596.0M1170.5 559.5V596.0M1354.5 559.5V596.0M1400.5 559.5V596.0M1441.9 559.5V596.0M1451.1 559.5V596.0M1469.5 559.5V596.0M1474.1 559.5V596.0M1483.3 559.5V596.0M1497.1 559.5V596.0M1575.3 559.5V596.0M1584.5 559.5V596.0M1589.1 559.5V596.0M1685.7 559.5V596.0M1713.3 559.5V596.0M1717.9 559.5V596.0M1740.9 559.5V596.0M1745.5 559.5V596.0M1768.5 559.5V596.0M1855.9 559.5V596.0M1911.1 559.5V596.0M1915.7 559.5V596.0M2016.9 559.5V596.0M2095.1 559.5V596.0M2099.7 559.5V596.0M2104.3 559.5V596.0M2118.1 559.5V596.0M2214.7 559.5V596.0M2223.9 559.5V596.0M2246.9 559.5V596.0M2279.1 559.5V596.0M2403.3 559.5V596.0M2430.9 559.5V596.0M2449.3 559.5V596.0M2458.5 559.5V596.0M2463.1 559.5V596.0M2472.3 559.5V596.0M2513.7 559.5V596.0M2518.3 559.5V596.0M2522.9 559.5V596.0M2527.5 559.5V596.0M2532.1 559.5V596.0M2545.9 559.5V596.0" stroke="#00dc00" stroke-opacity="0.050" stroke-width="4.6" fill="none" shape-rendering="crispEdges"/>
<path d="M80.3 559.5V596.0M84.9 559.5V596.0M89.5 559.5V596.0M135.5 559.5V596.0M140.1 559.5V596.0M222.9 559.5V596.0M227.5 559.5V596.0M273.5 559.5V596.0M278.1 559.5V596.0M282.7 559.5V596.0M287.3 559.5V596.0M457.5 559.5V596.0M733.5 559.5V596.0M853.1 559.5V596.0M949.7 559.5V596.0M986.5 559.5V596.0M991.1 559.5V596.0M995.7 559.5V596.0M1041.7 559.5V596.0M1198.1 559.5V596.0M1340.7 559.5V596.0M1345.3 559.5V596.0M1349.9 559.5V596.0M1533.9 559.5V596.0M1621.3 559.5V596.0M1901.9 559.5V596.0M2072.1 559.5V596.0M2090.5 559.5V596.0M2113.5 559.5V596.0M2219.3 559.5V596.0M2242.3 559.5V596.0M2380.3 559.5V596.0M2426.3 559.5V596.0M2444.7 559.5V596.0M2467.7 559.5V596.0M2486.1 559.5V596.0" stroke="#00dc00" stroke-opacity="0.100" stroke-width="4.6" fill="none" shape-rendering="crispEdges"/>
<path d="M126.3 596.0V623.0M172.3 596.0V623.0M176.9 596.0V623.0M181.5 596.0V623.0M204.5 596.0V623.0M287.3 596.0V623.0M314.9 596.0V623.0M351.7 596.0V623.0M360.9 596.0V623.0M383.9 596.0V623.0M586.3 596.0V623.0M590.9 596.0V623.0M682.9 596.0V623.0M715.1 596.0V623.0M719.7 596.0V623.0M733.5 596.0V623.0M747.3 596.0V623.0M756.5 596.0V623.0M765.7 596.0V623.0M788.7 596.0V623.0M848.5 596.0V623.0M885.3 596.0V623.0M889.9 596.0V623.0M949.7 596.0V623.0M968.1 596.0V623.0M1055.5 596.0V623.0M1060.1 596.0V623.0M1064.7 596.0V623.0M1101.5 596.0V623.0M1147.5 596.0V623.0M1152.1 596.0V623.0M1294.7 596.0V623.0M1336.1 596.0V623.0M1345.3 596.0V623.0M1349.9 596.0V623.0M1428.1 596.0V623.0M1469.5 596.0V623.0M1515.5 596.0V623.0M1561.5 596.0V623.0M1566.1 596.0V623.0M1570.7 596.0V623.0M1667.3 596.0V623.0M1671.9 596.0V623.0M1676.5 596.0V623.0M1800.7 596.0V623.0M1846.7 596.0V623.0M1855.9 596.0V623.0M1966.3 596.0V623.0M1970.9 596.0V623.0M1984.7 596.0V623.0M1989.3 596.0V623.0M2003.1 596.0V623.0M2007.7 596.0V623.0M2026.1 596.0V623.0M2030.7 596.0V623.0M2062.9 596.0V623.0M2072.1 596.0V623.0M2076.7 596.0V623.0M2104.3 596.0V623.0M2210.1 596.0V623.0M2223.9 596.0V623.0M2389.5 596.0V623.0M2394.1 596.0V623.0M2412.5 596.0V623.0M2486.1 596.0V623.0M2495.3 596.0V623.0M2536.7 596.0V623.0" stroke="#ffff00" stroke-opacity="0.080" stroke-width="4.6" fill="none" shape-rendering="crispEdges"/>
<path d="M291.9 596.0V623.0M347.1 596.0V623.0M687.5 596.0V623.0M692.1 596.0V623.0M696.7 596.0V623.0M701.3 596.0V623.0M784.1 596.0V623.0M793.3 596.0V623.0M797.9 596.0V623.0M802.5 596.0V623.0M807.1 596.0V623.0M876.1 596.0V623.0M899.1 596.0V623.0M917.5 596.0V623.0M922.1 596.0V623.0M926.7 596.0V623.0M931.3 596.0V623.0M935.9 596.0V623.0M940.5 596.0V623.0M945.1 596.0V623.0M995.7 596.0V623.0M1027.9 596.0V623.0M1032.5 596.0V623.0M1041.7 596.0V623.0M1046.3 596.0V623.0M1050.9 596.0V623.0M1069.3 596.0V623.0M1073.9 596.0V623.0M1078.5 596.0V623.0M1115.3 596.0V623.0M1119.9 596.0V623.0M1340.7 596.0V623.0M1437.3 596.0V623.0M1501.7 596.0V623.0M1957.1 596.0V623.0M1961.7 596.0V623.0M2021.5 596.0V623.0M2049.1 596.0V623.0M2053.7 596.0V623.0M2219.3 596.0V623.0M2375.7 596.0V623.0M2398.7 596.0V623.0M2403.3 596.0V623.0M2490.7 596.0V623.0M2527.5 596.0V623.0" stroke="#ffff00" stroke-opacity="0.150" stroke-width="4.6" fill="none" shape-rendering="crispEdges"/>
<path d="M112.5 596.0V623.0M218.3 596.0V623.0M227.5 596.0V623.0M236.7 596.0V623.0M241.3 596.0V623.0M245.9 596.0V623.0M259.7 596.0V623.0M273.5 596.0V623.0M324.1 596.0V623.0M328.7 596.0V623.0M333.3 596.0V623.0M402.3 596.0V623.0M411.5 596.0V623.0M443.7 596.0V623.0M452.9 596.0V623.0M462.1 596.0V623.0M466.7 596.0V623.0M471.3 596.0V623.0M480.5 596.0V623.0M485.1 596.0V623.0M494.3 596.0V623.0M498.9 596.0V623.0M517.3 596.0V623.0M540.3 596.0V623.0M554.1 596.0V623.0M632.3 596.0V623.0M664.5 596.0V623.0M673.7 596.0V623.0M678.3 596.0V623.0M724.3 596.0V623.0M774.9 596.0V623.0M779.5 596.0V623.0M825.5 596.0V623.0M903.7 596.0V623.0M963.5 596.0V623.0M1179.7 596.0V623.0M1188.9 596.0V623.0M1207.3 596.0V623.0M1211.9 596.0V623.0M1267.1 596.0V623.0M1299.3 596.0V623.0M1317.7 596.0V623.0M1322.3 596.0V623.0M1368.3 596.0V623.0M1382.1 596.0V623.0M1391.3 596.0V623.0M1400.5 596.0V623.0M1405.1 596.0V623.0M1409.7 596.0V623.0M1414.3 596.0V623.0M1451.1 596.0V623.0M1478.7 596.0V623.0M1520.1 596.0V623.0M1533.9 596.0V623.0M1602.9 596.0V623.0M1612.1 596.0V623.0M1630.5 596.0V623.0M1635.1 596.0V623.0M1644.3 596.0V623.0M1708.7 596.0V623.0M1731.7 596.0V623.0M1745.5 596.0V623.0M1759.3 596.0V623.0M1782.3 596.0V623.0M1832.9 596.0V623.0M1837.5 596.0V623.0M1842.1 596.0V623.0M1888.1 596.0V623.0M1892.7 596.0V623.0M1906.5 596.0V623.0M1911.1 596.0V623.0M1920.3 596.0V623.0M1934.1 596.0V623.0M1980.1 596.0V623.0M1998.5 596.0V623.0M2085.9 596.0V623.0M2131.9 596.0V623.0M2141.1 596.0V623.0M2150.3 596.0V623.0M2154.9 596.0V623.0M2196.3 596.0V623.0M2200.9 596.0V623.0M2302.1 596.0V623.0M2306.7 596.0V623.0M2315.9 596.0V623.0M2426.3 596.0V623.0M2463.1 596.0V623.0M2472.3 596.0V623.0M2559.7 596.0V623.0M2578.1 596.0V623.0M2582.7 596.0V623.0M2587.3 596.0V623.0" stroke="#00dc00" stroke-opacity="0.080" stroke-width="4.6" fill="none" shape-rendering="crispEdges"/>
<path d="M144.7 596.0V623.0M149.3 596.0V623.0M153.9 596.0V623.0M163.1 596.0V623.0M232.1 596.0V623.0M250.5 596.0V623.0M255.1 596.0V623.0M268.9 596.0V623.0M406.9 596.0V623.0M448.3 596.0V623.0M457.5 596.0V623.0M489.7 596.0V623.0M508.1 596.0V623.0M512.7 596.0V623.0M521.9 596.0V623.0M526.5 596.0V623.0M627.7 596.0V623.0M820.9 596.0V623.0M834.7 596.0V623.0M862.3 596.0V623.0M866.9 596.0V623.0M977.3 596.0V623.0M1184.3 596.0V623.0M1193.5 596.0V623.0M1198.1 596.0V623.0M1221.1 596.0V623.0M1257.9 596.0V623.0M1262.5 596.0V623.0M1326.9 596.0V623.0M1331.5 596.0V623.0M1359.1 596.0V623.0M1363.7 596.0V623.0M1395.9 596.0V623.0M1418.9 596.0V623.0M1589.1 596.0V623.0M1607.5 596.0V623.0M1713.3 596.0V623.0M1763.9 596.0V623.0M1883.5 596.0V623.0M1901.9 596.0V623.0M1915.7 596.0V623.0M1943.3 596.0V623.0M2233.1 596.0V623.0M2242.3 596.0V623.0M2311.3 596.0V623.0M2357.3 596.0V623.0M2361.9 596.0V623.0M2458.5 596.0V623.0M2573.5 596.0V623.0" stroke="#00dc00" stroke-opacity="0.150" stroke-width="4.6" fill="none" shape-rendering="crispEdges"/>
<path d="M89.5 623.0V650.7M163.1 623.0V650.7M167.7 623.0V650.7M209.1 623.0V650.7M213.7 623.0V650.7M232.1 623.0V650.7M245.9 623.0V650.7M305.7 623.0V650.7M310.3 623.0V650.7M333.3 623.0V650.7M342.5 623.0V650.7M370.1 623.0V650.7M397.7 623.0V650.7M402.3 623.0V650.7M406.9 623.0V650.7M411.5 623.0V650.7M416.1 623.0V650.7M471.3 623.0V650.7M475.9 623.0V650.7M521.9 623.0V650.7M572.5 623.0V650.7M590.9 623.0V650.7M627.7 623.0V650.7M632.3 623.0V650.7M641.5 623.0V650.7M646.1 623.0V650.7M678.3 623.0V650.7M733.5 623.0V650.7M770.3 623.0V650.7M774.9 623.0V650.7M825.5 623.0V650.7M862.3 623.0V650.7M922.1 623.0V650.7M968.1 623.0V650.7M981.9 623.0V650.7M986.5 623.0V650.7M991.1 623.0V650.7M1027.9 623.0V650.7M1064.7 623.0V650.7M1087.7 623.0V650.7M1092.3 623.0V650.7M1096.9 623.0V650.7M1101.5 623.0V650.7M1119.9 623.0V650.7M1129.1 623.0V650.7M1133.7 623.0V650.7M1188.9 623.0V650.7M1221.1 623.0V650.7M1257.9 623.0V650.7M1262.5 623.0V650.7M1313.1 623.0V650.7M1382.1 623.0V650.7M1386.7 623.0V650.7M1418.9 623.0V650.7M1428.1 623.0V650.7M1437.3 623.0V650.7M1441.9 623.0V650.7M1455.7 623.0V650.7M1460.3 623.0V650.7M1464.9 623.0V650.7M1478.7 623.0V650.7M1602.9 623.0V650.7M1612.1 623.0V650.7M1616.7 623.0V650.7M1621.3 623.0V650.7M1648.9 623.0V650.7M1745.5 623.0V650.7M1750.1 623.0V650.7M1791.5 623.0V650.7M1805.3 623.0V650.7M1819.1 623.0V650.7M1851.3 623.0V650.7M1938.7 623.0V650.7M1952.5 623.0V650.7M1957.1 623.0V650.7M1961.7 623.0V650.7M1975.5 623.0V650.7M1980.1 623.0V650.7M1984.7 623.0V650.7M1989.3 623.0V650.7M2021.5 623.0V650.7M2039.9 623.0V650.7M2044.5 623.0V650.7M2053.7 623.0V650.7M2108.9 623.0V650.7M2113.5 623.0V650.7M2205.5 623.0V650.7M2210.1 623.0V650.7M2223.9 623.0V650.7M2265.3 623.0V650.7M2288.3 623.0V650.7M2302.1 623.0V650.7M2306.7 623.0V650.7M2320.5 623.0V650.7M2325.1 623.0V650.7M2343.5 623.0V650.7M2361.9 623.0V650.7M2412.5 623.0V650.7M2467.7 623.0V650.7M2481.5 623.0V650.7M2545.9 623.0V650.7M2555.1 623.0V650.7M2559.7 623.0V650.7M2564.3 623.0V650.7M2568.9 623.0V650.7" stroke="#ffff00" stroke-opacity="0.050" stroke-width="4.6" fill="none" shape-rendering="crispEdges"/>
<path d="M84.9 623.0V650.7M149.3 623.0V650.7M153.9 623.0V650.7M158.5 623.0V650.7M218.3 623.0V650.7M222.9 623.0V650.7M250.5 623.0V650.7M259.7 623.0V650.7M264.3 623.0V650.7M314.9 623.0V650.7M351.7 623.0V650.7M365.5 623.0V650.7M544.9 623.0V650.7M581.7 623.0V650.7M586.3 623.0V650.7M659.9 623.0V650.7M751.9 623.0V650.7M765.7 623.0V650.7M972.7 623.0V650.7M977.3 623.0V650.7M1004.9 623.0V650.7M1069.3 623.0V650.7M1193.5 623.0V650.7M1198.1 623.0V650.7M1248.7 623.0V650.7M1423.5 623.0V650.7M1492.5 623.0V650.7M1713.3 623.0V650.7M1786.9 623.0V650.7M2016.9 623.0V650.7M2026.1 623.0V650.7M2030.7 623.0V650.7M2049.1 623.0V650.7M2099.7 623.0V650.7M2104.3 623.0V650.7M2182.5 623.0V650.7M2200.9 623.0V650.7M2233.1 623.0V650.7M2260.7 623.0V650.7M2292.9 623.0V650.7M2297.5 623.0V650.7M2348.1 623.0V650.7M2407.9 623.0V650.7" stroke="#ffff00" stroke-opacity="0.090" stroke-width="4.6" fill="none" shape-rendering="crispEdges"/>
<path d="M186.1 623.0V650.7M195.3 623.0V650.7M291.9 623.0V650.7M356.3 623.0V650.7M374.7 623.0V650.7M383.9 623.0V650.7M388.5 623.0V650.7M457.5 623.0V650.7M462.1 623.0V650.7M485.1 623.0V650.7M489.7 623.0V650.7M498.9 623.0V650.7M508.1 623.0V650.7M577.1 623.0V650.7M613.9 623.0V650.7M701.3 623.0V650.7M705.9 623.0V650.7M710.5 623.0V650.7M719.7 623.0V650.7M793.3 623.0V650.7M797.9 623.0V650.7M820.9 623.0V650.7M843.9 623.0V650.7M866.9 623.0V650.7M899.1 623.0V650.7M903.7 623.0V650.7M908.3 623.0V650.7M917.5 623.0V650.7M949.7 623.0V650.7M954.3 623.0V650.7M1014.1 623.0V650.7M1147.5 623.0V650.7M1161.3 623.0V650.7M1170.5 623.0V650.7M1207.3 623.0V650.7M1276.3 623.0V650.7M1299.3 623.0V650.7M1303.9 623.0V650.7M1308.5 623.0V650.7M1326.9 623.0V650.7M1345.3 623.0V650.7M1349.9 623.0V650.7M1359.1 623.0V650.7M1372.9 623.0V650.7M1506.3 623.0V650.7M1515.5 623.0V650.7M1529.3 623.0V650.7M1538.5 623.0V650.7M1547.7 623.0V650.7M1575.3 623.0V650.7M1593.7 623.0V650.7M1630.5 623.0V650.7M1653.5 623.0V650.7M1671.9 623.0V650.7M1676.5 623.0V650.7M1727.1 623.0V650.7M1754.7 623.0V650.7M1763.9 623.0V650.7M1796.1 623.0V650.7M1814.5 623.0V650.7M1860.5 623.0V650.7M1874.3 623.0V650.7M1883.5 623.0V650.7M1901.9 623.0V650.7M1911.1 623.0V650.7M1915.7 623.0V650.7M1920.3 623.0V650.7M1966.3 623.0V650.7M1970.9 623.0V650.7M2003.1 623.0V650.7M2067.5 623.0V650.7M2081.3 623.0V650.7M2090.5 623.0V650.7M2141.1 623.0V650.7M2154.9 623.0V650.7M2159.5 623.0V650.7M2219.3 623.0V650.7M2246.9 623.0V650.7M2274.5 623.0V650.7M2315.9 623.0V650.7M2389.5 623.0V650.7M2394.1 623.0V650.7M2440.1 623.0V650.7M2486.1 623.0V650.7M2518.3 623.0V650.7M2532.1 623.0V650.7M2582.7 623.0V650.7M2591.9 623.0V650.7" stroke="#00dc00" stroke-opacity="0.050" stroke-width="4.6" fill="none" shape-rendering="crispEdges"/>
<path d="M107.9 623.0V650.7M112.5 623.0V650.7M117.1 623.0V650.7M181.5 623.0V650.7M190.7 623.0V650.7M448.3 623.0V650.7M452.9 623.0V650.7M609.3 623.0V650.7M618.5 623.0V650.7M682.9 623.0V650.7M788.7 623.0V650.7M802.5 623.0V650.7M807.1 623.0V650.7M848.5 623.0V650.7M853.1 623.0V650.7M958.9 623.0V650.7M1018.7 623.0V650.7M1110.7 623.0V650.7M1138.3 623.0V650.7M1165.9 623.0V650.7M1184.3 623.0V650.7M1211.9 623.0V650.7M1331.5 623.0V650.7M1363.7 623.0V650.7M1510.9 623.0V650.7M1533.9 623.0V650.7M1552.3 623.0V650.7M1598.3 623.0V650.7M1635.1 623.0V650.7M1658.1 623.0V650.7M1662.7 623.0V650.7M1667.3 623.0V650.7M1731.7 623.0V650.7M1768.5 623.0V650.7M1773.1 623.0V650.7M1832.9 623.0V650.7M1837.5 623.0V650.7M1842.1 623.0V650.7M1878.9 623.0V650.7M1906.5 623.0V650.7M2072.1 623.0V650.7M2076.7 623.0V650.7M2085.9 623.0V650.7M2352.7 623.0V650.7M2371.1 623.0V650.7M2421.7 623.0V650.7M2449.3 623.0V650.7M2522.9 623.0V650.7M2527.5 623.0V650.7M2587.3 623.0V650.7" stroke="#00dc00" stroke-opacity="0.090" stroke-width="4.6" fill="none" shape-rendering="crispEdges"/>
<path d="M112.5 650.7V787.4M126.3 650.7V787.4M163.1 650.7V787.4M218.3 650.7V787.4M236.7 650.7V787.4M264.3 650.7V787.4M273.5 650.7V787.4M314.9 650.7V787.4M420.7 650.7V787.4M609.3 650.7V787.4M623.1 650.7V787.4M627.7 650.7V787.4M636.9 650.7V787.4M678.3 650.7V787.4M701.3 650.7V787.4M705.9 650.7V787.4M728.9 650.7V787.4M738.1 650.7V787.4M747.3 650.7V787.4M751.9 650.7V787.4M820.9 650.7V787.4M876.1 650.7V787.4M885.3 650.7V787.4M945.1 650.7V787.4M949.7 650.7V787.4M972.7 650.7V787.4M977.3 650.7V787.4M986.5 650.7V787.4M1037.1 650.7V787.4M1101.5 650.7V787.4M1133.7 650.7V787.4M1152.1 650.7V787.4M1165.9 650.7V787.4M1170.5 650.7V787.4M1198.1 650.7V787.4M1308.5 650.7V787.4M1313.1 650.7V787.4M1331.5 650.7V787.4M1359.1 650.7V787.4M1377.5 650.7V787.4M1414.3 650.7V787.4M1446.5 650.7V787.4M1460.3 650.7V787.4M1510.9 650.7V787.4M1543.1 650.7V787.4M1566.1 650.7V787.4M1570.7 650.7V787.4M1630.5 650.7V787.4M1639.7 650.7V787.4M1699.5 650.7V787.4M1704.1 650.7V787.4M1713.3 650.7V787.4M1717.9 650.7V787.4M1722.5 650.7V787.4M1727.1 650.7V787.4M1740.9 650.7V787.4M1750.1 650.7V787.4M1786.9 650.7V787.4M1874.3 650.7V787.4M1888.1 650.7V787.4M1911.1 650.7V787.4M2012.3 650.7V787.4M2016.9 650.7V787.4M2067.5 650.7V787.4M2081.3 650.7V787.4M2085.9 650.7V787.4M2145.7 650.7V787.4M2150.3 650.7V787.4M2168.7 650.7V787.4M2173.3 650.7V787.4M2191.7 650.7V787.4M2228.5 650.7V787.4M2265.3 650.7V787.4M2274.5 650.7V787.4M2279.1 650.7V787.4M2288.3 650.7V787.4M2343.5 650.7V787.4M2361.9 650.7V787.4M2394.1 650.7V787.4M2403.3 650.7V787.4M2449.3 650.7V787.4M2472.3 650.7V787.4M2522.9 650.7V787.4M2527.5 650.7V787.4M2536.7 650.7V787.4" stroke="#ffffff" stroke-opacity="0.012" stroke-width="4.6" fill="none" shape-rendering="crispEdges"/>
<path d="M130.9 650.7V787.4M149.3 650.7V787.4M153.9 650.7V787.4M158.5 650.7V787.4M190.7 650.7V787.4M213.7 650.7V787.4M222.9 650.7V787.4M227.5 650.7V787.4M278.1 650.7V787.4M282.7 650.7V787.4M287.3 650.7V787.4M291.9 650.7V787.4M296.5 650.7V787.4M301.1 650.7V787.4M310.3 650.7V787.4M590.9 650.7V787.4M632.3 650.7V787.4M641.5 650.7V787.4M650.7 650.7V787.4M687.5 650.7V787.4M811.7 650.7V787.4M816.3 650.7V787.4M871.5 650.7V787.4M889.9 650.7V787.4M954.3 650.7V787.4M968.1 650.7V787.4M1129.1 650.7V787.4M1138.3 650.7V787.4M1142.9 650.7V787.4M1156.7 650.7V787.4M1161.3 650.7V787.4M1188.9 650.7V787.4M1529.3 650.7V787.4M1533.9 650.7V787.4M1602.9 650.7V787.4M1625.9 650.7V787.4M1694.9 650.7V787.4M1731.7 650.7V787.4M1736.3 650.7V787.4M1773.1 650.7V787.4M1777.7 650.7V787.4M1782.3 650.7V787.4M1865.1 650.7V787.4M1869.7 650.7V787.4M1892.7 650.7V787.4M1966.3 650.7V787.4M1970.9 650.7V787.4M2177.9 650.7V787.4M2338.9 650.7V787.4M2357.3 650.7V787.4M2371.1 650.7V787.4M2375.7 650.7V787.4M2380.3 650.7V787.4M2532.1 650.7V787.4" stroke="#ffffff" stroke-opacity="0.025" stroke-width="4.6" fill="none" shape-rendering="crispEdges"/>
<path d="M89.5 650.7V787.4M98.7 650.7V787.4M107.9 650.7V787.4M121.7 650.7V787.4M167.7 650.7V787.4M319.5 650.7V787.4M324.1 650.7V787.4M333.3 650.7V787.4M356.3 650.7V787.4M388.5 650.7V787.4M393.1 650.7V787.4M406.9 650.7V787.4M411.5 650.7V787.4M457.5 650.7V787.4M485.1 650.7V787.4M489.7 650.7V787.4M508.1 650.7V787.4M517.3 650.7V787.4M531.1 650.7V787.4M540.3 650.7V787.4M567.9 650.7V787.4M659.9 650.7V787.4M664.5 650.7V787.4M696.7 650.7V787.4M719.7 650.7V787.4M761.1 650.7V787.4M765.7 650.7V787.4M788.7 650.7V787.4M797.9 650.7V787.4M834.7 650.7V787.4M848.5 650.7V787.4M853.1 650.7V787.4M862.3 650.7V787.4M899.1 650.7V787.4M903.7 650.7V787.4M917.5 650.7V787.4M995.7 650.7V787.4M1041.7 650.7V787.4M1046.3 650.7V787.4M1050.9 650.7V787.4M1078.5 650.7V787.4M1083.1 650.7V787.4M1087.7 650.7V787.4M1115.3 650.7V787.4M1234.9 650.7V787.4M1248.7 650.7V787.4M1257.9 650.7V787.4M1276.3 650.7V787.4M1354.5 650.7V787.4M1363.7 650.7V787.4M1432.7 650.7V787.4M1483.3 650.7V787.4M1501.7 650.7V787.4M1520.1 650.7V787.4M1607.5 650.7V787.4M1648.9 650.7V787.4M1662.7 650.7V787.4M1667.3 650.7V787.4M1759.3 650.7V787.4M1823.7 650.7V787.4M1837.5 650.7V787.4M1915.7 650.7V787.4M1920.3 650.7V787.4M1924.9 650.7V787.4M1943.3 650.7V787.4M1989.3 650.7V787.4M2003.1 650.7V787.4M2026.1 650.7V787.4M2030.7 650.7V787.4M2058.3 650.7V787.4M2062.9 650.7V787.4M2118.1 650.7V787.4M2122.7 650.7V787.4M2237.7 650.7V787.4M2260.7 650.7V787.4M2292.9 650.7V787.4M2297.5 650.7V787.4M2302.1 650.7V787.4M2435.5 650.7V787.4M2440.1 650.7V787.4M2444.7 650.7V787.4M2463.1 650.7V787.4M2495.3 650.7V787.4M2504.5 650.7V787.4M2541.3 650.7V787.4M2559.7 650.7V787.4M2587.3 650.7V787.4" stroke="#ff8000" stroke-opacity="0.012" stroke-width="4.6" fill="none" shape-rendering="crispEdges"/>
<path d="M103.3 650.7V787.4M172.3 650.7V787.4M176.9 650.7V787.4M328.7 650.7V787.4M337.9 650.7V787.4M342.5 650.7V787.4M443.7 650.7V787.4M475.9 650.7V787.4M480.5 650.7V787.4M512.7 650.7V787.4M521.9 650.7V787.4M535.7 650.7V787.4M544.9 650.7V787.4M572.5 650.7V787.4M577.1 650.7V787.4M655.3 650.7V787.4M710.5 650.7V787.4M770.3 650.7V787.4M774.9 650.7V787.4M779.5 650.7V787.4M793.3 650.7V787.4M830.1 650.7V787.4M857.7 650.7V787.4M908.3 650.7V787.4M912.9 650.7V787.4M1253.3 650.7V787.4M1612.1 650.7V787.4M1616.7 650.7V787.4M1644.3 650.7V787.4M1653.5 650.7V787.4M1658.1 650.7V787.4M1828.3 650.7V787.4M1842.1 650.7V787.4M1952.5 650.7V787.4M2035.3 650.7V787.4M2053.7 650.7V787.4M2095.1 650.7V787.4M2127.3 650.7V787.4M2223.9 650.7V787.4M2242.3 650.7V787.4M2246.9 650.7V787.4M2251.5 650.7V787.4M2256.1 650.7V787.4M2513.7 650.7V787.4" stroke="#ff8000" stroke-opacity="0.025" stroke-width="4.6" fill="none" shape-rendering="crispEdges"/>
<g stroke="#000" stroke-width="1.4" stroke-dasharray="4.2 4.2" fill="none"><line x1="71.50" y1="787.40" x2="71.50" y2="27.90"/><line x1="291.34" y1="787.40" x2="291.34" y2="27.90"/><line x1="511.18" y1="787.40" x2="511.18" y2="27.90"/><line x1="731.02" y1="787.40" x2="731.02" y2="27.90"/><line x1="950.86" y1="787.40" x2="950.86" y2="27.90"/><line x1="1170.70" y1="787.40" x2="1170.70" y2="27.90"/><line x1="1390.54" y1="787.40" x2="1390.54" y2="27.90"/><line x1="1610.38" y1="787.40" x2="1610.38" y2="27.90"/><line x1="1830.22" y1="787.40" x2="1830.22" y2="27.90"/><line x1="2050.06" y1="787.40" x2="2050.06" y2="27.90"/><line x1="2269.90" y1="787.40" x2="2269.90" y2="27.90"/><line x1="2489.74" y1="787.40" x2="2489.74" y2="27.90"/><line x1="71.50" y1="711.45" x2="2709.58" y2="711.45"/><line x1="71.50" y1="635.50" x2="2709.58" y2="635.50"/><line x1="71.50" y1="559.55" x2="2709.58" y2="559.55"/><line x1="71.50" y1="483.60" x2="2709.58" y2="483.60"/><line x1="71.50" y1="407.65" x2="2709.58" y2="407.65"/><line x1="71.50" y1="331.70" x2="2709.58" y2="331.70"/><line x1="71.50" y1="255.75" x2="2709.58" y2="255.75"/><line x1="71.50" y1="179.80" x2="2709.58" y2="179.80"/><line x1="71.50" y1="103.85" x2="2709.58" y2="103.85"/><line x1="71.50" y1="29.10" x2="2709.58" y2="29.10"/></g>
<line x1="535.40" y1="787.40" x2="535.40" y2="27.90" stroke="#000" stroke-width="4.6" stroke-dasharray="4.1 4.1"/>
<line x1="2073.30" y1="787.40" x2="2073.30" y2="27.90" stroke="#000" stroke-width="4.6" stroke-dasharray="4.1 4.1"/>
<g stroke="#000" stroke-width="0.8"><line x1="71.50" y1="787.40" x2="71.50" y2="781.90"/><line x1="71.50" y1="27.90" x2="71.50" y2="33.40"/><line x1="291.34" y1="787.40" x2="291.34" y2="781.90"/><line x1="291.34" y1="27.90" x2="291.34" y2="33.40"/><line x1="511.18" y1="787.40" x2="511.18" y2="781.90"/><line x1="511.18" y1="27.90" x2="511.18" y2="33.40"/><line x1="731.02" y1="787.40" x2="731.02" y2="781.90"/><line x1="731.02" y1="27.90" x2="731.02" y2="33.40"/><line x1="950.86" y1="787.40" x2="950.86" y2="781.90"/><line x1="950.86" y1="27.90" x2="950.86" y2="33.40"/><line x1="1170.70" y1="787.40" x2="1170.70" y2="781.90"/><line x1="1170.70" y1="27.90" x2="1170.70" y2="33.40"/><line x1="1390.54" y1="787.40" x2="1390.54" y2="781.90"/><line x1="1390.54" y1="27.90" x2="1390.54" y2="33.40"/><line x1="1610.38" y1="787.40" x2="1610.38" y2="781.90"/><line x1="1610.38" y1="27.90" x2="1610.38" y2="33.40"/><line x1="1830.22" y1="787.40" x2="1830.22" y2="781.90"/><line x1="1830.22" y1="27.90" x2="1830.22" y2="33.40"/><line x1="2050.06" y1="787.40" x2="2050.06" y2="781.90"/><line x1="2050.06" y1="27.90" x2="2050.06" y2="33.40"/><line x1="2269.90" y1="787.40" x2="2269.90" y2="781.90"/><line x1="2269.90" y1="27.90" x2="2269.90" y2="33.40"/><line x1="2489.74" y1="787.40" x2="2489.74" y2="781.90"/><line x1="2489.74" y1="27.90" x2="2489.74" y2="33.40"/><line x1="2709.58" y1="787.40" x2="2709.58" y2="781.90"/><line x1="2709.58" y1="27.90" x2="2709.58" y2="33.40"/><line x1="71.50" y1="787.40" x2="77.00" y2="787.40"/><line x1="2709.58" y1="787.40" x2="2704.08" y2="787.40"/><line x1="71.50" y1="711.45" x2="77.00" y2="711.45"/><line x1="2709.58" y1="711.45" x2="2704.08" y2="711.45"/><line x1="71.50" y1="635.50" x2="77.00" y2="635.50"/><line x1="2709.58" y1="635.50" x2="2704.08" y2="635.50"/><line x1="71.50" y1="559.55" x2="77.00" y2="559.55"/><line x1="2709.58" y1="559.55" x2="2704.08" y2="559.55"/><line x1="71.50" y1="483.60" x2="77.00" y2="483.60"/><line x1="2709.58" y1="483.60" x2="2704.08" y2="483.60"/><line x1="71.50" y1="407.65" x2="77.00" y2="407.65"/><line x1="2709.58" y1="407.65" x2="2704.08" y2="407.65"/><line x1="71.50" y1="331.70" x2="77.00" y2="331.70"/><line x1="2709.58" y1="331.70" x2="2704.08" y2="331.70"/><line x1="71.50" y1="255.75" x2="77.00" y2="255.75"/><line x1="2709.58" y1="255.75" x2="2704.08" y2="255.75"/><line x1="71.50" y1="179.80" x2="77.00" y2="179.80"/><line x1="2709.58" y1="179.80" x2="2704.08" y2="179.80"/><line x1="71.50" y1="103.85" x2="77.00" y2="103.85"/><line x1="2709.58" y1="103.85" x2="2704.08" y2="103.85"/><line x1="71.50" y1="27.90" x2="77.00" y2="27.90"/><line x1="2709.58" y1="27.90" x2="2704.08" y2="27.90"/></g>
<g fill="none" stroke-width="1.1"><path d="M71.00 28.45H2710.08" stroke="#111"/><path d="M71.50 28.45V787.30" stroke="#999" stroke-opacity="0.5"/><path d="M2709.58 28.45V787.30H71.00" stroke="#444"/></g>
<rect x="2874.20" y="28.20" width="38.50" height="759.20" fill="url(#cb)" stroke="#333" stroke-width="1"/>
<line x1="2908.20" y1="97.22" x2="2912.20" y2="97.22" stroke="#000" stroke-opacity="0.3" stroke-width="1"/>
<line x1="2908.20" y1="200.75" x2="2912.20" y2="200.75" stroke="#000" stroke-opacity="0.3" stroke-width="1"/>
<line x1="2908.20" y1="304.27" x2="2912.20" y2="304.27" stroke="#000" stroke-opacity="0.3" stroke-width="1"/>
<line x1="2908.20" y1="407.80" x2="2912.20" y2="407.80" stroke="#000" stroke-opacity="0.3" stroke-width="1"/>
<line x1="2908.20" y1="511.33" x2="2912.20" y2="511.33" stroke="#000" stroke-opacity="0.3" stroke-width="1"/>
<line x1="2908.20" y1="614.85" x2="2912.20" y2="614.85" stroke="#000" stroke-opacity="0.3" stroke-width="1"/>
<line x1="2908.20" y1="718.38" x2="2912.20" y2="718.38" stroke="#000" stroke-opacity="0.3" stroke-width="1"/>
<text x="1390.00" y="25.00" text-anchor="middle" xml:space="preserve" style="white-space:pre" textLength="1642.4" lengthAdjust="spacing">Meteorological Institute of Ludwig-Maximilians-Universität (München, Germany; 48.148 N / 11.573 E):    HatPro: 21-04-2019</text>
<text x="83.00" y="809.90" text-anchor="middle">00</text>
<text x="291.34" y="809.90" text-anchor="middle">02</text>
<text x="511.18" y="809.90" text-anchor="middle">04</text>
<text x="731.02" y="809.90" text-anchor="middle">06</text>
<text x="950.86" y="809.90" text-anchor="middle">08</text>
<text x="1170.70" y="809.90" text-anchor="middle">10</text>
<text x="1390.54" y="809.90" text-anchor="middle">12</text>
<text x="1610.38" y="809.90" text-anchor="middle">14</text>
<text x="1830.22" y="809.90" text-anchor="middle">16</text>
<text x="2050.06" y="809.90" text-anchor="middle">18</text>
<text x="2269.90" y="809.90" text-anchor="middle">20</text>
<text x="2489.74" y="809.90" text-anchor="middle">22</text>
<text x="2709.58" y="809.90" text-anchor="middle">24</text>
<text x="69.00" y="794.80" text-anchor="end">0</text>
<text x="69.00" y="718.85" text-anchor="end">1</text>
<text x="69.00" y="642.90" text-anchor="end">2</text>
<text x="69.00" y="566.95" text-anchor="end">3</text>
<text x="69.00" y="491.00" text-anchor="end">4</text>
<text x="69.00" y="415.05" text-anchor="end">5</text>
<text x="69.00" y="339.10" text-anchor="end">6</text>
<text x="69.00" y="263.15" text-anchor="end">7</text>
<text x="69.00" y="187.20" text-anchor="end">8</text>
<text x="69.00" y="111.25" text-anchor="end">9</text>
<text x="68.20" y="35.30" text-anchor="end">10</text>
<text x="1390.60" y="839.80" text-anchor="middle">Time [UTC]</text>
<text x="535.30" y="833.00" text-anchor="middle">sunrise</text>
<text x="2073.30" y="833.00" text-anchor="middle">sunset</text>
<text transform="translate(24.2 409.7) rotate(-90)" text-anchor="middle">Height above ground [km]</text>
<text x="2914.10" y="104.92" text-anchor="start">30</text>
<text x="2914.10" y="208.45" text-anchor="start">15</text>
<text x="2914.10" y="311.97" text-anchor="start">0</text>
<text x="2916.00" y="415.50" text-anchor="start" textLength="54.5" lengthAdjust="spacing">−15</text>
<text x="2916.00" y="519.03" text-anchor="start" textLength="54.5" lengthAdjust="spacing">−30</text>
<text x="2916.00" y="622.55" text-anchor="start" textLength="54.5" lengthAdjust="spacing">−45</text>
<text x="2916.00" y="726.08" text-anchor="start" textLength="54.5" lengthAdjust="spacing">−60</text>
<g transform="translate(2994.0 533.5) rotate(-90)"><text x="0" y="0" textLength="205.9" lengthAdjust="spacing">Temperature in</text><text x="216.9" y="-1.9" style="font-size:22px">°</text><text x="231.0" y="0">C</text></g>
</svg></body></html>
